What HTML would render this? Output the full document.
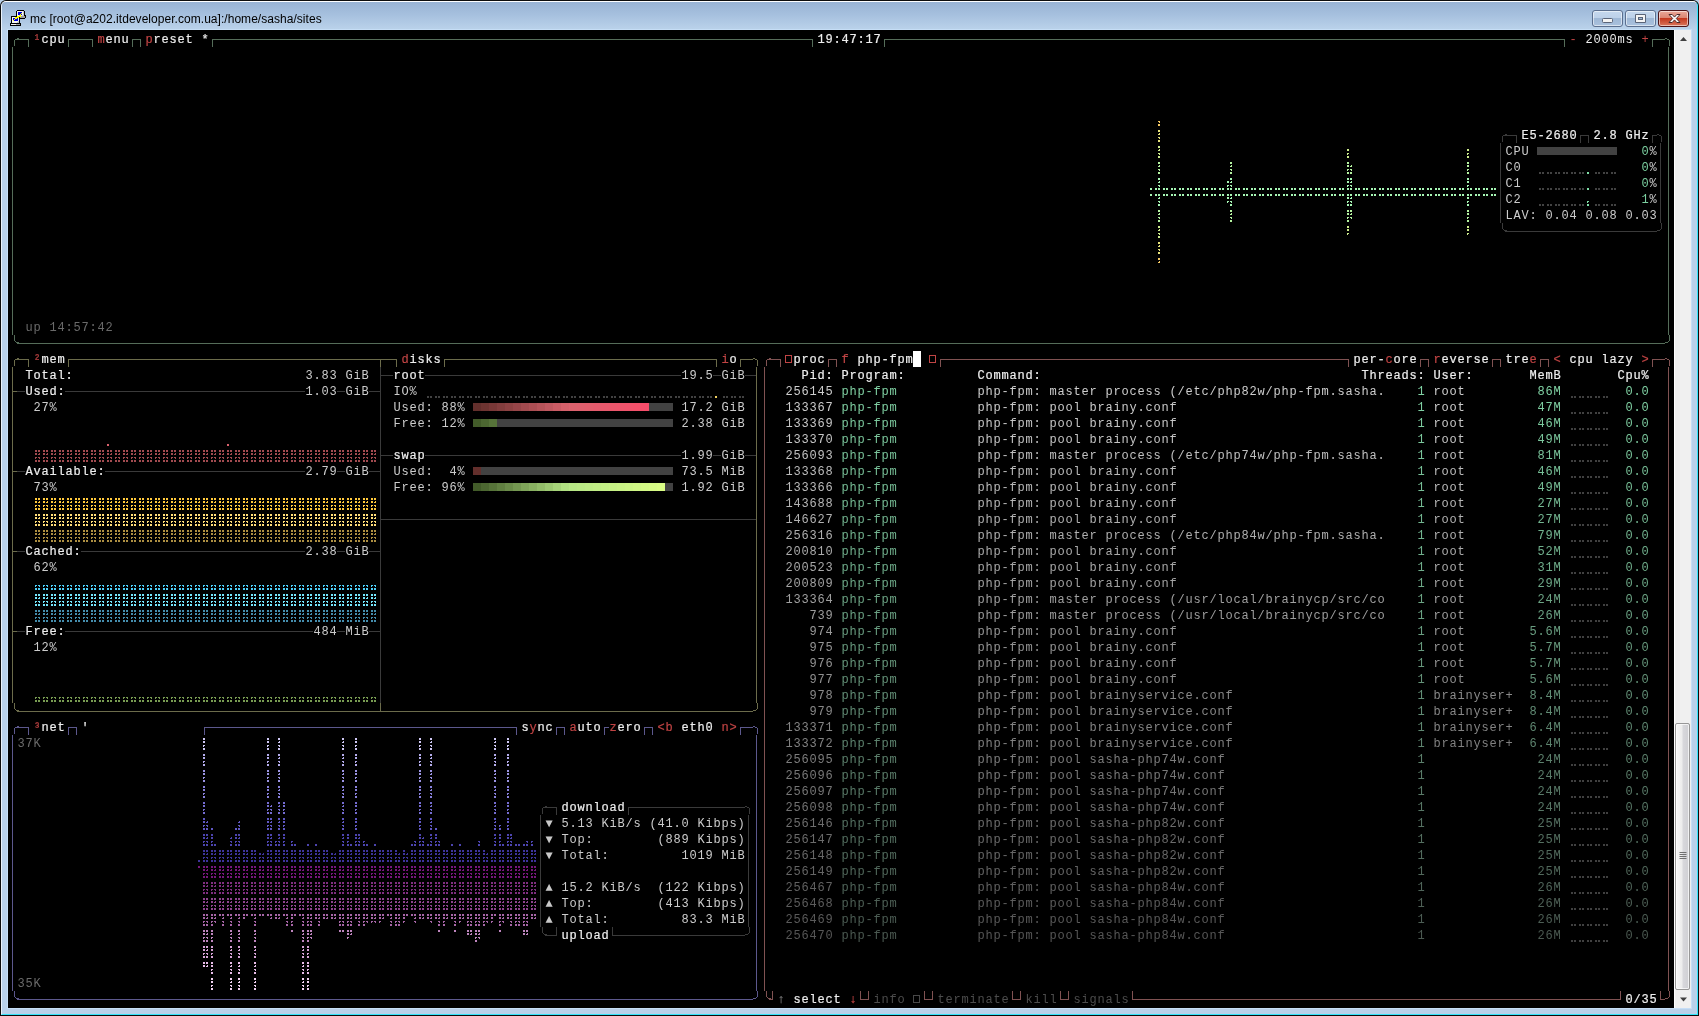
<!DOCTYPE html>
<html lang="en"><head><meta charset="utf-8">
<title>mc [root@a202.itdeveloper.com.ua]:/home/sasha/sites</title>
<style>
html,body{margin:0;padding:0}
body{width:1699px;height:1016px;overflow:hidden;background:#b9d1ea;position:relative;font-family:"Liberation Sans",sans-serif}
#frame{position:absolute;left:0;top:0;width:1699px;height:1016px;background:#0c0c0c;border-radius:6px 6px 0 0}
#frame2{position:absolute;left:1px;top:1px;width:1695px;height:1012px;border-top:1px solid #fdfeff;border-left:1px solid #eaf2fb;border-right:1px solid #33e4fb;border-bottom:1px solid #33e4fb;border-radius:5px 5px 0 0;background:#b9d1ea}
#tbar{position:absolute;left:2px;top:2px;width:1695px;height:28px;border-radius:4px 4px 0 0;background:linear-gradient(#98b3d4,#a6c0de 45%,#bbd3eb)}
#inner{position:absolute;left:7px;top:29px;width:1685px;height:980px;background:#c6def6}
#client{position:absolute;left:8px;top:30px;width:1666px;height:978px;background:#000}
#title{position:absolute;left:30px;top:11px;will-change:transform;font-size:12px;line-height:16px;color:#000;white-space:nowrap;letter-spacing:.04px}
#icon{position:absolute;left:10px;top:10px}
.wb{position:absolute;top:10px;height:15px;border:1px solid #5b6f8f;border-radius:3px;box-shadow:inset 0 0 0 1px rgba(255,255,255,.55);background:linear-gradient(#c5d8ee 0,#bdd1e9 45%,#9fb8d6 50%,#a9c1dd 100%)}
#bmin{left:1592px;width:29px}
#bmax{left:1625px;width:29px}
#bclose{left:1658px;width:29px;border-color:#4c1418;background:linear-gradient(#eaa898 0,#dc8672 45%,#c4391f 50%,#d9765c 100%)}
#sb{position:absolute;left:1674px;top:30px;width:17px;height:978px;background:#f0f0f0;border-left:1px solid #fff;box-sizing:border-box}
#thumb{position:absolute;left:1675px;top:723px;width:13px;height:265px;border:1px solid #979797;border-radius:2px;background:linear-gradient(90deg,#f6f6f6,#ececec 48%,#d8d8dc 52%,#cfcfd3);box-shadow:inset 0 0 0 1px rgba(255,255,255,.7)}
#term{position:absolute;left:0;top:0;width:1699px;height:1016px;font-family:"Liberation Mono","DejaVu Sans Mono",monospace;font-size:12px;letter-spacing:.8px;line-height:16px;color:#ccc;will-change:transform}
#gfx{position:absolute;left:0;top:0}
.r{position:absolute;left:.4px;height:16px;width:1699px;white-space:pre}
.r span{position:absolute;top:1px;white-space:pre}
.b{-webkit-text-stroke:.2px}
.c0{color:#4b5951}
.c1{color:#4c4c4c}
.c2{color:#4c5d54}
.c3{color:#4e6056}
.c4{color:#4f6459}
.c5{color:#51685b}
.c6{color:#526b5d}
.c7{color:#546f60}
.c8{color:#557162}
.c9{color:#565656}
.c10{color:#577665}
.c11{color:#597a68}
.c12{color:#5a5a5a}
.c13{color:#5a7c69}
.c14{color:#5c806c}
.c15{color:#5d5d5d}
.c16{color:#5e846f}
.c17{color:#5f8771}
.c18{color:#616161}
.c19{color:#618b74}
.c20{color:#628e76}
.c21{color:#649278}
.c22{color:#656565}
.c23{color:#66967b}
.c24{color:#676767}
.c25{color:#67997d}
.c26{color:#699d80}
.c27{color:#6a6a6a}
.c28{color:#6aa183}
.c29{color:#6b6b6b}
.c30{color:#6ca484}
.c31{color:#6da887}
.c32{color:#6e6e6e}
.c33{color:#6fac8a}
.c34{color:#70af8c}
.c35{color:#727272}
.c36{color:#72b38f}
.c37{color:#73b590}
.c38{color:#75ba93}
.c39{color:#767676}
.c40{color:#77be96}
.c41{color:#78c098}
.c42{color:#797979}
.c43{color:#7a7a7a}
.c44{color:#7ac49b}
.c45{color:#7bd0a0}
.c46{color:#7cc89d}
.c47{color:#7d7d7d}
.c48{color:#7dcb9f}
.c49{color:#7fcfa2}
.c50{color:#80d2a4}
.c51{color:#818181}
.c52{color:#848484}
.c53{color:#888888}
.c54{color:#8a8a8a}
.c55{color:#8f8f8f}
.c56{color:#939393}
.c57{color:#959595}
.c58{color:#999999}
.c59{color:#9d9d9d}
.c60{color:#a0a0a0}
.c61{color:#a4a4a4}
.c62{color:#a8a8a8}
.c63{color:#ababab}
.c64{color:#afafaf}
.c65{color:#b2b2b2}
.c66{color:#b6b6b6}
.c67{color:#bababa}
.c68{color:#bcbcbc}
.c69{color:#c04444}
.c70{color:#c0c0c0}
.c71{color:#c5c5c5}
.c72{color:#c7c7c7}
.c73{color:#c8c8c8}
.c74{color:#cbcbcb}
.c75{color:#cccccc}
.c76{color:#cecece}
.c77{color:#eeeeee}
</style></head><body>
<div id="frame"></div><div id="frame2"></div><div id="tbar"></div><div id="inner"></div>
<svg id="icon" width="16" height="16" viewBox="0 0 16 16" shape-rendering="crispEdges"><path fill="#000" d="M7 0h7v1h-7zM6 1h1v1h-1zM14 1h1v1h-1zM6 2h1v1h-1zM14 2h1v1h-1zM6 3h1v1h-1zM14 3h1v1h-1zM6 4h1v1h-1zM14 4h1v1h-1zM6 5h1v1h-1zM14 5h2v1h-2zM1 6h6v1h-6zM15 6h1v1h-1zM1 7h1v1h-1zM9 7h1v1h-1zM15 7h1v1h-1zM1 8h1v1h-1zM9 8h6v1h-6zM1 9h1v1h-1zM9 9h1v1h-1zM1 10h1v1h-1zM9 10h1v1h-1zM1 11h1v1h-1zM9 11h1v1h-1zM1 12h1v1h-1zM9 12h1v1h-1zM0 13h11v1h-11zM0 14h1v1h-1zM10 14h1v1h-1zM0 15h11v1h-11z"/><path fill="#f4f4f4" d="M7 1h6v1h-6zM7 2h1v1h-1zM12 2h1v1h-1zM7 3h1v1h-1zM12 3h1v1h-1zM7 4h1v1h-1zM12 4h1v1h-1zM7 5h2v1h-2zM11 5h1v1h-1zM2 7h3v1h-3zM2 8h1v1h-1zM8 8h1v1h-1zM2 9h1v1h-1zM8 9h1v1h-1zM2 10h1v1h-1zM8 10h1v1h-1zM2 11h6v1h-6zM2 12h5v1h-5zM1 14h5v1h-5z"/><path fill="#c8c8c8" d="M13 1h1v1h-1zM13 2h1v1h-1zM13 3h1v1h-1zM13 4h1v1h-1zM12 5h2v1h-2zM8 11h1v1h-1zM7 12h2v1h-2z"/><path fill="#0000e0" d="M8 2h4v1h-4zM8 3h3v1h-3zM8 4h2v1h-2zM11 4h1v1h-1zM3 8h2v1h-2zM7 8h1v1h-1zM3 9h1v1h-1zM5 9h3v1h-3zM4 10h4v1h-4z"/><path fill="#ffff00" d="M11 3h1v1h-1zM10 4h1v1h-1zM9 5h2v1h-2zM7 6h4v1h-4zM5 7h4v1h-4zM5 8h2v1h-2zM4 9h1v1h-1zM3 10h1v1h-1z"/><path fill="#a0a0a0" d="M11 6h4v1h-4zM10 7h5v1h-5zM6 14h4v1h-4z"/></svg>
<div id="title">mc [root@a202.itdeveloper.com.ua]:/home/sasha/sites</div>
<div class="wb" id="bmin"></div><div class="wb" id="bmax"></div><div class="wb" id="bclose"></div>
<svg style="position:absolute;left:1590px;top:8px" width="104" height="22" viewBox="0 0 104 22">
<rect x="12.5" y="10.5" width="10" height="4" rx="1" fill="#f4f4f4" stroke="#5a6478"/>
<path d="M45.5 6.5h10v8h-10z" fill="#f4f4f4" stroke="#5a6478" stroke-linejoin="round"/><rect x="48.5" y="9.5" width="4" height="2" fill="#9fb8d6" stroke="#5a6478"/>
<path d="M79 6.5h3.2l2.3 2.6 2.3-2.6h3.2l-3.7 4 3.7 4h-3.2l-2.3-2.6-2.3 2.6h-3.2l3.7-4z" fill="#fff" stroke="#4a2a2a" stroke-width="1"/>
</svg>
<div id="client"></div><div id="sb"></div><div id="thumb"></div>
<svg style="position:absolute;left:1674px;top:30px" width="17" height="978" viewBox="0 0 17 978">
<path d="M6 11l3.5-4 3.5 4z" fill="#404040"/><path d="M6 967.5h7l-3.5 4z" fill="#404040"/>
<path d="M5.5 822.5h7M5.5 824.5h7M5.5 826.5h7M5.5 828.5h7" stroke="#707070" fill="none"/>
</svg>
<div id="term">
<svg id="gfx" width="1699" height="1016" viewBox="0 0 1699 1016" shape-rendering="crispEdges">
<path fill="#556d59" d="M14 40h1v6h-1zM15 39h2v1h-2zM17 38h2v1h-2zM17 39h8v1h-8zM25 39h4v1h-4zM28 40h1v7h-1zM68 39h5v1h-5zM68 40h1v7h-1zM73 39h8v1h-8zM81 39h8v1h-8zM89 39h4v1h-4zM92 40h1v7h-1zM132 39h5v1h-5zM132 40h1v7h-1zM137 39h4v1h-4zM140 40h1v7h-1zM212 39h5v1h-5zM212 40h1v7h-1zM217 39h592v1h-592zM809 39h4v1h-4zM812 40h1v7h-1zM884 39h5v1h-5zM884 40h1v7h-1zM889 39h672v1h-672zM1561 39h4v1h-4zM1564 40h1v7h-1zM1652 39h5v1h-5zM1652 40h1v7h-1zM1657 39h8v1h-8zM1665 38h2v1h-2zM1667 39h2v1h-2zM1669 40h1v6h-1zM12 47h1v288h-1zM1668 47h1v288h-1zM14 335h1v6h-1zM15 341h1v1h-1zM16 342h3v1h-3zM17 343h1648v1h-1648zM1669 335h1v6h-1zM1668 341h1v1h-1zM1665 342h3v1h-3z"/>
<path fill="#3a3a3a" d="M1502 136h1v6h-1zM1503 135h2v1h-2zM1505 134h2v1h-2zM1505 135h8v1h-8zM1513 135h4v1h-4zM1516 136h1v7h-1zM1580 135h5v1h-5zM1580 136h1v7h-1zM1585 135h4v1h-4zM1588 136h1v7h-1zM1652 135h5v1h-5zM1652 136h1v7h-1zM1657 134h2v1h-2zM1659 135h2v1h-2zM1661 136h1v6h-1zM1500 143h1v80h-1zM1660 143h1v80h-1zM1502 223h1v6h-1zM1503 229h1v1h-1zM1504 230h3v1h-3zM1505 231h152v1h-152zM1661 223h1v6h-1zM1660 229h1v1h-1zM1657 230h3v1h-3zM380 367h1v336h-1zM17 391h8v1h-8zM65 391h240v1h-240zM337 391h8v1h-8zM369 391h11v1h-11zM17 471h8v1h-8zM105 471h200v1h-200zM337 471h8v1h-8zM369 471h11v1h-11zM17 551h8v1h-8zM81 551h224v1h-224zM337 551h8v1h-8zM369 551h11v1h-11zM17 631h8v1h-8zM65 631h248v1h-248zM337 631h8v1h-8zM369 631h11v1h-11zM381 375h4v1h-4zM385 375h8v1h-8zM425 375h256v1h-256zM713 375h8v1h-8zM745 375h11v1h-11zM381 455h4v1h-4zM385 455h8v1h-8zM425 455h256v1h-256zM713 455h8v1h-8zM745 455h11v1h-11zM381 519h375v1h-375zM542 808h1v6h-1zM543 807h2v1h-2zM545 806h2v1h-2zM545 807h8v1h-8zM553 807h4v1h-4zM556 808h1v7h-1zM628 807h5v1h-5zM628 808h1v7h-1zM633 807h112v1h-112zM745 806h2v1h-2zM747 807h2v1h-2zM749 808h1v6h-1zM540 815h1v112h-1zM748 815h1v112h-1zM542 927h1v6h-1zM543 933h1v1h-1zM544 934h3v1h-3zM545 935h8v1h-8zM556 927h1v8h-1zM553 935h4v1h-4zM612 927h1v8h-1zM612 935h5v1h-5zM617 935h128v1h-128zM749 927h1v6h-1zM748 933h1v1h-1zM745 934h3v1h-3z"/>
<path fill="#424242" d="M1537 147h80v8h-80zM1539 172h2v2h-2zM1542 172h2v2h-2zM1547 172h2v2h-2zM1550 172h2v2h-2zM1555 172h2v2h-2zM1558 172h2v2h-2zM1563 172h2v2h-2zM1566 172h2v2h-2zM1571 172h2v2h-2zM1574 172h2v2h-2zM1579 172h2v2h-2zM1582 172h2v2h-2zM1595 172h2v2h-2zM1598 172h2v2h-2zM1603 172h2v2h-2zM1606 172h2v2h-2zM1611 172h2v2h-2zM1614 172h2v2h-2zM1539 188h2v2h-2zM1542 188h2v2h-2zM1547 188h2v2h-2zM1550 188h2v2h-2zM1555 188h2v2h-2zM1558 188h2v2h-2zM1563 188h2v2h-2zM1566 188h2v2h-2zM1571 188h2v2h-2zM1574 188h2v2h-2zM1579 188h2v2h-2zM1582 188h2v2h-2zM1595 188h2v2h-2zM1598 188h2v2h-2zM1603 188h2v2h-2zM1606 188h2v2h-2zM1611 188h2v2h-2zM1614 188h2v2h-2zM1539 204h2v2h-2zM1542 204h2v2h-2zM1547 204h2v2h-2zM1550 204h2v2h-2zM1555 204h2v2h-2zM1558 204h2v2h-2zM1563 204h2v2h-2zM1566 204h2v2h-2zM1571 204h2v2h-2zM1574 204h2v2h-2zM1579 204h2v2h-2zM1582 204h2v2h-2zM1595 204h2v2h-2zM1598 204h2v2h-2zM1603 204h2v2h-2zM1606 204h2v2h-2zM1611 204h2v2h-2zM1614 204h2v2h-2zM427 396h2v2h-2zM430 396h2v2h-2zM435 396h2v2h-2zM438 396h2v2h-2zM443 396h2v2h-2zM446 396h2v2h-2zM451 396h2v2h-2zM454 396h2v2h-2zM459 396h2v2h-2zM462 396h2v2h-2zM467 396h2v2h-2zM470 396h2v2h-2zM475 396h2v2h-2zM478 396h2v2h-2zM483 396h2v2h-2zM486 396h2v2h-2zM491 396h2v2h-2zM494 396h2v2h-2zM499 396h2v2h-2zM502 396h2v2h-2zM507 396h2v2h-2zM510 396h2v2h-2zM515 396h2v2h-2zM518 396h2v2h-2zM523 396h2v2h-2zM526 396h2v2h-2zM531 396h2v2h-2zM534 396h2v2h-2zM539 396h2v2h-2zM542 396h2v2h-2zM547 396h2v2h-2zM550 396h2v2h-2zM555 396h2v2h-2zM558 396h2v2h-2zM563 396h2v2h-2zM566 396h2v2h-2zM571 396h2v2h-2zM574 396h2v2h-2zM579 396h2v2h-2zM582 396h2v2h-2zM587 396h2v2h-2zM590 396h2v2h-2zM595 396h2v2h-2zM598 396h2v2h-2zM603 396h2v2h-2zM606 396h2v2h-2zM611 396h2v2h-2zM614 396h2v2h-2zM619 396h2v2h-2zM622 396h2v2h-2zM627 396h2v2h-2zM630 396h2v2h-2zM635 396h2v2h-2zM638 396h2v2h-2zM643 396h2v2h-2zM646 396h2v2h-2zM651 396h2v2h-2zM654 396h2v2h-2zM659 396h2v2h-2zM662 396h2v2h-2zM667 396h2v2h-2zM670 396h2v2h-2zM675 396h2v2h-2zM678 396h2v2h-2zM683 396h2v2h-2zM686 396h2v2h-2zM691 396h2v2h-2zM694 396h2v2h-2zM699 396h2v2h-2zM702 396h2v2h-2zM707 396h2v2h-2zM710 396h2v2h-2zM723 396h2v2h-2zM726 396h2v2h-2zM731 396h2v2h-2zM734 396h2v2h-2zM739 396h2v2h-2zM742 396h2v2h-2zM649 403h8v8h-8zM657 403h8v8h-8zM665 403h8v8h-8zM497 419h8v8h-8zM505 419h8v8h-8zM513 419h8v8h-8zM521 419h8v8h-8zM529 419h8v8h-8zM537 419h8v8h-8zM545 419h8v8h-8zM553 419h8v8h-8zM561 419h8v8h-8zM569 419h8v8h-8zM577 419h8v8h-8zM585 419h8v8h-8zM593 419h8v8h-8zM601 419h8v8h-8zM609 419h8v8h-8zM617 419h8v8h-8zM625 419h8v8h-8zM633 419h8v8h-8zM641 419h8v8h-8zM649 419h8v8h-8zM657 419h8v8h-8zM665 419h8v8h-8zM481 467h8v8h-8zM489 467h8v8h-8zM497 467h8v8h-8zM505 467h8v8h-8zM513 467h8v8h-8zM521 467h8v8h-8zM529 467h8v8h-8zM537 467h8v8h-8zM545 467h8v8h-8zM553 467h8v8h-8zM561 467h8v8h-8zM569 467h8v8h-8zM577 467h8v8h-8zM585 467h8v8h-8zM593 467h8v8h-8zM601 467h8v8h-8zM609 467h8v8h-8zM617 467h8v8h-8zM625 467h8v8h-8zM633 467h8v8h-8zM641 467h8v8h-8zM649 467h8v8h-8zM657 467h8v8h-8zM665 467h8v8h-8zM665 483h8v8h-8z"/>
<path fill="#7fe0a8" d="M1587 172h2v2h-2zM1587 188h2v2h-2zM1587 204h2v2h-2zM1587 201h2v1h-2zM1587 202h1v1h-1z"/>
<path fill="#a6f5b4" d="M1150 188h2v2h-2zM1150 194h2v2h-2zM1155 188h2v2h-2zM1155 194h2v2h-2zM1158 188h2v2h-2zM1158 185h2v1h-2zM1159 186h1v1h-1zM1159 181h1v1h-1zM1158 182h2v1h-2zM1158 178h2v2h-2zM1158 194h2v2h-2zM1159 197h1v1h-1zM1158 198h2v1h-2zM1158 201h2v1h-2zM1159 202h1v1h-1zM1158 204h2v2h-2zM1163 188h2v2h-2zM1163 194h2v2h-2zM1166 188h2v2h-2zM1166 194h2v2h-2zM1171 188h2v2h-2zM1171 194h2v2h-2zM1174 188h2v2h-2zM1174 194h2v2h-2zM1179 188h2v2h-2zM1179 194h2v2h-2zM1182 188h2v2h-2zM1182 194h2v2h-2zM1187 188h2v2h-2zM1187 194h2v2h-2zM1190 188h2v2h-2zM1190 194h2v2h-2zM1195 188h2v2h-2zM1195 194h2v2h-2zM1198 188h2v2h-2zM1198 194h2v2h-2zM1203 188h2v2h-2zM1203 194h2v2h-2zM1206 188h2v2h-2zM1206 194h2v2h-2zM1211 188h2v2h-2zM1211 194h2v2h-2zM1214 188h2v2h-2zM1214 194h2v2h-2zM1219 188h2v2h-2zM1219 194h2v2h-2zM1222 188h2v2h-2zM1222 194h2v2h-2zM1227 188h2v2h-2zM1227 185h2v1h-2zM1227 186h1v1h-1zM1227 181h2v2h-2zM1227 194h2v2h-2zM1227 197h2v2h-2zM1227 201h2v1h-2zM1227 202h1v1h-1zM1230 188h2v2h-2zM1230 185h2v1h-2zM1231 186h1v1h-1zM1231 181h1v1h-1zM1230 182h2v1h-2zM1230 178h2v2h-2zM1230 194h2v2h-2zM1231 197h1v1h-1zM1230 198h2v1h-2zM1230 201h2v1h-2zM1231 202h1v1h-1zM1230 204h2v2h-2zM1235 188h2v2h-2zM1235 194h2v2h-2zM1238 188h2v2h-2zM1238 194h2v2h-2zM1243 188h2v2h-2zM1243 194h2v2h-2zM1246 188h2v2h-2zM1246 194h2v2h-2zM1251 188h2v2h-2zM1251 194h2v2h-2zM1254 188h2v2h-2zM1254 194h2v2h-2zM1259 188h2v2h-2zM1259 194h2v2h-2zM1262 188h2v2h-2zM1262 194h2v2h-2zM1267 188h2v2h-2zM1267 194h2v2h-2zM1270 188h2v2h-2zM1270 194h2v2h-2zM1275 188h2v2h-2zM1275 194h2v2h-2zM1278 188h2v2h-2zM1278 194h2v2h-2zM1283 188h2v2h-2zM1283 194h2v2h-2zM1286 188h2v2h-2zM1286 194h2v2h-2zM1291 188h2v2h-2zM1291 194h2v2h-2zM1294 188h2v2h-2zM1294 194h2v2h-2zM1299 188h2v2h-2zM1299 194h2v2h-2zM1302 188h2v2h-2zM1302 194h2v2h-2zM1307 188h2v2h-2zM1307 194h2v2h-2zM1310 188h2v2h-2zM1310 194h2v2h-2zM1315 188h2v2h-2zM1315 194h2v2h-2zM1318 188h2v2h-2zM1318 194h2v2h-2zM1323 188h2v2h-2zM1323 194h2v2h-2zM1326 188h2v2h-2zM1326 194h2v2h-2zM1331 188h2v2h-2zM1331 194h2v2h-2zM1334 188h2v2h-2zM1334 194h2v2h-2zM1339 188h2v2h-2zM1339 194h2v2h-2zM1342 188h2v2h-2zM1342 194h2v2h-2zM1347 188h2v2h-2zM1347 185h2v1h-2zM1347 186h1v1h-1zM1347 181h2v2h-2zM1347 178h2v2h-2zM1347 194h2v2h-2zM1347 197h2v2h-2zM1347 201h2v1h-2zM1347 202h1v1h-1zM1347 204h2v2h-2zM1350 188h2v2h-2zM1350 185h2v1h-2zM1351 186h1v1h-1zM1351 181h1v1h-1zM1350 182h2v1h-2zM1350 178h2v2h-2zM1350 194h2v2h-2zM1351 197h1v1h-1zM1350 198h2v1h-2zM1350 201h2v1h-2zM1351 202h1v1h-1zM1350 204h2v2h-2zM1355 188h2v2h-2zM1355 194h2v2h-2zM1358 188h2v2h-2zM1358 194h2v2h-2zM1363 188h2v2h-2zM1363 194h2v2h-2zM1366 188h2v2h-2zM1366 194h2v2h-2zM1371 188h2v2h-2zM1371 194h2v2h-2zM1374 188h2v2h-2zM1374 194h2v2h-2zM1379 188h2v2h-2zM1379 194h2v2h-2zM1382 188h2v2h-2zM1382 194h2v2h-2zM1387 188h2v2h-2zM1387 194h2v2h-2zM1390 188h2v2h-2zM1390 194h2v2h-2zM1395 188h2v2h-2zM1395 194h2v2h-2zM1398 188h2v2h-2zM1398 194h2v2h-2zM1403 188h2v2h-2zM1403 194h2v2h-2zM1406 188h2v2h-2zM1406 194h2v2h-2zM1411 188h2v2h-2zM1411 194h2v2h-2zM1414 188h2v2h-2zM1414 194h2v2h-2zM1419 188h2v2h-2zM1419 194h2v2h-2zM1422 188h2v2h-2zM1422 194h2v2h-2zM1427 188h2v2h-2zM1427 194h2v2h-2zM1430 188h2v2h-2zM1430 194h2v2h-2zM1435 188h2v2h-2zM1435 194h2v2h-2zM1438 188h2v2h-2zM1438 194h2v2h-2zM1443 188h2v2h-2zM1443 194h2v2h-2zM1446 188h2v2h-2zM1446 194h2v2h-2zM1451 188h2v2h-2zM1451 194h2v2h-2zM1454 188h2v2h-2zM1454 194h2v2h-2zM1459 188h2v2h-2zM1459 194h2v2h-2zM1462 188h2v2h-2zM1462 194h2v2h-2zM1467 188h2v2h-2zM1467 185h2v1h-2zM1467 186h1v1h-1zM1467 181h2v2h-2zM1467 178h2v2h-2zM1467 194h2v2h-2zM1467 197h2v2h-2zM1467 201h2v1h-2zM1467 202h1v1h-1zM1467 204h2v2h-2zM1470 188h2v2h-2zM1470 194h2v2h-2zM1475 188h2v2h-2zM1475 194h2v2h-2zM1478 188h2v2h-2zM1478 194h2v2h-2zM1483 188h2v2h-2zM1483 194h2v2h-2zM1486 188h2v2h-2zM1486 194h2v2h-2zM1491 188h2v2h-2zM1491 194h2v2h-2zM1494 188h2v2h-2zM1494 194h2v2h-2z"/>
<path fill="#b4f2a0" d="M1158 172h2v2h-2zM1158 169h2v1h-2zM1159 170h1v1h-1zM1159 165h1v1h-1zM1158 166h2v1h-2zM1158 162h2v2h-2zM1158 210h2v2h-2zM1159 213h1v1h-1zM1158 214h2v1h-2zM1158 217h2v1h-2zM1159 218h1v1h-1zM1158 220h2v2h-2zM1230 172h2v2h-2zM1230 169h2v1h-2zM1231 170h1v1h-1zM1231 165h1v1h-1zM1230 166h2v1h-2zM1230 162h2v2h-2zM1230 210h2v2h-2zM1231 213h1v1h-1zM1230 214h2v1h-2zM1230 217h2v1h-2zM1231 218h1v1h-1zM1230 220h2v2h-2zM1347 172h2v2h-2zM1347 169h2v1h-2zM1347 170h1v1h-1zM1347 165h2v2h-2zM1347 162h2v2h-2zM1347 210h2v2h-2zM1347 213h2v2h-2zM1347 217h2v1h-2zM1347 218h1v1h-1zM1347 220h2v2h-2zM1350 172h2v2h-2zM1350 169h2v1h-2zM1351 170h1v1h-1zM1351 165h1v1h-1zM1350 166h2v1h-2zM1350 210h2v2h-2zM1351 213h1v1h-1zM1350 214h2v1h-2zM1350 217h2v1h-2zM1351 218h1v1h-1zM1467 172h2v2h-2zM1467 169h2v1h-2zM1467 170h1v1h-1zM1467 165h2v2h-2zM1467 162h2v2h-2zM1467 210h2v2h-2zM1467 213h2v2h-2zM1467 217h2v1h-2zM1467 218h1v1h-1zM1467 220h2v2h-2z"/>
<path fill="#cdec8c" d="M1158 156h2v2h-2zM1158 153h2v1h-2zM1159 154h1v1h-1zM1159 149h1v1h-1zM1158 150h2v1h-2zM1158 146h2v2h-2zM1158 226h2v2h-2zM1159 229h1v1h-1zM1158 230h2v1h-2zM1158 233h2v1h-2zM1159 234h1v1h-1zM1158 236h2v2h-2zM1347 156h2v2h-2zM1347 153h2v1h-2zM1347 154h1v1h-1zM1347 149h2v2h-2zM1347 226h2v2h-2zM1347 229h2v2h-2zM1347 233h2v1h-2zM1347 234h1v1h-1zM1467 156h2v2h-2zM1467 153h2v1h-2zM1467 154h1v1h-1zM1467 149h2v2h-2zM1467 226h2v2h-2zM1467 229h2v2h-2zM1467 233h2v1h-2zM1467 234h1v1h-1z"/>
<path fill="#e6e27a" d="M1158 140h2v2h-2zM1158 137h2v1h-2zM1159 138h1v1h-1zM1159 133h1v1h-1zM1158 134h2v1h-2zM1158 130h2v2h-2zM1158 242h2v2h-2zM1159 245h1v1h-1zM1158 246h2v1h-2zM1158 249h2v1h-2zM1159 250h1v1h-1zM1158 252h2v2h-2z"/>
<path fill="#f4c864" d="M1158 124h2v2h-2zM1158 121h2v1h-2zM1159 122h1v1h-1zM1158 258h2v2h-2zM1159 261h1v1h-1zM1158 262h2v1h-2z"/>
<path fill="#6c6c4b" d="M14 360h1v6h-1zM15 359h2v1h-2zM17 358h2v1h-2zM17 359h8v1h-8zM25 359h4v1h-4zM28 360h1v7h-1zM68 359h5v1h-5zM68 360h1v7h-1zM73 359h304v1h-304zM377 359h8v1h-8zM380 360h1v7h-1zM385 359h8v1h-8zM393 359h4v1h-4zM396 360h1v7h-1zM444 359h5v1h-5zM444 360h1v7h-1zM449 359h264v1h-264zM713 359h4v1h-4zM716 360h1v7h-1zM740 359h5v1h-5zM740 360h1v7h-1zM745 359h8v1h-8zM753 358h2v1h-2zM755 359h2v1h-2zM757 360h1v6h-1zM12 367h1v336h-1zM756 367h1v336h-1zM14 703h1v6h-1zM15 709h1v1h-1zM16 710h3v1h-3zM17 711h736v1h-736zM377 711h8v1h-8zM380 703h1v8h-1zM757 703h1v6h-1zM756 709h1v1h-1zM753 710h3v1h-3zM13 391h4v1h-4zM13 471h4v1h-4zM13 551h4v1h-4zM13 631h4v1h-4z"/>
<path fill="#a24b50" d="M35 450h2v2h-2zM35 453h2v2h-2zM35 457h2v1h-2zM35 458h1v1h-1zM35 460h2v2h-2zM38 450h2v2h-2zM39 453h1v1h-1zM38 454h2v1h-2zM38 457h2v1h-2zM39 458h1v1h-1zM38 460h2v2h-2zM43 450h2v2h-2zM43 453h2v2h-2zM43 457h2v1h-2zM43 458h1v1h-1zM43 460h2v2h-2zM46 450h2v2h-2zM47 453h1v1h-1zM46 454h2v1h-2zM46 457h2v1h-2zM47 458h1v1h-1zM46 460h2v2h-2zM51 450h2v2h-2zM51 453h2v2h-2zM51 457h2v1h-2zM51 458h1v1h-1zM51 460h2v2h-2zM54 450h2v2h-2zM55 453h1v1h-1zM54 454h2v1h-2zM54 457h2v1h-2zM55 458h1v1h-1zM54 460h2v2h-2zM59 450h2v2h-2zM59 453h2v2h-2zM59 457h2v1h-2zM59 458h1v1h-1zM59 460h2v2h-2zM62 450h2v2h-2zM63 453h1v1h-1zM62 454h2v1h-2zM62 457h2v1h-2zM63 458h1v1h-1zM62 460h2v2h-2zM67 450h2v2h-2zM67 453h2v2h-2zM67 457h2v1h-2zM67 458h1v1h-1zM67 460h2v2h-2zM70 450h2v2h-2zM71 453h1v1h-1zM70 454h2v1h-2zM70 457h2v1h-2zM71 458h1v1h-1zM70 460h2v2h-2zM75 450h2v2h-2zM75 453h2v2h-2zM75 457h2v1h-2zM75 458h1v1h-1zM75 460h2v2h-2zM78 450h2v2h-2zM79 453h1v1h-1zM78 454h2v1h-2zM78 457h2v1h-2zM79 458h1v1h-1zM78 460h2v2h-2zM83 450h2v2h-2zM83 453h2v2h-2zM83 457h2v1h-2zM83 458h1v1h-1zM83 460h2v2h-2zM86 450h2v2h-2zM87 453h1v1h-1zM86 454h2v1h-2zM86 457h2v1h-2zM87 458h1v1h-1zM86 460h2v2h-2zM91 450h2v2h-2zM91 453h2v2h-2zM91 457h2v1h-2zM91 458h1v1h-1zM91 460h2v2h-2zM94 450h2v2h-2zM95 453h1v1h-1zM94 454h2v1h-2zM94 457h2v1h-2zM95 458h1v1h-1zM94 460h2v2h-2zM99 450h2v2h-2zM99 453h2v2h-2zM99 457h2v1h-2zM99 458h1v1h-1zM99 460h2v2h-2zM102 450h2v2h-2zM103 453h1v1h-1zM102 454h2v1h-2zM102 457h2v1h-2zM103 458h1v1h-1zM102 460h2v2h-2zM107 450h2v2h-2zM107 453h2v2h-2zM107 457h2v1h-2zM107 458h1v1h-1zM107 460h2v2h-2zM110 450h2v2h-2zM111 453h1v1h-1zM110 454h2v1h-2zM110 457h2v1h-2zM111 458h1v1h-1zM110 460h2v2h-2zM115 450h2v2h-2zM115 453h2v2h-2zM115 457h2v1h-2zM115 458h1v1h-1zM115 460h2v2h-2zM118 450h2v2h-2zM119 453h1v1h-1zM118 454h2v1h-2zM118 457h2v1h-2zM119 458h1v1h-1zM118 460h2v2h-2zM123 450h2v2h-2zM123 453h2v2h-2zM123 457h2v1h-2zM123 458h1v1h-1zM123 460h2v2h-2zM126 450h2v2h-2zM127 453h1v1h-1zM126 454h2v1h-2zM126 457h2v1h-2zM127 458h1v1h-1zM126 460h2v2h-2zM131 450h2v2h-2zM131 453h2v2h-2zM131 457h2v1h-2zM131 458h1v1h-1zM131 460h2v2h-2zM134 450h2v2h-2zM135 453h1v1h-1zM134 454h2v1h-2zM134 457h2v1h-2zM135 458h1v1h-1zM134 460h2v2h-2zM139 450h2v2h-2zM139 453h2v2h-2zM139 457h2v1h-2zM139 458h1v1h-1zM139 460h2v2h-2zM142 450h2v2h-2zM143 453h1v1h-1zM142 454h2v1h-2zM142 457h2v1h-2zM143 458h1v1h-1zM142 460h2v2h-2zM147 450h2v2h-2zM147 453h2v2h-2zM147 457h2v1h-2zM147 458h1v1h-1zM147 460h2v2h-2zM150 450h2v2h-2zM151 453h1v1h-1zM150 454h2v1h-2zM150 457h2v1h-2zM151 458h1v1h-1zM150 460h2v2h-2zM155 450h2v2h-2zM155 453h2v2h-2zM155 457h2v1h-2zM155 458h1v1h-1zM155 460h2v2h-2zM158 450h2v2h-2zM159 453h1v1h-1zM158 454h2v1h-2zM158 457h2v1h-2zM159 458h1v1h-1zM158 460h2v2h-2zM163 450h2v2h-2zM163 453h2v2h-2zM163 457h2v1h-2zM163 458h1v1h-1zM163 460h2v2h-2zM166 450h2v2h-2zM167 453h1v1h-1zM166 454h2v1h-2zM166 457h2v1h-2zM167 458h1v1h-1zM166 460h2v2h-2zM171 450h2v2h-2zM171 453h2v2h-2zM171 457h2v1h-2zM171 458h1v1h-1zM171 460h2v2h-2zM174 450h2v2h-2zM175 453h1v1h-1zM174 454h2v1h-2zM174 457h2v1h-2zM175 458h1v1h-1zM174 460h2v2h-2zM179 450h2v2h-2zM179 453h2v2h-2zM179 457h2v1h-2zM179 458h1v1h-1zM179 460h2v2h-2zM182 450h2v2h-2zM183 453h1v1h-1zM182 454h2v1h-2zM182 457h2v1h-2zM183 458h1v1h-1zM182 460h2v2h-2zM187 450h2v2h-2zM187 453h2v2h-2zM187 457h2v1h-2zM187 458h1v1h-1zM187 460h2v2h-2zM190 450h2v2h-2zM191 453h1v1h-1zM190 454h2v1h-2zM190 457h2v1h-2zM191 458h1v1h-1zM190 460h2v2h-2zM195 450h2v2h-2zM195 453h2v2h-2zM195 457h2v1h-2zM195 458h1v1h-1zM195 460h2v2h-2zM198 450h2v2h-2zM199 453h1v1h-1zM198 454h2v1h-2zM198 457h2v1h-2zM199 458h1v1h-1zM198 460h2v2h-2zM203 450h2v2h-2zM203 453h2v2h-2zM203 457h2v1h-2zM203 458h1v1h-1zM203 460h2v2h-2zM206 450h2v2h-2zM207 453h1v1h-1zM206 454h2v1h-2zM206 457h2v1h-2zM207 458h1v1h-1zM206 460h2v2h-2zM211 450h2v2h-2zM211 453h2v2h-2zM211 457h2v1h-2zM211 458h1v1h-1zM211 460h2v2h-2zM214 450h2v2h-2zM215 453h1v1h-1zM214 454h2v1h-2zM214 457h2v1h-2zM215 458h1v1h-1zM214 460h2v2h-2zM219 450h2v2h-2zM219 453h2v2h-2zM219 457h2v1h-2zM219 458h1v1h-1zM219 460h2v2h-2zM222 450h2v2h-2zM223 453h1v1h-1zM222 454h2v1h-2zM222 457h2v1h-2zM223 458h1v1h-1zM222 460h2v2h-2zM227 450h2v2h-2zM227 453h2v2h-2zM227 457h2v1h-2zM227 458h1v1h-1zM227 460h2v2h-2zM230 450h2v2h-2zM231 453h1v1h-1zM230 454h2v1h-2zM230 457h2v1h-2zM231 458h1v1h-1zM230 460h2v2h-2zM235 450h2v2h-2zM235 453h2v2h-2zM235 457h2v1h-2zM235 458h1v1h-1zM235 460h2v2h-2zM238 450h2v2h-2zM239 453h1v1h-1zM238 454h2v1h-2zM238 457h2v1h-2zM239 458h1v1h-1zM238 460h2v2h-2zM243 450h2v2h-2zM243 453h2v2h-2zM243 457h2v1h-2zM243 458h1v1h-1zM243 460h2v2h-2zM246 450h2v2h-2zM247 453h1v1h-1zM246 454h2v1h-2zM246 457h2v1h-2zM247 458h1v1h-1zM246 460h2v2h-2zM251 450h2v2h-2zM251 453h2v2h-2zM251 457h2v1h-2zM251 458h1v1h-1zM251 460h2v2h-2zM254 450h2v2h-2zM255 453h1v1h-1zM254 454h2v1h-2zM254 457h2v1h-2zM255 458h1v1h-1zM254 460h2v2h-2zM259 450h2v2h-2zM259 453h2v2h-2zM259 457h2v1h-2zM259 458h1v1h-1zM259 460h2v2h-2zM262 450h2v2h-2zM263 453h1v1h-1zM262 454h2v1h-2zM262 457h2v1h-2zM263 458h1v1h-1zM262 460h2v2h-2zM267 450h2v2h-2zM267 453h2v2h-2zM267 457h2v1h-2zM267 458h1v1h-1zM267 460h2v2h-2zM270 450h2v2h-2zM271 453h1v1h-1zM270 454h2v1h-2zM270 457h2v1h-2zM271 458h1v1h-1zM270 460h2v2h-2zM275 450h2v2h-2zM275 453h2v2h-2zM275 457h2v1h-2zM275 458h1v1h-1zM275 460h2v2h-2zM278 450h2v2h-2zM279 453h1v1h-1zM278 454h2v1h-2zM278 457h2v1h-2zM279 458h1v1h-1zM278 460h2v2h-2zM283 450h2v2h-2zM283 453h2v2h-2zM283 457h2v1h-2zM283 458h1v1h-1zM283 460h2v2h-2zM286 450h2v2h-2zM287 453h1v1h-1zM286 454h2v1h-2zM286 457h2v1h-2zM287 458h1v1h-1zM286 460h2v2h-2zM291 450h2v2h-2zM291 453h2v2h-2zM291 457h2v1h-2zM291 458h1v1h-1zM291 460h2v2h-2zM294 450h2v2h-2zM295 453h1v1h-1zM294 454h2v1h-2zM294 457h2v1h-2zM295 458h1v1h-1zM294 460h2v2h-2zM299 450h2v2h-2zM299 453h2v2h-2zM299 457h2v1h-2zM299 458h1v1h-1zM299 460h2v2h-2zM302 450h2v2h-2zM303 453h1v1h-1zM302 454h2v1h-2zM302 457h2v1h-2zM303 458h1v1h-1zM302 460h2v2h-2zM307 450h2v2h-2zM307 453h2v2h-2zM307 457h2v1h-2zM307 458h1v1h-1zM307 460h2v2h-2zM310 450h2v2h-2zM311 453h1v1h-1zM310 454h2v1h-2zM310 457h2v1h-2zM311 458h1v1h-1zM310 460h2v2h-2zM315 450h2v2h-2zM315 453h2v2h-2zM315 457h2v1h-2zM315 458h1v1h-1zM315 460h2v2h-2zM318 450h2v2h-2zM319 453h1v1h-1zM318 454h2v1h-2zM318 457h2v1h-2zM319 458h1v1h-1zM318 460h2v2h-2zM323 450h2v2h-2zM323 453h2v2h-2zM323 457h2v1h-2zM323 458h1v1h-1zM323 460h2v2h-2zM326 450h2v2h-2zM327 453h1v1h-1zM326 454h2v1h-2zM326 457h2v1h-2zM327 458h1v1h-1zM326 460h2v2h-2zM331 450h2v2h-2zM331 453h2v2h-2zM331 457h2v1h-2zM331 458h1v1h-1zM331 460h2v2h-2zM334 450h2v2h-2zM335 453h1v1h-1zM334 454h2v1h-2zM334 457h2v1h-2zM335 458h1v1h-1zM334 460h2v2h-2zM339 450h2v2h-2zM339 453h2v2h-2zM339 457h2v1h-2zM339 458h1v1h-1zM339 460h2v2h-2zM342 450h2v2h-2zM343 453h1v1h-1zM342 454h2v1h-2zM342 457h2v1h-2zM343 458h1v1h-1zM342 460h2v2h-2zM347 450h2v2h-2zM347 453h2v2h-2zM347 457h2v1h-2zM347 458h1v1h-1zM347 460h2v2h-2zM350 450h2v2h-2zM351 453h1v1h-1zM350 454h2v1h-2zM350 457h2v1h-2zM351 458h1v1h-1zM350 460h2v2h-2zM355 450h2v2h-2zM355 453h2v2h-2zM355 457h2v1h-2zM355 458h1v1h-1zM355 460h2v2h-2zM358 450h2v2h-2zM359 453h1v1h-1zM358 454h2v1h-2zM358 457h2v1h-2zM359 458h1v1h-1zM358 460h2v2h-2zM363 450h2v2h-2zM363 453h2v2h-2zM363 457h2v1h-2zM363 458h1v1h-1zM363 460h2v2h-2zM366 450h2v2h-2zM367 453h1v1h-1zM366 454h2v1h-2zM366 457h2v1h-2zM367 458h1v1h-1zM366 460h2v2h-2zM371 450h2v2h-2zM371 453h2v2h-2zM371 457h2v1h-2zM371 458h1v1h-1zM371 460h2v2h-2zM374 450h2v2h-2zM375 453h1v1h-1zM374 454h2v1h-2zM374 457h2v1h-2zM375 458h1v1h-1zM374 460h2v2h-2z"/>
<path fill="#d9626d" d="M107 444h2v2h-2zM227 444h2v2h-2z"/>
<path fill="#ffc93c" d="M35 498h2v2h-2zM35 501h2v2h-2zM35 505h2v1h-2zM35 506h1v1h-1zM35 508h2v2h-2zM38 498h2v2h-2zM39 501h1v1h-1zM38 502h2v1h-2zM38 505h2v1h-2zM39 506h1v1h-1zM38 508h2v2h-2zM43 498h2v2h-2zM43 501h2v2h-2zM43 505h2v1h-2zM43 506h1v1h-1zM43 508h2v2h-2zM46 498h2v2h-2zM47 501h1v1h-1zM46 502h2v1h-2zM46 505h2v1h-2zM47 506h1v1h-1zM46 508h2v2h-2zM51 498h2v2h-2zM51 501h2v2h-2zM51 505h2v1h-2zM51 506h1v1h-1zM51 508h2v2h-2zM54 498h2v2h-2zM55 501h1v1h-1zM54 502h2v1h-2zM54 505h2v1h-2zM55 506h1v1h-1zM54 508h2v2h-2zM59 498h2v2h-2zM59 501h2v2h-2zM59 505h2v1h-2zM59 506h1v1h-1zM59 508h2v2h-2zM62 498h2v2h-2zM63 501h1v1h-1zM62 502h2v1h-2zM62 505h2v1h-2zM63 506h1v1h-1zM62 508h2v2h-2zM67 498h2v2h-2zM67 501h2v2h-2zM67 505h2v1h-2zM67 506h1v1h-1zM67 508h2v2h-2zM70 498h2v2h-2zM71 501h1v1h-1zM70 502h2v1h-2zM70 505h2v1h-2zM71 506h1v1h-1zM70 508h2v2h-2zM75 498h2v2h-2zM75 501h2v2h-2zM75 505h2v1h-2zM75 506h1v1h-1zM75 508h2v2h-2zM78 498h2v2h-2zM79 501h1v1h-1zM78 502h2v1h-2zM78 505h2v1h-2zM79 506h1v1h-1zM78 508h2v2h-2zM83 498h2v2h-2zM83 501h2v2h-2zM83 505h2v1h-2zM83 506h1v1h-1zM83 508h2v2h-2zM86 498h2v2h-2zM87 501h1v1h-1zM86 502h2v1h-2zM86 505h2v1h-2zM87 506h1v1h-1zM86 508h2v2h-2zM91 498h2v2h-2zM91 501h2v2h-2zM91 505h2v1h-2zM91 506h1v1h-1zM91 508h2v2h-2zM94 498h2v2h-2zM95 501h1v1h-1zM94 502h2v1h-2zM94 505h2v1h-2zM95 506h1v1h-1zM94 508h2v2h-2zM99 498h2v2h-2zM99 501h2v2h-2zM99 505h2v1h-2zM99 506h1v1h-1zM99 508h2v2h-2zM102 498h2v2h-2zM103 501h1v1h-1zM102 502h2v1h-2zM102 505h2v1h-2zM103 506h1v1h-1zM102 508h2v2h-2zM107 498h2v2h-2zM107 501h2v2h-2zM107 505h2v1h-2zM107 506h1v1h-1zM107 508h2v2h-2zM110 498h2v2h-2zM111 501h1v1h-1zM110 502h2v1h-2zM110 505h2v1h-2zM111 506h1v1h-1zM110 508h2v2h-2zM115 498h2v2h-2zM115 501h2v2h-2zM115 505h2v1h-2zM115 506h1v1h-1zM115 508h2v2h-2zM118 498h2v2h-2zM119 501h1v1h-1zM118 502h2v1h-2zM118 505h2v1h-2zM119 506h1v1h-1zM118 508h2v2h-2zM123 498h2v2h-2zM123 501h2v2h-2zM123 505h2v1h-2zM123 506h1v1h-1zM123 508h2v2h-2zM126 498h2v2h-2zM127 501h1v1h-1zM126 502h2v1h-2zM126 505h2v1h-2zM127 506h1v1h-1zM126 508h2v2h-2zM131 498h2v2h-2zM131 501h2v2h-2zM131 505h2v1h-2zM131 506h1v1h-1zM131 508h2v2h-2zM134 498h2v2h-2zM135 501h1v1h-1zM134 502h2v1h-2zM134 505h2v1h-2zM135 506h1v1h-1zM134 508h2v2h-2zM139 498h2v2h-2zM139 501h2v2h-2zM139 505h2v1h-2zM139 506h1v1h-1zM139 508h2v2h-2zM142 498h2v2h-2zM143 501h1v1h-1zM142 502h2v1h-2zM142 505h2v1h-2zM143 506h1v1h-1zM142 508h2v2h-2zM147 498h2v2h-2zM147 501h2v2h-2zM147 505h2v1h-2zM147 506h1v1h-1zM147 508h2v2h-2zM150 498h2v2h-2zM151 501h1v1h-1zM150 502h2v1h-2zM150 505h2v1h-2zM151 506h1v1h-1zM150 508h2v2h-2zM155 498h2v2h-2zM155 501h2v2h-2zM155 505h2v1h-2zM155 506h1v1h-1zM155 508h2v2h-2zM158 498h2v2h-2zM159 501h1v1h-1zM158 502h2v1h-2zM158 505h2v1h-2zM159 506h1v1h-1zM158 508h2v2h-2zM163 498h2v2h-2zM163 501h2v2h-2zM163 505h2v1h-2zM163 506h1v1h-1zM163 508h2v2h-2zM166 498h2v2h-2zM167 501h1v1h-1zM166 502h2v1h-2zM166 505h2v1h-2zM167 506h1v1h-1zM166 508h2v2h-2zM171 498h2v2h-2zM171 501h2v2h-2zM171 505h2v1h-2zM171 506h1v1h-1zM171 508h2v2h-2zM174 498h2v2h-2zM175 501h1v1h-1zM174 502h2v1h-2zM174 505h2v1h-2zM175 506h1v1h-1zM174 508h2v2h-2zM179 498h2v2h-2zM179 501h2v2h-2zM179 505h2v1h-2zM179 506h1v1h-1zM179 508h2v2h-2zM182 498h2v2h-2zM183 501h1v1h-1zM182 502h2v1h-2zM182 505h2v1h-2zM183 506h1v1h-1zM182 508h2v2h-2zM187 498h2v2h-2zM187 501h2v2h-2zM187 505h2v1h-2zM187 506h1v1h-1zM187 508h2v2h-2zM190 498h2v2h-2zM191 501h1v1h-1zM190 502h2v1h-2zM190 505h2v1h-2zM191 506h1v1h-1zM190 508h2v2h-2zM195 498h2v2h-2zM195 501h2v2h-2zM195 505h2v1h-2zM195 506h1v1h-1zM195 508h2v2h-2zM198 498h2v2h-2zM199 501h1v1h-1zM198 502h2v1h-2zM198 505h2v1h-2zM199 506h1v1h-1zM198 508h2v2h-2zM203 498h2v2h-2zM203 501h2v2h-2zM203 505h2v1h-2zM203 506h1v1h-1zM203 508h2v2h-2zM206 498h2v2h-2zM207 501h1v1h-1zM206 502h2v1h-2zM206 505h2v1h-2zM207 506h1v1h-1zM206 508h2v2h-2zM211 498h2v2h-2zM211 501h2v2h-2zM211 505h2v1h-2zM211 506h1v1h-1zM211 508h2v2h-2zM214 498h2v2h-2zM215 501h1v1h-1zM214 502h2v1h-2zM214 505h2v1h-2zM215 506h1v1h-1zM214 508h2v2h-2zM219 498h2v2h-2zM219 501h2v2h-2zM219 505h2v1h-2zM219 506h1v1h-1zM219 508h2v2h-2zM222 498h2v2h-2zM223 501h1v1h-1zM222 502h2v1h-2zM222 505h2v1h-2zM223 506h1v1h-1zM222 508h2v2h-2zM227 498h2v2h-2zM227 501h2v2h-2zM227 505h2v1h-2zM227 506h1v1h-1zM227 508h2v2h-2zM230 498h2v2h-2zM231 501h1v1h-1zM230 502h2v1h-2zM230 505h2v1h-2zM231 506h1v1h-1zM230 508h2v2h-2zM235 498h2v2h-2zM235 501h2v2h-2zM235 505h2v1h-2zM235 506h1v1h-1zM235 508h2v2h-2zM238 498h2v2h-2zM239 501h1v1h-1zM238 502h2v1h-2zM238 505h2v1h-2zM239 506h1v1h-1zM238 508h2v2h-2zM243 498h2v2h-2zM243 501h2v2h-2zM243 505h2v1h-2zM243 506h1v1h-1zM243 508h2v2h-2zM246 498h2v2h-2zM247 501h1v1h-1zM246 502h2v1h-2zM246 505h2v1h-2zM247 506h1v1h-1zM246 508h2v2h-2zM251 498h2v2h-2zM251 501h2v2h-2zM251 505h2v1h-2zM251 506h1v1h-1zM251 508h2v2h-2zM254 498h2v2h-2zM255 501h1v1h-1zM254 502h2v1h-2zM254 505h2v1h-2zM255 506h1v1h-1zM254 508h2v2h-2zM259 498h2v2h-2zM259 501h2v2h-2zM259 505h2v1h-2zM259 506h1v1h-1zM259 508h2v2h-2zM262 498h2v2h-2zM263 501h1v1h-1zM262 502h2v1h-2zM262 505h2v1h-2zM263 506h1v1h-1zM262 508h2v2h-2zM267 498h2v2h-2zM267 501h2v2h-2zM267 505h2v1h-2zM267 506h1v1h-1zM267 508h2v2h-2zM270 498h2v2h-2zM271 501h1v1h-1zM270 502h2v1h-2zM270 505h2v1h-2zM271 506h1v1h-1zM270 508h2v2h-2zM275 498h2v2h-2zM275 501h2v2h-2zM275 505h2v1h-2zM275 506h1v1h-1zM275 508h2v2h-2zM278 498h2v2h-2zM279 501h1v1h-1zM278 502h2v1h-2zM278 505h2v1h-2zM279 506h1v1h-1zM278 508h2v2h-2zM283 498h2v2h-2zM283 501h2v2h-2zM283 505h2v1h-2zM283 506h1v1h-1zM283 508h2v2h-2zM286 498h2v2h-2zM287 501h1v1h-1zM286 502h2v1h-2zM286 505h2v1h-2zM287 506h1v1h-1zM286 508h2v2h-2zM291 498h2v2h-2zM291 501h2v2h-2zM291 505h2v1h-2zM291 506h1v1h-1zM291 508h2v2h-2zM294 498h2v2h-2zM295 501h1v1h-1zM294 502h2v1h-2zM294 505h2v1h-2zM295 506h1v1h-1zM294 508h2v2h-2zM299 498h2v2h-2zM299 501h2v2h-2zM299 505h2v1h-2zM299 506h1v1h-1zM299 508h2v2h-2zM302 498h2v2h-2zM303 501h1v1h-1zM302 502h2v1h-2zM302 505h2v1h-2zM303 506h1v1h-1zM302 508h2v2h-2zM307 498h2v2h-2zM307 501h2v2h-2zM307 505h2v1h-2zM307 506h1v1h-1zM307 508h2v2h-2zM310 498h2v2h-2zM311 501h1v1h-1zM310 502h2v1h-2zM310 505h2v1h-2zM311 506h1v1h-1zM310 508h2v2h-2zM315 498h2v2h-2zM315 501h2v2h-2zM315 505h2v1h-2zM315 506h1v1h-1zM315 508h2v2h-2zM318 498h2v2h-2zM319 501h1v1h-1zM318 502h2v1h-2zM318 505h2v1h-2zM319 506h1v1h-1zM318 508h2v2h-2zM323 498h2v2h-2zM323 501h2v2h-2zM323 505h2v1h-2zM323 506h1v1h-1zM323 508h2v2h-2zM326 498h2v2h-2zM327 501h1v1h-1zM326 502h2v1h-2zM326 505h2v1h-2zM327 506h1v1h-1zM326 508h2v2h-2zM331 498h2v2h-2zM331 501h2v2h-2zM331 505h2v1h-2zM331 506h1v1h-1zM331 508h2v2h-2zM334 498h2v2h-2zM335 501h1v1h-1zM334 502h2v1h-2zM334 505h2v1h-2zM335 506h1v1h-1zM334 508h2v2h-2zM339 498h2v2h-2zM339 501h2v2h-2zM339 505h2v1h-2zM339 506h1v1h-1zM339 508h2v2h-2zM342 498h2v2h-2zM343 501h1v1h-1zM342 502h2v1h-2zM342 505h2v1h-2zM343 506h1v1h-1zM342 508h2v2h-2zM347 498h2v2h-2zM347 501h2v2h-2zM347 505h2v1h-2zM347 506h1v1h-1zM347 508h2v2h-2zM350 498h2v2h-2zM351 501h1v1h-1zM350 502h2v1h-2zM350 505h2v1h-2zM351 506h1v1h-1zM350 508h2v2h-2zM355 498h2v2h-2zM355 501h2v2h-2zM355 505h2v1h-2zM355 506h1v1h-1zM355 508h2v2h-2zM358 498h2v2h-2zM359 501h1v1h-1zM358 502h2v1h-2zM358 505h2v1h-2zM359 506h1v1h-1zM358 508h2v2h-2zM363 498h2v2h-2zM363 501h2v2h-2zM363 505h2v1h-2zM363 506h1v1h-1zM363 508h2v2h-2zM366 498h2v2h-2zM367 501h1v1h-1zM366 502h2v1h-2zM366 505h2v1h-2zM367 506h1v1h-1zM366 508h2v2h-2zM371 498h2v2h-2zM371 501h2v2h-2zM371 505h2v1h-2zM371 506h1v1h-1zM371 508h2v2h-2zM374 498h2v2h-2zM375 501h1v1h-1zM374 502h2v1h-2zM374 505h2v1h-2zM375 506h1v1h-1zM374 508h2v2h-2z"/>
<path fill="#ffdd78" d="M35 514h2v2h-2zM35 517h2v2h-2zM35 521h2v1h-2zM35 522h1v1h-1zM35 524h2v2h-2zM38 514h2v2h-2zM39 517h1v1h-1zM38 518h2v1h-2zM38 521h2v1h-2zM39 522h1v1h-1zM38 524h2v2h-2zM43 514h2v2h-2zM43 517h2v2h-2zM43 521h2v1h-2zM43 522h1v1h-1zM43 524h2v2h-2zM46 514h2v2h-2zM47 517h1v1h-1zM46 518h2v1h-2zM46 521h2v1h-2zM47 522h1v1h-1zM46 524h2v2h-2zM51 514h2v2h-2zM51 517h2v2h-2zM51 521h2v1h-2zM51 522h1v1h-1zM51 524h2v2h-2zM54 514h2v2h-2zM55 517h1v1h-1zM54 518h2v1h-2zM54 521h2v1h-2zM55 522h1v1h-1zM54 524h2v2h-2zM59 514h2v2h-2zM59 517h2v2h-2zM59 521h2v1h-2zM59 522h1v1h-1zM59 524h2v2h-2zM62 514h2v2h-2zM63 517h1v1h-1zM62 518h2v1h-2zM62 521h2v1h-2zM63 522h1v1h-1zM62 524h2v2h-2zM67 514h2v2h-2zM67 517h2v2h-2zM67 521h2v1h-2zM67 522h1v1h-1zM67 524h2v2h-2zM70 514h2v2h-2zM71 517h1v1h-1zM70 518h2v1h-2zM70 521h2v1h-2zM71 522h1v1h-1zM70 524h2v2h-2zM75 514h2v2h-2zM75 517h2v2h-2zM75 521h2v1h-2zM75 522h1v1h-1zM75 524h2v2h-2zM78 514h2v2h-2zM79 517h1v1h-1zM78 518h2v1h-2zM78 521h2v1h-2zM79 522h1v1h-1zM78 524h2v2h-2zM83 514h2v2h-2zM83 517h2v2h-2zM83 521h2v1h-2zM83 522h1v1h-1zM83 524h2v2h-2zM86 514h2v2h-2zM87 517h1v1h-1zM86 518h2v1h-2zM86 521h2v1h-2zM87 522h1v1h-1zM86 524h2v2h-2zM91 514h2v2h-2zM91 517h2v2h-2zM91 521h2v1h-2zM91 522h1v1h-1zM91 524h2v2h-2zM94 514h2v2h-2zM95 517h1v1h-1zM94 518h2v1h-2zM94 521h2v1h-2zM95 522h1v1h-1zM94 524h2v2h-2zM99 514h2v2h-2zM99 517h2v2h-2zM99 521h2v1h-2zM99 522h1v1h-1zM99 524h2v2h-2zM102 514h2v2h-2zM103 517h1v1h-1zM102 518h2v1h-2zM102 521h2v1h-2zM103 522h1v1h-1zM102 524h2v2h-2zM107 514h2v2h-2zM107 517h2v2h-2zM107 521h2v1h-2zM107 522h1v1h-1zM107 524h2v2h-2zM110 514h2v2h-2zM111 517h1v1h-1zM110 518h2v1h-2zM110 521h2v1h-2zM111 522h1v1h-1zM110 524h2v2h-2zM115 514h2v2h-2zM115 517h2v2h-2zM115 521h2v1h-2zM115 522h1v1h-1zM115 524h2v2h-2zM118 514h2v2h-2zM119 517h1v1h-1zM118 518h2v1h-2zM118 521h2v1h-2zM119 522h1v1h-1zM118 524h2v2h-2zM123 514h2v2h-2zM123 517h2v2h-2zM123 521h2v1h-2zM123 522h1v1h-1zM123 524h2v2h-2zM126 514h2v2h-2zM127 517h1v1h-1zM126 518h2v1h-2zM126 521h2v1h-2zM127 522h1v1h-1zM126 524h2v2h-2zM131 514h2v2h-2zM131 517h2v2h-2zM131 521h2v1h-2zM131 522h1v1h-1zM131 524h2v2h-2zM134 514h2v2h-2zM135 517h1v1h-1zM134 518h2v1h-2zM134 521h2v1h-2zM135 522h1v1h-1zM134 524h2v2h-2zM139 514h2v2h-2zM139 517h2v2h-2zM139 521h2v1h-2zM139 522h1v1h-1zM139 524h2v2h-2zM142 514h2v2h-2zM143 517h1v1h-1zM142 518h2v1h-2zM142 521h2v1h-2zM143 522h1v1h-1zM142 524h2v2h-2zM147 514h2v2h-2zM147 517h2v2h-2zM147 521h2v1h-2zM147 522h1v1h-1zM147 524h2v2h-2zM150 514h2v2h-2zM151 517h1v1h-1zM150 518h2v1h-2zM150 521h2v1h-2zM151 522h1v1h-1zM150 524h2v2h-2zM155 514h2v2h-2zM155 517h2v2h-2zM155 521h2v1h-2zM155 522h1v1h-1zM155 524h2v2h-2zM158 514h2v2h-2zM159 517h1v1h-1zM158 518h2v1h-2zM158 521h2v1h-2zM159 522h1v1h-1zM158 524h2v2h-2zM163 514h2v2h-2zM163 517h2v2h-2zM163 521h2v1h-2zM163 522h1v1h-1zM163 524h2v2h-2zM166 514h2v2h-2zM167 517h1v1h-1zM166 518h2v1h-2zM166 521h2v1h-2zM167 522h1v1h-1zM166 524h2v2h-2zM171 514h2v2h-2zM171 517h2v2h-2zM171 521h2v1h-2zM171 522h1v1h-1zM171 524h2v2h-2zM174 514h2v2h-2zM175 517h1v1h-1zM174 518h2v1h-2zM174 521h2v1h-2zM175 522h1v1h-1zM174 524h2v2h-2zM179 514h2v2h-2zM179 517h2v2h-2zM179 521h2v1h-2zM179 522h1v1h-1zM179 524h2v2h-2zM182 514h2v2h-2zM183 517h1v1h-1zM182 518h2v1h-2zM182 521h2v1h-2zM183 522h1v1h-1zM182 524h2v2h-2zM187 514h2v2h-2zM187 517h2v2h-2zM187 521h2v1h-2zM187 522h1v1h-1zM187 524h2v2h-2zM190 514h2v2h-2zM191 517h1v1h-1zM190 518h2v1h-2zM190 521h2v1h-2zM191 522h1v1h-1zM190 524h2v2h-2zM195 514h2v2h-2zM195 517h2v2h-2zM195 521h2v1h-2zM195 522h1v1h-1zM195 524h2v2h-2zM198 514h2v2h-2zM199 517h1v1h-1zM198 518h2v1h-2zM198 521h2v1h-2zM199 522h1v1h-1zM198 524h2v2h-2zM203 514h2v2h-2zM203 517h2v2h-2zM203 521h2v1h-2zM203 522h1v1h-1zM203 524h2v2h-2zM206 514h2v2h-2zM207 517h1v1h-1zM206 518h2v1h-2zM206 521h2v1h-2zM207 522h1v1h-1zM206 524h2v2h-2zM211 514h2v2h-2zM211 517h2v2h-2zM211 521h2v1h-2zM211 522h1v1h-1zM211 524h2v2h-2zM214 514h2v2h-2zM215 517h1v1h-1zM214 518h2v1h-2zM214 521h2v1h-2zM215 522h1v1h-1zM214 524h2v2h-2zM219 514h2v2h-2zM219 517h2v2h-2zM219 521h2v1h-2zM219 522h1v1h-1zM219 524h2v2h-2zM222 514h2v2h-2zM223 517h1v1h-1zM222 518h2v1h-2zM222 521h2v1h-2zM223 522h1v1h-1zM222 524h2v2h-2zM227 514h2v2h-2zM227 517h2v2h-2zM227 521h2v1h-2zM227 522h1v1h-1zM227 524h2v2h-2zM230 514h2v2h-2zM231 517h1v1h-1zM230 518h2v1h-2zM230 521h2v1h-2zM231 522h1v1h-1zM230 524h2v2h-2zM235 514h2v2h-2zM235 517h2v2h-2zM235 521h2v1h-2zM235 522h1v1h-1zM235 524h2v2h-2zM238 514h2v2h-2zM239 517h1v1h-1zM238 518h2v1h-2zM238 521h2v1h-2zM239 522h1v1h-1zM238 524h2v2h-2zM243 514h2v2h-2zM243 517h2v2h-2zM243 521h2v1h-2zM243 522h1v1h-1zM243 524h2v2h-2zM246 514h2v2h-2zM247 517h1v1h-1zM246 518h2v1h-2zM246 521h2v1h-2zM247 522h1v1h-1zM246 524h2v2h-2zM251 514h2v2h-2zM251 517h2v2h-2zM251 521h2v1h-2zM251 522h1v1h-1zM251 524h2v2h-2zM254 514h2v2h-2zM255 517h1v1h-1zM254 518h2v1h-2zM254 521h2v1h-2zM255 522h1v1h-1zM254 524h2v2h-2zM259 514h2v2h-2zM259 517h2v2h-2zM259 521h2v1h-2zM259 522h1v1h-1zM259 524h2v2h-2zM262 514h2v2h-2zM263 517h1v1h-1zM262 518h2v1h-2zM262 521h2v1h-2zM263 522h1v1h-1zM262 524h2v2h-2zM267 514h2v2h-2zM267 517h2v2h-2zM267 521h2v1h-2zM267 522h1v1h-1zM267 524h2v2h-2zM270 514h2v2h-2zM271 517h1v1h-1zM270 518h2v1h-2zM270 521h2v1h-2zM271 522h1v1h-1zM270 524h2v2h-2zM275 514h2v2h-2zM275 517h2v2h-2zM275 521h2v1h-2zM275 522h1v1h-1zM275 524h2v2h-2zM278 514h2v2h-2zM279 517h1v1h-1zM278 518h2v1h-2zM278 521h2v1h-2zM279 522h1v1h-1zM278 524h2v2h-2zM283 514h2v2h-2zM283 517h2v2h-2zM283 521h2v1h-2zM283 522h1v1h-1zM283 524h2v2h-2zM286 514h2v2h-2zM287 517h1v1h-1zM286 518h2v1h-2zM286 521h2v1h-2zM287 522h1v1h-1zM286 524h2v2h-2zM291 514h2v2h-2zM291 517h2v2h-2zM291 521h2v1h-2zM291 522h1v1h-1zM291 524h2v2h-2zM294 514h2v2h-2zM295 517h1v1h-1zM294 518h2v1h-2zM294 521h2v1h-2zM295 522h1v1h-1zM294 524h2v2h-2zM299 514h2v2h-2zM299 517h2v2h-2zM299 521h2v1h-2zM299 522h1v1h-1zM299 524h2v2h-2zM302 514h2v2h-2zM303 517h1v1h-1zM302 518h2v1h-2zM302 521h2v1h-2zM303 522h1v1h-1zM302 524h2v2h-2zM307 514h2v2h-2zM307 517h2v2h-2zM307 521h2v1h-2zM307 522h1v1h-1zM307 524h2v2h-2zM310 514h2v2h-2zM311 517h1v1h-1zM310 518h2v1h-2zM310 521h2v1h-2zM311 522h1v1h-1zM310 524h2v2h-2zM315 514h2v2h-2zM315 517h2v2h-2zM315 521h2v1h-2zM315 522h1v1h-1zM315 524h2v2h-2zM318 514h2v2h-2zM319 517h1v1h-1zM318 518h2v1h-2zM318 521h2v1h-2zM319 522h1v1h-1zM318 524h2v2h-2zM323 514h2v2h-2zM323 517h2v2h-2zM323 521h2v1h-2zM323 522h1v1h-1zM323 524h2v2h-2zM326 514h2v2h-2zM327 517h1v1h-1zM326 518h2v1h-2zM326 521h2v1h-2zM327 522h1v1h-1zM326 524h2v2h-2zM331 514h2v2h-2zM331 517h2v2h-2zM331 521h2v1h-2zM331 522h1v1h-1zM331 524h2v2h-2zM334 514h2v2h-2zM335 517h1v1h-1zM334 518h2v1h-2zM334 521h2v1h-2zM335 522h1v1h-1zM334 524h2v2h-2zM339 514h2v2h-2zM339 517h2v2h-2zM339 521h2v1h-2zM339 522h1v1h-1zM339 524h2v2h-2zM342 514h2v2h-2zM343 517h1v1h-1zM342 518h2v1h-2zM342 521h2v1h-2zM343 522h1v1h-1zM342 524h2v2h-2zM347 514h2v2h-2zM347 517h2v2h-2zM347 521h2v1h-2zM347 522h1v1h-1zM347 524h2v2h-2zM350 514h2v2h-2zM351 517h1v1h-1zM350 518h2v1h-2zM350 521h2v1h-2zM351 522h1v1h-1zM350 524h2v2h-2zM355 514h2v2h-2zM355 517h2v2h-2zM355 521h2v1h-2zM355 522h1v1h-1zM355 524h2v2h-2zM358 514h2v2h-2zM359 517h1v1h-1zM358 518h2v1h-2zM358 521h2v1h-2zM359 522h1v1h-1zM358 524h2v2h-2zM363 514h2v2h-2zM363 517h2v2h-2zM363 521h2v1h-2zM363 522h1v1h-1zM363 524h2v2h-2zM366 514h2v2h-2zM367 517h1v1h-1zM366 518h2v1h-2zM366 521h2v1h-2zM367 522h1v1h-1zM366 524h2v2h-2zM371 514h2v2h-2zM371 517h2v2h-2zM371 521h2v1h-2zM371 522h1v1h-1zM371 524h2v2h-2zM374 514h2v2h-2zM375 517h1v1h-1zM374 518h2v1h-2zM374 521h2v1h-2zM375 522h1v1h-1zM374 524h2v2h-2z"/>
<path fill="#ad8f42" d="M35 530h2v2h-2zM35 533h2v2h-2zM35 537h2v1h-2zM35 538h1v1h-1zM35 540h2v2h-2zM38 530h2v2h-2zM39 533h1v1h-1zM38 534h2v1h-2zM38 537h2v1h-2zM39 538h1v1h-1zM38 540h2v2h-2zM43 530h2v2h-2zM43 533h2v2h-2zM43 537h2v1h-2zM43 538h1v1h-1zM43 540h2v2h-2zM46 530h2v2h-2zM47 533h1v1h-1zM46 534h2v1h-2zM46 537h2v1h-2zM47 538h1v1h-1zM46 540h2v2h-2zM51 530h2v2h-2zM51 533h2v2h-2zM51 537h2v1h-2zM51 538h1v1h-1zM51 540h2v2h-2zM54 530h2v2h-2zM55 533h1v1h-1zM54 534h2v1h-2zM54 537h2v1h-2zM55 538h1v1h-1zM54 540h2v2h-2zM59 530h2v2h-2zM59 533h2v2h-2zM59 537h2v1h-2zM59 538h1v1h-1zM59 540h2v2h-2zM62 530h2v2h-2zM63 533h1v1h-1zM62 534h2v1h-2zM62 537h2v1h-2zM63 538h1v1h-1zM62 540h2v2h-2zM67 530h2v2h-2zM67 533h2v2h-2zM67 537h2v1h-2zM67 538h1v1h-1zM67 540h2v2h-2zM70 530h2v2h-2zM71 533h1v1h-1zM70 534h2v1h-2zM70 537h2v1h-2zM71 538h1v1h-1zM70 540h2v2h-2zM75 530h2v2h-2zM75 533h2v2h-2zM75 537h2v1h-2zM75 538h1v1h-1zM75 540h2v2h-2zM78 530h2v2h-2zM79 533h1v1h-1zM78 534h2v1h-2zM78 537h2v1h-2zM79 538h1v1h-1zM78 540h2v2h-2zM83 530h2v2h-2zM83 533h2v2h-2zM83 537h2v1h-2zM83 538h1v1h-1zM83 540h2v2h-2zM86 530h2v2h-2zM87 533h1v1h-1zM86 534h2v1h-2zM86 537h2v1h-2zM87 538h1v1h-1zM86 540h2v2h-2zM91 530h2v2h-2zM91 533h2v2h-2zM91 537h2v1h-2zM91 538h1v1h-1zM91 540h2v2h-2zM94 530h2v2h-2zM95 533h1v1h-1zM94 534h2v1h-2zM94 537h2v1h-2zM95 538h1v1h-1zM94 540h2v2h-2zM99 530h2v2h-2zM99 533h2v2h-2zM99 537h2v1h-2zM99 538h1v1h-1zM99 540h2v2h-2zM102 530h2v2h-2zM103 533h1v1h-1zM102 534h2v1h-2zM102 537h2v1h-2zM103 538h1v1h-1zM102 540h2v2h-2zM107 530h2v2h-2zM107 533h2v2h-2zM107 537h2v1h-2zM107 538h1v1h-1zM107 540h2v2h-2zM110 530h2v2h-2zM111 533h1v1h-1zM110 534h2v1h-2zM110 537h2v1h-2zM111 538h1v1h-1zM110 540h2v2h-2zM115 530h2v2h-2zM115 533h2v2h-2zM115 537h2v1h-2zM115 538h1v1h-1zM115 540h2v2h-2zM118 530h2v2h-2zM119 533h1v1h-1zM118 534h2v1h-2zM118 537h2v1h-2zM119 538h1v1h-1zM118 540h2v2h-2zM123 530h2v2h-2zM123 533h2v2h-2zM123 537h2v1h-2zM123 538h1v1h-1zM123 540h2v2h-2zM126 530h2v2h-2zM127 533h1v1h-1zM126 534h2v1h-2zM126 537h2v1h-2zM127 538h1v1h-1zM126 540h2v2h-2zM131 530h2v2h-2zM131 533h2v2h-2zM131 537h2v1h-2zM131 538h1v1h-1zM131 540h2v2h-2zM134 530h2v2h-2zM135 533h1v1h-1zM134 534h2v1h-2zM134 537h2v1h-2zM135 538h1v1h-1zM134 540h2v2h-2zM139 530h2v2h-2zM139 533h2v2h-2zM139 537h2v1h-2zM139 538h1v1h-1zM139 540h2v2h-2zM142 530h2v2h-2zM143 533h1v1h-1zM142 534h2v1h-2zM142 537h2v1h-2zM143 538h1v1h-1zM142 540h2v2h-2zM147 530h2v2h-2zM147 533h2v2h-2zM147 537h2v1h-2zM147 538h1v1h-1zM147 540h2v2h-2zM150 530h2v2h-2zM151 533h1v1h-1zM150 534h2v1h-2zM150 537h2v1h-2zM151 538h1v1h-1zM150 540h2v2h-2zM155 530h2v2h-2zM155 533h2v2h-2zM155 537h2v1h-2zM155 538h1v1h-1zM155 540h2v2h-2zM158 530h2v2h-2zM159 533h1v1h-1zM158 534h2v1h-2zM158 537h2v1h-2zM159 538h1v1h-1zM158 540h2v2h-2zM163 530h2v2h-2zM163 533h2v2h-2zM163 537h2v1h-2zM163 538h1v1h-1zM163 540h2v2h-2zM166 530h2v2h-2zM167 533h1v1h-1zM166 534h2v1h-2zM166 537h2v1h-2zM167 538h1v1h-1zM166 540h2v2h-2zM171 530h2v2h-2zM171 533h2v2h-2zM171 537h2v1h-2zM171 538h1v1h-1zM171 540h2v2h-2zM174 530h2v2h-2zM175 533h1v1h-1zM174 534h2v1h-2zM174 537h2v1h-2zM175 538h1v1h-1zM174 540h2v2h-2zM179 530h2v2h-2zM179 533h2v2h-2zM179 537h2v1h-2zM179 538h1v1h-1zM179 540h2v2h-2zM182 530h2v2h-2zM183 533h1v1h-1zM182 534h2v1h-2zM182 537h2v1h-2zM183 538h1v1h-1zM182 540h2v2h-2zM187 530h2v2h-2zM187 533h2v2h-2zM187 537h2v1h-2zM187 538h1v1h-1zM187 540h2v2h-2zM190 530h2v2h-2zM191 533h1v1h-1zM190 534h2v1h-2zM190 537h2v1h-2zM191 538h1v1h-1zM190 540h2v2h-2zM195 530h2v2h-2zM195 533h2v2h-2zM195 537h2v1h-2zM195 538h1v1h-1zM195 540h2v2h-2zM198 530h2v2h-2zM199 533h1v1h-1zM198 534h2v1h-2zM198 537h2v1h-2zM199 538h1v1h-1zM198 540h2v2h-2zM203 530h2v2h-2zM203 533h2v2h-2zM203 537h2v1h-2zM203 538h1v1h-1zM203 540h2v2h-2zM206 530h2v2h-2zM207 533h1v1h-1zM206 534h2v1h-2zM206 537h2v1h-2zM207 538h1v1h-1zM206 540h2v2h-2zM211 530h2v2h-2zM211 533h2v2h-2zM211 537h2v1h-2zM211 538h1v1h-1zM211 540h2v2h-2zM214 530h2v2h-2zM215 533h1v1h-1zM214 534h2v1h-2zM214 537h2v1h-2zM215 538h1v1h-1zM214 540h2v2h-2zM219 530h2v2h-2zM219 533h2v2h-2zM219 537h2v1h-2zM219 538h1v1h-1zM219 540h2v2h-2zM222 530h2v2h-2zM223 533h1v1h-1zM222 534h2v1h-2zM222 537h2v1h-2zM223 538h1v1h-1zM222 540h2v2h-2zM227 530h2v2h-2zM227 533h2v2h-2zM227 537h2v1h-2zM227 538h1v1h-1zM227 540h2v2h-2zM230 530h2v2h-2zM231 533h1v1h-1zM230 534h2v1h-2zM230 537h2v1h-2zM231 538h1v1h-1zM230 540h2v2h-2zM235 530h2v2h-2zM235 533h2v2h-2zM235 537h2v1h-2zM235 538h1v1h-1zM235 540h2v2h-2zM238 530h2v2h-2zM239 533h1v1h-1zM238 534h2v1h-2zM238 537h2v1h-2zM239 538h1v1h-1zM238 540h2v2h-2zM243 530h2v2h-2zM243 533h2v2h-2zM243 537h2v1h-2zM243 538h1v1h-1zM243 540h2v2h-2zM246 530h2v2h-2zM247 533h1v1h-1zM246 534h2v1h-2zM246 537h2v1h-2zM247 538h1v1h-1zM246 540h2v2h-2zM251 530h2v2h-2zM251 533h2v2h-2zM251 537h2v1h-2zM251 538h1v1h-1zM251 540h2v2h-2zM254 530h2v2h-2zM255 533h1v1h-1zM254 534h2v1h-2zM254 537h2v1h-2zM255 538h1v1h-1zM254 540h2v2h-2zM259 530h2v2h-2zM259 533h2v2h-2zM259 537h2v1h-2zM259 538h1v1h-1zM259 540h2v2h-2zM262 530h2v2h-2zM263 533h1v1h-1zM262 534h2v1h-2zM262 537h2v1h-2zM263 538h1v1h-1zM262 540h2v2h-2zM267 530h2v2h-2zM267 533h2v2h-2zM267 537h2v1h-2zM267 538h1v1h-1zM267 540h2v2h-2zM270 530h2v2h-2zM271 533h1v1h-1zM270 534h2v1h-2zM270 537h2v1h-2zM271 538h1v1h-1zM270 540h2v2h-2zM275 530h2v2h-2zM275 533h2v2h-2zM275 537h2v1h-2zM275 538h1v1h-1zM275 540h2v2h-2zM278 530h2v2h-2zM279 533h1v1h-1zM278 534h2v1h-2zM278 537h2v1h-2zM279 538h1v1h-1zM278 540h2v2h-2zM283 530h2v2h-2zM283 533h2v2h-2zM283 537h2v1h-2zM283 538h1v1h-1zM283 540h2v2h-2zM286 530h2v2h-2zM287 533h1v1h-1zM286 534h2v1h-2zM286 537h2v1h-2zM287 538h1v1h-1zM286 540h2v2h-2zM291 530h2v2h-2zM291 533h2v2h-2zM291 537h2v1h-2zM291 538h1v1h-1zM291 540h2v2h-2zM294 530h2v2h-2zM295 533h1v1h-1zM294 534h2v1h-2zM294 537h2v1h-2zM295 538h1v1h-1zM294 540h2v2h-2zM299 530h2v2h-2zM299 533h2v2h-2zM299 537h2v1h-2zM299 538h1v1h-1zM299 540h2v2h-2zM302 530h2v2h-2zM303 533h1v1h-1zM302 534h2v1h-2zM302 537h2v1h-2zM303 538h1v1h-1zM302 540h2v2h-2zM307 530h2v2h-2zM307 533h2v2h-2zM307 537h2v1h-2zM307 538h1v1h-1zM307 540h2v2h-2zM310 530h2v2h-2zM311 533h1v1h-1zM310 534h2v1h-2zM310 537h2v1h-2zM311 538h1v1h-1zM310 540h2v2h-2zM315 530h2v2h-2zM315 533h2v2h-2zM315 537h2v1h-2zM315 538h1v1h-1zM315 540h2v2h-2zM318 530h2v2h-2zM319 533h1v1h-1zM318 534h2v1h-2zM318 537h2v1h-2zM319 538h1v1h-1zM318 540h2v2h-2zM323 530h2v2h-2zM323 533h2v2h-2zM323 537h2v1h-2zM323 538h1v1h-1zM323 540h2v2h-2zM326 530h2v2h-2zM327 533h1v1h-1zM326 534h2v1h-2zM326 537h2v1h-2zM327 538h1v1h-1zM326 540h2v2h-2zM331 530h2v2h-2zM331 533h2v2h-2zM331 537h2v1h-2zM331 538h1v1h-1zM331 540h2v2h-2zM334 530h2v2h-2zM335 533h1v1h-1zM334 534h2v1h-2zM334 537h2v1h-2zM335 538h1v1h-1zM334 540h2v2h-2zM339 530h2v2h-2zM339 533h2v2h-2zM339 537h2v1h-2zM339 538h1v1h-1zM339 540h2v2h-2zM342 530h2v2h-2zM343 533h1v1h-1zM342 534h2v1h-2zM342 537h2v1h-2zM343 538h1v1h-1zM342 540h2v2h-2zM347 530h2v2h-2zM347 533h2v2h-2zM347 537h2v1h-2zM347 538h1v1h-1zM347 540h2v2h-2zM350 530h2v2h-2zM351 533h1v1h-1zM350 534h2v1h-2zM350 537h2v1h-2zM351 538h1v1h-1zM350 540h2v2h-2zM355 530h2v2h-2zM355 533h2v2h-2zM355 537h2v1h-2zM355 538h1v1h-1zM355 540h2v2h-2zM358 530h2v2h-2zM359 533h1v1h-1zM358 534h2v1h-2zM358 537h2v1h-2zM359 538h1v1h-1zM358 540h2v2h-2zM363 530h2v2h-2zM363 533h2v2h-2zM363 537h2v1h-2zM363 538h1v1h-1zM363 540h2v2h-2zM366 530h2v2h-2zM367 533h1v1h-1zM366 534h2v1h-2zM366 537h2v1h-2zM367 538h1v1h-1zM366 540h2v2h-2zM371 530h2v2h-2zM371 533h2v2h-2zM371 537h2v1h-2zM371 538h1v1h-1zM371 540h2v2h-2zM374 530h2v2h-2zM375 533h1v1h-1zM374 534h2v1h-2zM374 537h2v1h-2zM375 538h1v1h-1zM374 540h2v2h-2z"/>
<path fill="#4dd0fa" d="M35 585h2v1h-2zM35 586h1v1h-1zM35 588h2v2h-2zM38 585h2v1h-2zM39 586h1v1h-1zM38 588h2v2h-2zM43 585h2v1h-2zM43 586h1v1h-1zM43 588h2v2h-2zM46 585h2v1h-2zM47 586h1v1h-1zM46 588h2v2h-2zM51 585h2v1h-2zM51 586h1v1h-1zM51 588h2v2h-2zM54 585h2v1h-2zM55 586h1v1h-1zM54 588h2v2h-2zM59 585h2v1h-2zM59 586h1v1h-1zM59 588h2v2h-2zM62 585h2v1h-2zM63 586h1v1h-1zM62 588h2v2h-2zM67 585h2v1h-2zM67 586h1v1h-1zM67 588h2v2h-2zM70 585h2v1h-2zM71 586h1v1h-1zM70 588h2v2h-2zM75 585h2v1h-2zM75 586h1v1h-1zM75 588h2v2h-2zM78 585h2v1h-2zM79 586h1v1h-1zM78 588h2v2h-2zM83 585h2v1h-2zM83 586h1v1h-1zM83 588h2v2h-2zM86 585h2v1h-2zM87 586h1v1h-1zM86 588h2v2h-2zM91 585h2v1h-2zM91 586h1v1h-1zM91 588h2v2h-2zM94 585h2v1h-2zM95 586h1v1h-1zM94 588h2v2h-2zM99 585h2v1h-2zM99 586h1v1h-1zM99 588h2v2h-2zM102 585h2v1h-2zM103 586h1v1h-1zM102 588h2v2h-2zM107 585h2v1h-2zM107 586h1v1h-1zM107 588h2v2h-2zM110 585h2v1h-2zM111 586h1v1h-1zM110 588h2v2h-2zM115 585h2v1h-2zM115 586h1v1h-1zM115 588h2v2h-2zM118 585h2v1h-2zM119 586h1v1h-1zM118 588h2v2h-2zM123 585h2v1h-2zM123 586h1v1h-1zM123 588h2v2h-2zM126 585h2v1h-2zM127 586h1v1h-1zM126 588h2v2h-2zM131 585h2v1h-2zM131 586h1v1h-1zM131 588h2v2h-2zM134 585h2v1h-2zM135 586h1v1h-1zM134 588h2v2h-2zM139 585h2v1h-2zM139 586h1v1h-1zM139 588h2v2h-2zM142 585h2v1h-2zM143 586h1v1h-1zM142 588h2v2h-2zM147 585h2v1h-2zM147 586h1v1h-1zM147 588h2v2h-2zM150 585h2v1h-2zM151 586h1v1h-1zM150 588h2v2h-2zM155 585h2v1h-2zM155 586h1v1h-1zM155 588h2v2h-2zM158 585h2v1h-2zM159 586h1v1h-1zM158 588h2v2h-2zM163 585h2v1h-2zM163 586h1v1h-1zM163 588h2v2h-2zM166 585h2v1h-2zM167 586h1v1h-1zM166 588h2v2h-2zM171 585h2v1h-2zM171 586h1v1h-1zM171 588h2v2h-2zM174 585h2v1h-2zM175 586h1v1h-1zM174 588h2v2h-2zM179 585h2v1h-2zM179 586h1v1h-1zM179 588h2v2h-2zM182 585h2v1h-2zM183 586h1v1h-1zM182 588h2v2h-2zM187 585h2v1h-2zM187 586h1v1h-1zM187 588h2v2h-2zM190 585h2v1h-2zM191 586h1v1h-1zM190 588h2v2h-2zM195 585h2v1h-2zM195 586h1v1h-1zM195 588h2v2h-2zM198 585h2v1h-2zM199 586h1v1h-1zM198 588h2v2h-2zM203 585h2v1h-2zM203 586h1v1h-1zM203 588h2v2h-2zM206 585h2v1h-2zM207 586h1v1h-1zM206 588h2v2h-2zM211 585h2v1h-2zM211 586h1v1h-1zM211 588h2v2h-2zM214 585h2v1h-2zM215 586h1v1h-1zM214 588h2v2h-2zM219 585h2v1h-2zM219 586h1v1h-1zM219 588h2v2h-2zM222 585h2v1h-2zM223 586h1v1h-1zM222 588h2v2h-2zM227 585h2v1h-2zM227 586h1v1h-1zM227 588h2v2h-2zM230 585h2v1h-2zM231 586h1v1h-1zM230 588h2v2h-2zM235 585h2v1h-2zM235 586h1v1h-1zM235 588h2v2h-2zM238 585h2v1h-2zM239 586h1v1h-1zM238 588h2v2h-2zM243 585h2v1h-2zM243 586h1v1h-1zM243 588h2v2h-2zM246 585h2v1h-2zM247 586h1v1h-1zM246 588h2v2h-2zM251 585h2v1h-2zM251 586h1v1h-1zM251 588h2v2h-2zM254 585h2v1h-2zM255 586h1v1h-1zM254 588h2v2h-2zM259 585h2v1h-2zM259 586h1v1h-1zM259 588h2v2h-2zM262 585h2v1h-2zM263 586h1v1h-1zM262 588h2v2h-2zM267 585h2v1h-2zM267 586h1v1h-1zM267 588h2v2h-2zM270 585h2v1h-2zM271 586h1v1h-1zM270 588h2v2h-2zM275 585h2v1h-2zM275 586h1v1h-1zM275 588h2v2h-2zM278 585h2v1h-2zM279 586h1v1h-1zM278 588h2v2h-2zM283 585h2v1h-2zM283 586h1v1h-1zM283 588h2v2h-2zM286 585h2v1h-2zM287 586h1v1h-1zM286 588h2v2h-2zM291 585h2v1h-2zM291 586h1v1h-1zM291 588h2v2h-2zM294 585h2v1h-2zM295 586h1v1h-1zM294 588h2v2h-2zM299 585h2v1h-2zM299 586h1v1h-1zM299 588h2v2h-2zM302 585h2v1h-2zM303 586h1v1h-1zM302 588h2v2h-2zM307 585h2v1h-2zM307 586h1v1h-1zM307 588h2v2h-2zM310 585h2v1h-2zM311 586h1v1h-1zM310 588h2v2h-2zM315 585h2v1h-2zM315 586h1v1h-1zM315 588h2v2h-2zM318 585h2v1h-2zM319 586h1v1h-1zM318 588h2v2h-2zM323 585h2v1h-2zM323 586h1v1h-1zM323 588h2v2h-2zM326 585h2v1h-2zM327 586h1v1h-1zM326 588h2v2h-2zM331 585h2v1h-2zM331 586h1v1h-1zM331 588h2v2h-2zM334 585h2v1h-2zM335 586h1v1h-1zM334 588h2v2h-2zM339 585h2v1h-2zM339 586h1v1h-1zM339 588h2v2h-2zM342 585h2v1h-2zM343 586h1v1h-1zM342 588h2v2h-2zM347 585h2v1h-2zM347 586h1v1h-1zM347 588h2v2h-2zM350 585h2v1h-2zM351 586h1v1h-1zM350 588h2v2h-2zM355 585h2v1h-2zM355 586h1v1h-1zM355 588h2v2h-2zM358 585h2v1h-2zM359 586h1v1h-1zM358 588h2v2h-2zM363 585h2v1h-2zM363 586h1v1h-1zM363 588h2v2h-2zM366 585h2v1h-2zM367 586h1v1h-1zM366 588h2v2h-2zM371 585h2v1h-2zM371 586h1v1h-1zM371 588h2v2h-2zM374 585h2v1h-2zM375 586h1v1h-1zM374 588h2v2h-2z"/>
<path fill="#74e6fc" d="M35 594h2v2h-2zM35 597h2v2h-2zM35 601h2v1h-2zM35 602h1v1h-1zM35 604h2v2h-2zM38 594h2v2h-2zM39 597h1v1h-1zM38 598h2v1h-2zM38 601h2v1h-2zM39 602h1v1h-1zM38 604h2v2h-2zM43 594h2v2h-2zM43 597h2v2h-2zM43 601h2v1h-2zM43 602h1v1h-1zM43 604h2v2h-2zM46 594h2v2h-2zM47 597h1v1h-1zM46 598h2v1h-2zM46 601h2v1h-2zM47 602h1v1h-1zM46 604h2v2h-2zM51 594h2v2h-2zM51 597h2v2h-2zM51 601h2v1h-2zM51 602h1v1h-1zM51 604h2v2h-2zM54 594h2v2h-2zM55 597h1v1h-1zM54 598h2v1h-2zM54 601h2v1h-2zM55 602h1v1h-1zM54 604h2v2h-2zM59 594h2v2h-2zM59 597h2v2h-2zM59 601h2v1h-2zM59 602h1v1h-1zM59 604h2v2h-2zM62 594h2v2h-2zM63 597h1v1h-1zM62 598h2v1h-2zM62 601h2v1h-2zM63 602h1v1h-1zM62 604h2v2h-2zM67 594h2v2h-2zM67 597h2v2h-2zM67 601h2v1h-2zM67 602h1v1h-1zM67 604h2v2h-2zM70 594h2v2h-2zM71 597h1v1h-1zM70 598h2v1h-2zM70 601h2v1h-2zM71 602h1v1h-1zM70 604h2v2h-2zM75 594h2v2h-2zM75 597h2v2h-2zM75 601h2v1h-2zM75 602h1v1h-1zM75 604h2v2h-2zM78 594h2v2h-2zM79 597h1v1h-1zM78 598h2v1h-2zM78 601h2v1h-2zM79 602h1v1h-1zM78 604h2v2h-2zM83 594h2v2h-2zM83 597h2v2h-2zM83 601h2v1h-2zM83 602h1v1h-1zM83 604h2v2h-2zM86 594h2v2h-2zM87 597h1v1h-1zM86 598h2v1h-2zM86 601h2v1h-2zM87 602h1v1h-1zM86 604h2v2h-2zM91 594h2v2h-2zM91 597h2v2h-2zM91 601h2v1h-2zM91 602h1v1h-1zM91 604h2v2h-2zM94 594h2v2h-2zM95 597h1v1h-1zM94 598h2v1h-2zM94 601h2v1h-2zM95 602h1v1h-1zM94 604h2v2h-2zM99 594h2v2h-2zM99 597h2v2h-2zM99 601h2v1h-2zM99 602h1v1h-1zM99 604h2v2h-2zM102 594h2v2h-2zM103 597h1v1h-1zM102 598h2v1h-2zM102 601h2v1h-2zM103 602h1v1h-1zM102 604h2v2h-2zM107 594h2v2h-2zM107 597h2v2h-2zM107 601h2v1h-2zM107 602h1v1h-1zM107 604h2v2h-2zM110 594h2v2h-2zM111 597h1v1h-1zM110 598h2v1h-2zM110 601h2v1h-2zM111 602h1v1h-1zM110 604h2v2h-2zM115 594h2v2h-2zM115 597h2v2h-2zM115 601h2v1h-2zM115 602h1v1h-1zM115 604h2v2h-2zM118 594h2v2h-2zM119 597h1v1h-1zM118 598h2v1h-2zM118 601h2v1h-2zM119 602h1v1h-1zM118 604h2v2h-2zM123 594h2v2h-2zM123 597h2v2h-2zM123 601h2v1h-2zM123 602h1v1h-1zM123 604h2v2h-2zM126 594h2v2h-2zM127 597h1v1h-1zM126 598h2v1h-2zM126 601h2v1h-2zM127 602h1v1h-1zM126 604h2v2h-2zM131 594h2v2h-2zM131 597h2v2h-2zM131 601h2v1h-2zM131 602h1v1h-1zM131 604h2v2h-2zM134 594h2v2h-2zM135 597h1v1h-1zM134 598h2v1h-2zM134 601h2v1h-2zM135 602h1v1h-1zM134 604h2v2h-2zM139 594h2v2h-2zM139 597h2v2h-2zM139 601h2v1h-2zM139 602h1v1h-1zM139 604h2v2h-2zM142 594h2v2h-2zM143 597h1v1h-1zM142 598h2v1h-2zM142 601h2v1h-2zM143 602h1v1h-1zM142 604h2v2h-2zM147 594h2v2h-2zM147 597h2v2h-2zM147 601h2v1h-2zM147 602h1v1h-1zM147 604h2v2h-2zM150 594h2v2h-2zM151 597h1v1h-1zM150 598h2v1h-2zM150 601h2v1h-2zM151 602h1v1h-1zM150 604h2v2h-2zM155 594h2v2h-2zM155 597h2v2h-2zM155 601h2v1h-2zM155 602h1v1h-1zM155 604h2v2h-2zM158 594h2v2h-2zM159 597h1v1h-1zM158 598h2v1h-2zM158 601h2v1h-2zM159 602h1v1h-1zM158 604h2v2h-2zM163 594h2v2h-2zM163 597h2v2h-2zM163 601h2v1h-2zM163 602h1v1h-1zM163 604h2v2h-2zM166 594h2v2h-2zM167 597h1v1h-1zM166 598h2v1h-2zM166 601h2v1h-2zM167 602h1v1h-1zM166 604h2v2h-2zM171 594h2v2h-2zM171 597h2v2h-2zM171 601h2v1h-2zM171 602h1v1h-1zM171 604h2v2h-2zM174 594h2v2h-2zM175 597h1v1h-1zM174 598h2v1h-2zM174 601h2v1h-2zM175 602h1v1h-1zM174 604h2v2h-2zM179 594h2v2h-2zM179 597h2v2h-2zM179 601h2v1h-2zM179 602h1v1h-1zM179 604h2v2h-2zM182 594h2v2h-2zM183 597h1v1h-1zM182 598h2v1h-2zM182 601h2v1h-2zM183 602h1v1h-1zM182 604h2v2h-2zM187 594h2v2h-2zM187 597h2v2h-2zM187 601h2v1h-2zM187 602h1v1h-1zM187 604h2v2h-2zM190 594h2v2h-2zM191 597h1v1h-1zM190 598h2v1h-2zM190 601h2v1h-2zM191 602h1v1h-1zM190 604h2v2h-2zM195 594h2v2h-2zM195 597h2v2h-2zM195 601h2v1h-2zM195 602h1v1h-1zM195 604h2v2h-2zM198 594h2v2h-2zM199 597h1v1h-1zM198 598h2v1h-2zM198 601h2v1h-2zM199 602h1v1h-1zM198 604h2v2h-2zM203 594h2v2h-2zM203 597h2v2h-2zM203 601h2v1h-2zM203 602h1v1h-1zM203 604h2v2h-2zM206 594h2v2h-2zM207 597h1v1h-1zM206 598h2v1h-2zM206 601h2v1h-2zM207 602h1v1h-1zM206 604h2v2h-2zM211 594h2v2h-2zM211 597h2v2h-2zM211 601h2v1h-2zM211 602h1v1h-1zM211 604h2v2h-2zM214 594h2v2h-2zM215 597h1v1h-1zM214 598h2v1h-2zM214 601h2v1h-2zM215 602h1v1h-1zM214 604h2v2h-2zM219 594h2v2h-2zM219 597h2v2h-2zM219 601h2v1h-2zM219 602h1v1h-1zM219 604h2v2h-2zM222 594h2v2h-2zM223 597h1v1h-1zM222 598h2v1h-2zM222 601h2v1h-2zM223 602h1v1h-1zM222 604h2v2h-2zM227 594h2v2h-2zM227 597h2v2h-2zM227 601h2v1h-2zM227 602h1v1h-1zM227 604h2v2h-2zM230 594h2v2h-2zM231 597h1v1h-1zM230 598h2v1h-2zM230 601h2v1h-2zM231 602h1v1h-1zM230 604h2v2h-2zM235 594h2v2h-2zM235 597h2v2h-2zM235 601h2v1h-2zM235 602h1v1h-1zM235 604h2v2h-2zM238 594h2v2h-2zM239 597h1v1h-1zM238 598h2v1h-2zM238 601h2v1h-2zM239 602h1v1h-1zM238 604h2v2h-2zM243 594h2v2h-2zM243 597h2v2h-2zM243 601h2v1h-2zM243 602h1v1h-1zM243 604h2v2h-2zM246 594h2v2h-2zM247 597h1v1h-1zM246 598h2v1h-2zM246 601h2v1h-2zM247 602h1v1h-1zM246 604h2v2h-2zM251 594h2v2h-2zM251 597h2v2h-2zM251 601h2v1h-2zM251 602h1v1h-1zM251 604h2v2h-2zM254 594h2v2h-2zM255 597h1v1h-1zM254 598h2v1h-2zM254 601h2v1h-2zM255 602h1v1h-1zM254 604h2v2h-2zM259 594h2v2h-2zM259 597h2v2h-2zM259 601h2v1h-2zM259 602h1v1h-1zM259 604h2v2h-2zM262 594h2v2h-2zM263 597h1v1h-1zM262 598h2v1h-2zM262 601h2v1h-2zM263 602h1v1h-1zM262 604h2v2h-2zM267 594h2v2h-2zM267 597h2v2h-2zM267 601h2v1h-2zM267 602h1v1h-1zM267 604h2v2h-2zM270 594h2v2h-2zM271 597h1v1h-1zM270 598h2v1h-2zM270 601h2v1h-2zM271 602h1v1h-1zM270 604h2v2h-2zM275 594h2v2h-2zM275 597h2v2h-2zM275 601h2v1h-2zM275 602h1v1h-1zM275 604h2v2h-2zM278 594h2v2h-2zM279 597h1v1h-1zM278 598h2v1h-2zM278 601h2v1h-2zM279 602h1v1h-1zM278 604h2v2h-2zM283 594h2v2h-2zM283 597h2v2h-2zM283 601h2v1h-2zM283 602h1v1h-1zM283 604h2v2h-2zM286 594h2v2h-2zM287 597h1v1h-1zM286 598h2v1h-2zM286 601h2v1h-2zM287 602h1v1h-1zM286 604h2v2h-2zM291 594h2v2h-2zM291 597h2v2h-2zM291 601h2v1h-2zM291 602h1v1h-1zM291 604h2v2h-2zM294 594h2v2h-2zM295 597h1v1h-1zM294 598h2v1h-2zM294 601h2v1h-2zM295 602h1v1h-1zM294 604h2v2h-2zM299 594h2v2h-2zM299 597h2v2h-2zM299 601h2v1h-2zM299 602h1v1h-1zM299 604h2v2h-2zM302 594h2v2h-2zM303 597h1v1h-1zM302 598h2v1h-2zM302 601h2v1h-2zM303 602h1v1h-1zM302 604h2v2h-2zM307 594h2v2h-2zM307 597h2v2h-2zM307 601h2v1h-2zM307 602h1v1h-1zM307 604h2v2h-2zM310 594h2v2h-2zM311 597h1v1h-1zM310 598h2v1h-2zM310 601h2v1h-2zM311 602h1v1h-1zM310 604h2v2h-2zM315 594h2v2h-2zM315 597h2v2h-2zM315 601h2v1h-2zM315 602h1v1h-1zM315 604h2v2h-2zM318 594h2v2h-2zM319 597h1v1h-1zM318 598h2v1h-2zM318 601h2v1h-2zM319 602h1v1h-1zM318 604h2v2h-2zM323 594h2v2h-2zM323 597h2v2h-2zM323 601h2v1h-2zM323 602h1v1h-1zM323 604h2v2h-2zM326 594h2v2h-2zM327 597h1v1h-1zM326 598h2v1h-2zM326 601h2v1h-2zM327 602h1v1h-1zM326 604h2v2h-2zM331 594h2v2h-2zM331 597h2v2h-2zM331 601h2v1h-2zM331 602h1v1h-1zM331 604h2v2h-2zM334 594h2v2h-2zM335 597h1v1h-1zM334 598h2v1h-2zM334 601h2v1h-2zM335 602h1v1h-1zM334 604h2v2h-2zM339 594h2v2h-2zM339 597h2v2h-2zM339 601h2v1h-2zM339 602h1v1h-1zM339 604h2v2h-2zM342 594h2v2h-2zM343 597h1v1h-1zM342 598h2v1h-2zM342 601h2v1h-2zM343 602h1v1h-1zM342 604h2v2h-2zM347 594h2v2h-2zM347 597h2v2h-2zM347 601h2v1h-2zM347 602h1v1h-1zM347 604h2v2h-2zM350 594h2v2h-2zM351 597h1v1h-1zM350 598h2v1h-2zM350 601h2v1h-2zM351 602h1v1h-1zM350 604h2v2h-2zM355 594h2v2h-2zM355 597h2v2h-2zM355 601h2v1h-2zM355 602h1v1h-1zM355 604h2v2h-2zM358 594h2v2h-2zM359 597h1v1h-1zM358 598h2v1h-2zM358 601h2v1h-2zM359 602h1v1h-1zM358 604h2v2h-2zM363 594h2v2h-2zM363 597h2v2h-2zM363 601h2v1h-2zM363 602h1v1h-1zM363 604h2v2h-2zM366 594h2v2h-2zM367 597h1v1h-1zM366 598h2v1h-2zM366 601h2v1h-2zM367 602h1v1h-1zM366 604h2v2h-2zM371 594h2v2h-2zM371 597h2v2h-2zM371 601h2v1h-2zM371 602h1v1h-1zM371 604h2v2h-2zM374 594h2v2h-2zM375 597h1v1h-1zM374 598h2v1h-2zM374 601h2v1h-2zM375 602h1v1h-1zM374 604h2v2h-2z"/>
<path fill="#458eae" d="M35 610h2v2h-2zM35 613h2v2h-2zM35 617h2v1h-2zM35 618h1v1h-1zM35 620h2v2h-2zM38 610h2v2h-2zM39 613h1v1h-1zM38 614h2v1h-2zM38 617h2v1h-2zM39 618h1v1h-1zM38 620h2v2h-2zM43 610h2v2h-2zM43 613h2v2h-2zM43 617h2v1h-2zM43 618h1v1h-1zM43 620h2v2h-2zM46 610h2v2h-2zM47 613h1v1h-1zM46 614h2v1h-2zM46 617h2v1h-2zM47 618h1v1h-1zM46 620h2v2h-2zM51 610h2v2h-2zM51 613h2v2h-2zM51 617h2v1h-2zM51 618h1v1h-1zM51 620h2v2h-2zM54 610h2v2h-2zM55 613h1v1h-1zM54 614h2v1h-2zM54 617h2v1h-2zM55 618h1v1h-1zM54 620h2v2h-2zM59 610h2v2h-2zM59 613h2v2h-2zM59 617h2v1h-2zM59 618h1v1h-1zM59 620h2v2h-2zM62 610h2v2h-2zM63 613h1v1h-1zM62 614h2v1h-2zM62 617h2v1h-2zM63 618h1v1h-1zM62 620h2v2h-2zM67 610h2v2h-2zM67 613h2v2h-2zM67 617h2v1h-2zM67 618h1v1h-1zM67 620h2v2h-2zM70 610h2v2h-2zM71 613h1v1h-1zM70 614h2v1h-2zM70 617h2v1h-2zM71 618h1v1h-1zM70 620h2v2h-2zM75 610h2v2h-2zM75 613h2v2h-2zM75 617h2v1h-2zM75 618h1v1h-1zM75 620h2v2h-2zM78 610h2v2h-2zM79 613h1v1h-1zM78 614h2v1h-2zM78 617h2v1h-2zM79 618h1v1h-1zM78 620h2v2h-2zM83 610h2v2h-2zM83 613h2v2h-2zM83 617h2v1h-2zM83 618h1v1h-1zM83 620h2v2h-2zM86 610h2v2h-2zM87 613h1v1h-1zM86 614h2v1h-2zM86 617h2v1h-2zM87 618h1v1h-1zM86 620h2v2h-2zM91 610h2v2h-2zM91 613h2v2h-2zM91 617h2v1h-2zM91 618h1v1h-1zM91 620h2v2h-2zM94 610h2v2h-2zM95 613h1v1h-1zM94 614h2v1h-2zM94 617h2v1h-2zM95 618h1v1h-1zM94 620h2v2h-2zM99 610h2v2h-2zM99 613h2v2h-2zM99 617h2v1h-2zM99 618h1v1h-1zM99 620h2v2h-2zM102 610h2v2h-2zM103 613h1v1h-1zM102 614h2v1h-2zM102 617h2v1h-2zM103 618h1v1h-1zM102 620h2v2h-2zM107 610h2v2h-2zM107 613h2v2h-2zM107 617h2v1h-2zM107 618h1v1h-1zM107 620h2v2h-2zM110 610h2v2h-2zM111 613h1v1h-1zM110 614h2v1h-2zM110 617h2v1h-2zM111 618h1v1h-1zM110 620h2v2h-2zM115 610h2v2h-2zM115 613h2v2h-2zM115 617h2v1h-2zM115 618h1v1h-1zM115 620h2v2h-2zM118 610h2v2h-2zM119 613h1v1h-1zM118 614h2v1h-2zM118 617h2v1h-2zM119 618h1v1h-1zM118 620h2v2h-2zM123 610h2v2h-2zM123 613h2v2h-2zM123 617h2v1h-2zM123 618h1v1h-1zM123 620h2v2h-2zM126 610h2v2h-2zM127 613h1v1h-1zM126 614h2v1h-2zM126 617h2v1h-2zM127 618h1v1h-1zM126 620h2v2h-2zM131 610h2v2h-2zM131 613h2v2h-2zM131 617h2v1h-2zM131 618h1v1h-1zM131 620h2v2h-2zM134 610h2v2h-2zM135 613h1v1h-1zM134 614h2v1h-2zM134 617h2v1h-2zM135 618h1v1h-1zM134 620h2v2h-2zM139 610h2v2h-2zM139 613h2v2h-2zM139 617h2v1h-2zM139 618h1v1h-1zM139 620h2v2h-2zM142 610h2v2h-2zM143 613h1v1h-1zM142 614h2v1h-2zM142 617h2v1h-2zM143 618h1v1h-1zM142 620h2v2h-2zM147 610h2v2h-2zM147 613h2v2h-2zM147 617h2v1h-2zM147 618h1v1h-1zM147 620h2v2h-2zM150 610h2v2h-2zM151 613h1v1h-1zM150 614h2v1h-2zM150 617h2v1h-2zM151 618h1v1h-1zM150 620h2v2h-2zM155 610h2v2h-2zM155 613h2v2h-2zM155 617h2v1h-2zM155 618h1v1h-1zM155 620h2v2h-2zM158 610h2v2h-2zM159 613h1v1h-1zM158 614h2v1h-2zM158 617h2v1h-2zM159 618h1v1h-1zM158 620h2v2h-2zM163 610h2v2h-2zM163 613h2v2h-2zM163 617h2v1h-2zM163 618h1v1h-1zM163 620h2v2h-2zM166 610h2v2h-2zM167 613h1v1h-1zM166 614h2v1h-2zM166 617h2v1h-2zM167 618h1v1h-1zM166 620h2v2h-2zM171 610h2v2h-2zM171 613h2v2h-2zM171 617h2v1h-2zM171 618h1v1h-1zM171 620h2v2h-2zM174 610h2v2h-2zM175 613h1v1h-1zM174 614h2v1h-2zM174 617h2v1h-2zM175 618h1v1h-1zM174 620h2v2h-2zM179 610h2v2h-2zM179 613h2v2h-2zM179 617h2v1h-2zM179 618h1v1h-1zM179 620h2v2h-2zM182 610h2v2h-2zM183 613h1v1h-1zM182 614h2v1h-2zM182 617h2v1h-2zM183 618h1v1h-1zM182 620h2v2h-2zM187 610h2v2h-2zM187 613h2v2h-2zM187 617h2v1h-2zM187 618h1v1h-1zM187 620h2v2h-2zM190 610h2v2h-2zM191 613h1v1h-1zM190 614h2v1h-2zM190 617h2v1h-2zM191 618h1v1h-1zM190 620h2v2h-2zM195 610h2v2h-2zM195 613h2v2h-2zM195 617h2v1h-2zM195 618h1v1h-1zM195 620h2v2h-2zM198 610h2v2h-2zM199 613h1v1h-1zM198 614h2v1h-2zM198 617h2v1h-2zM199 618h1v1h-1zM198 620h2v2h-2zM203 610h2v2h-2zM203 613h2v2h-2zM203 617h2v1h-2zM203 618h1v1h-1zM203 620h2v2h-2zM206 610h2v2h-2zM207 613h1v1h-1zM206 614h2v1h-2zM206 617h2v1h-2zM207 618h1v1h-1zM206 620h2v2h-2zM211 610h2v2h-2zM211 613h2v2h-2zM211 617h2v1h-2zM211 618h1v1h-1zM211 620h2v2h-2zM214 610h2v2h-2zM215 613h1v1h-1zM214 614h2v1h-2zM214 617h2v1h-2zM215 618h1v1h-1zM214 620h2v2h-2zM219 610h2v2h-2zM219 613h2v2h-2zM219 617h2v1h-2zM219 618h1v1h-1zM219 620h2v2h-2zM222 610h2v2h-2zM223 613h1v1h-1zM222 614h2v1h-2zM222 617h2v1h-2zM223 618h1v1h-1zM222 620h2v2h-2zM227 610h2v2h-2zM227 613h2v2h-2zM227 617h2v1h-2zM227 618h1v1h-1zM227 620h2v2h-2zM230 610h2v2h-2zM231 613h1v1h-1zM230 614h2v1h-2zM230 617h2v1h-2zM231 618h1v1h-1zM230 620h2v2h-2zM235 610h2v2h-2zM235 613h2v2h-2zM235 617h2v1h-2zM235 618h1v1h-1zM235 620h2v2h-2zM238 610h2v2h-2zM239 613h1v1h-1zM238 614h2v1h-2zM238 617h2v1h-2zM239 618h1v1h-1zM238 620h2v2h-2zM243 610h2v2h-2zM243 613h2v2h-2zM243 617h2v1h-2zM243 618h1v1h-1zM243 620h2v2h-2zM246 610h2v2h-2zM247 613h1v1h-1zM246 614h2v1h-2zM246 617h2v1h-2zM247 618h1v1h-1zM246 620h2v2h-2zM251 610h2v2h-2zM251 613h2v2h-2zM251 617h2v1h-2zM251 618h1v1h-1zM251 620h2v2h-2zM254 610h2v2h-2zM255 613h1v1h-1zM254 614h2v1h-2zM254 617h2v1h-2zM255 618h1v1h-1zM254 620h2v2h-2zM259 610h2v2h-2zM259 613h2v2h-2zM259 617h2v1h-2zM259 618h1v1h-1zM259 620h2v2h-2zM262 610h2v2h-2zM263 613h1v1h-1zM262 614h2v1h-2zM262 617h2v1h-2zM263 618h1v1h-1zM262 620h2v2h-2zM267 610h2v2h-2zM267 613h2v2h-2zM267 617h2v1h-2zM267 618h1v1h-1zM267 620h2v2h-2zM270 610h2v2h-2zM271 613h1v1h-1zM270 614h2v1h-2zM270 617h2v1h-2zM271 618h1v1h-1zM270 620h2v2h-2zM275 610h2v2h-2zM275 613h2v2h-2zM275 617h2v1h-2zM275 618h1v1h-1zM275 620h2v2h-2zM278 610h2v2h-2zM279 613h1v1h-1zM278 614h2v1h-2zM278 617h2v1h-2zM279 618h1v1h-1zM278 620h2v2h-2zM283 610h2v2h-2zM283 613h2v2h-2zM283 617h2v1h-2zM283 618h1v1h-1zM283 620h2v2h-2zM286 610h2v2h-2zM287 613h1v1h-1zM286 614h2v1h-2zM286 617h2v1h-2zM287 618h1v1h-1zM286 620h2v2h-2zM291 610h2v2h-2zM291 613h2v2h-2zM291 617h2v1h-2zM291 618h1v1h-1zM291 620h2v2h-2zM294 610h2v2h-2zM295 613h1v1h-1zM294 614h2v1h-2zM294 617h2v1h-2zM295 618h1v1h-1zM294 620h2v2h-2zM299 610h2v2h-2zM299 613h2v2h-2zM299 617h2v1h-2zM299 618h1v1h-1zM299 620h2v2h-2zM302 610h2v2h-2zM303 613h1v1h-1zM302 614h2v1h-2zM302 617h2v1h-2zM303 618h1v1h-1zM302 620h2v2h-2zM307 610h2v2h-2zM307 613h2v2h-2zM307 617h2v1h-2zM307 618h1v1h-1zM307 620h2v2h-2zM310 610h2v2h-2zM311 613h1v1h-1zM310 614h2v1h-2zM310 617h2v1h-2zM311 618h1v1h-1zM310 620h2v2h-2zM315 610h2v2h-2zM315 613h2v2h-2zM315 617h2v1h-2zM315 618h1v1h-1zM315 620h2v2h-2zM318 610h2v2h-2zM319 613h1v1h-1zM318 614h2v1h-2zM318 617h2v1h-2zM319 618h1v1h-1zM318 620h2v2h-2zM323 610h2v2h-2zM323 613h2v2h-2zM323 617h2v1h-2zM323 618h1v1h-1zM323 620h2v2h-2zM326 610h2v2h-2zM327 613h1v1h-1zM326 614h2v1h-2zM326 617h2v1h-2zM327 618h1v1h-1zM326 620h2v2h-2zM331 610h2v2h-2zM331 613h2v2h-2zM331 617h2v1h-2zM331 618h1v1h-1zM331 620h2v2h-2zM334 610h2v2h-2zM335 613h1v1h-1zM334 614h2v1h-2zM334 617h2v1h-2zM335 618h1v1h-1zM334 620h2v2h-2zM339 610h2v2h-2zM339 613h2v2h-2zM339 617h2v1h-2zM339 618h1v1h-1zM339 620h2v2h-2zM342 610h2v2h-2zM343 613h1v1h-1zM342 614h2v1h-2zM342 617h2v1h-2zM343 618h1v1h-1zM342 620h2v2h-2zM347 610h2v2h-2zM347 613h2v2h-2zM347 617h2v1h-2zM347 618h1v1h-1zM347 620h2v2h-2zM350 610h2v2h-2zM351 613h1v1h-1zM350 614h2v1h-2zM350 617h2v1h-2zM351 618h1v1h-1zM350 620h2v2h-2zM355 610h2v2h-2zM355 613h2v2h-2zM355 617h2v1h-2zM355 618h1v1h-1zM355 620h2v2h-2zM358 610h2v2h-2zM359 613h1v1h-1zM358 614h2v1h-2zM358 617h2v1h-2zM359 618h1v1h-1zM358 620h2v2h-2zM363 610h2v2h-2zM363 613h2v2h-2zM363 617h2v1h-2zM363 618h1v1h-1zM363 620h2v2h-2zM366 610h2v2h-2zM367 613h1v1h-1zM366 614h2v1h-2zM366 617h2v1h-2zM367 618h1v1h-1zM366 620h2v2h-2zM371 610h2v2h-2zM371 613h2v2h-2zM371 617h2v1h-2zM371 618h1v1h-1zM371 620h2v2h-2zM374 610h2v2h-2zM375 613h1v1h-1zM374 614h2v1h-2zM374 617h2v1h-2zM375 618h1v1h-1zM374 620h2v2h-2z"/>
<path fill="#789c52" d="M35 697h2v1h-2zM35 698h1v1h-1zM35 700h2v2h-2zM38 697h2v1h-2zM39 698h1v1h-1zM38 700h2v2h-2zM43 697h2v1h-2zM43 698h1v1h-1zM43 700h2v2h-2zM46 697h2v1h-2zM47 698h1v1h-1zM46 700h2v2h-2zM51 697h2v1h-2zM51 698h1v1h-1zM51 700h2v2h-2zM54 697h2v1h-2zM55 698h1v1h-1zM54 700h2v2h-2zM59 697h2v1h-2zM59 698h1v1h-1zM59 700h2v2h-2zM62 697h2v1h-2zM63 698h1v1h-1zM62 700h2v2h-2zM67 697h2v1h-2zM67 698h1v1h-1zM67 700h2v2h-2zM70 697h2v1h-2zM71 698h1v1h-1zM70 700h2v2h-2zM75 697h2v1h-2zM75 698h1v1h-1zM75 700h2v2h-2zM78 697h2v1h-2zM79 698h1v1h-1zM78 700h2v2h-2zM83 697h2v1h-2zM83 698h1v1h-1zM83 700h2v2h-2zM86 697h2v1h-2zM87 698h1v1h-1zM86 700h2v2h-2zM91 697h2v1h-2zM91 698h1v1h-1zM91 700h2v2h-2zM94 697h2v1h-2zM95 698h1v1h-1zM94 700h2v2h-2zM99 697h2v1h-2zM99 698h1v1h-1zM99 700h2v2h-2zM102 697h2v1h-2zM103 698h1v1h-1zM102 700h2v2h-2zM107 697h2v1h-2zM107 698h1v1h-1zM107 700h2v2h-2zM110 697h2v1h-2zM111 698h1v1h-1zM110 700h2v2h-2zM115 697h2v1h-2zM115 698h1v1h-1zM115 700h2v2h-2zM118 697h2v1h-2zM119 698h1v1h-1zM118 700h2v2h-2zM123 697h2v1h-2zM123 698h1v1h-1zM123 700h2v2h-2zM126 697h2v1h-2zM127 698h1v1h-1zM126 700h2v2h-2zM131 697h2v1h-2zM131 698h1v1h-1zM131 700h2v2h-2zM134 697h2v1h-2zM135 698h1v1h-1zM134 700h2v2h-2zM139 697h2v1h-2zM139 698h1v1h-1zM139 700h2v2h-2zM142 697h2v1h-2zM143 698h1v1h-1zM142 700h2v2h-2zM147 697h2v1h-2zM147 698h1v1h-1zM147 700h2v2h-2zM150 697h2v1h-2zM151 698h1v1h-1zM150 700h2v2h-2zM155 697h2v1h-2zM155 698h1v1h-1zM155 700h2v2h-2zM158 697h2v1h-2zM159 698h1v1h-1zM158 700h2v2h-2zM163 697h2v1h-2zM163 698h1v1h-1zM163 700h2v2h-2zM166 697h2v1h-2zM167 698h1v1h-1zM166 700h2v2h-2zM171 697h2v1h-2zM171 698h1v1h-1zM171 700h2v2h-2zM174 697h2v1h-2zM175 698h1v1h-1zM174 700h2v2h-2zM179 697h2v1h-2zM179 698h1v1h-1zM179 700h2v2h-2zM182 697h2v1h-2zM183 698h1v1h-1zM182 700h2v2h-2zM187 697h2v1h-2zM187 698h1v1h-1zM187 700h2v2h-2zM190 697h2v1h-2zM191 698h1v1h-1zM190 700h2v2h-2zM195 697h2v1h-2zM195 698h1v1h-1zM195 700h2v2h-2zM198 697h2v1h-2zM199 698h1v1h-1zM198 700h2v2h-2zM203 697h2v1h-2zM203 698h1v1h-1zM203 700h2v2h-2zM206 697h2v1h-2zM207 698h1v1h-1zM206 700h2v2h-2zM211 697h2v1h-2zM211 698h1v1h-1zM211 700h2v2h-2zM214 697h2v1h-2zM215 698h1v1h-1zM214 700h2v2h-2zM219 697h2v1h-2zM219 698h1v1h-1zM219 700h2v2h-2zM222 697h2v1h-2zM223 698h1v1h-1zM222 700h2v2h-2zM227 697h2v1h-2zM227 698h1v1h-1zM227 700h2v2h-2zM230 697h2v1h-2zM231 698h1v1h-1zM230 700h2v2h-2zM235 697h2v1h-2zM235 698h1v1h-1zM235 700h2v2h-2zM238 697h2v1h-2zM239 698h1v1h-1zM238 700h2v2h-2zM243 697h2v1h-2zM243 698h1v1h-1zM243 700h2v2h-2zM246 697h2v1h-2zM247 698h1v1h-1zM246 700h2v2h-2zM251 697h2v1h-2zM251 698h1v1h-1zM251 700h2v2h-2zM254 697h2v1h-2zM255 698h1v1h-1zM254 700h2v2h-2zM259 697h2v1h-2zM259 698h1v1h-1zM259 700h2v2h-2zM262 697h2v1h-2zM263 698h1v1h-1zM262 700h2v2h-2zM267 697h2v1h-2zM267 698h1v1h-1zM267 700h2v2h-2zM270 697h2v1h-2zM271 698h1v1h-1zM270 700h2v2h-2zM275 697h2v1h-2zM275 698h1v1h-1zM275 700h2v2h-2zM278 697h2v1h-2zM279 698h1v1h-1zM278 700h2v2h-2zM283 697h2v1h-2zM283 698h1v1h-1zM283 700h2v2h-2zM286 697h2v1h-2zM287 698h1v1h-1zM286 700h2v2h-2zM291 697h2v1h-2zM291 698h1v1h-1zM291 700h2v2h-2zM294 697h2v1h-2zM295 698h1v1h-1zM294 700h2v2h-2zM299 697h2v1h-2zM299 698h1v1h-1zM299 700h2v2h-2zM302 697h2v1h-2zM303 698h1v1h-1zM302 700h2v2h-2zM307 697h2v1h-2zM307 698h1v1h-1zM307 700h2v2h-2zM310 697h2v1h-2zM311 698h1v1h-1zM310 700h2v2h-2zM315 697h2v1h-2zM315 698h1v1h-1zM315 700h2v2h-2zM318 697h2v1h-2zM319 698h1v1h-1zM318 700h2v2h-2zM323 697h2v1h-2zM323 698h1v1h-1zM323 700h2v2h-2zM326 697h2v1h-2zM327 698h1v1h-1zM326 700h2v2h-2zM331 697h2v1h-2zM331 698h1v1h-1zM331 700h2v2h-2zM334 697h2v1h-2zM335 698h1v1h-1zM334 700h2v2h-2zM339 697h2v1h-2zM339 698h1v1h-1zM339 700h2v2h-2zM342 697h2v1h-2zM343 698h1v1h-1zM342 700h2v2h-2zM347 697h2v1h-2zM347 698h1v1h-1zM347 700h2v2h-2zM350 697h2v1h-2zM351 698h1v1h-1zM350 700h2v2h-2zM355 697h2v1h-2zM355 698h1v1h-1zM355 700h2v2h-2zM358 697h2v1h-2zM359 698h1v1h-1zM358 700h2v2h-2zM363 697h2v1h-2zM363 698h1v1h-1zM363 700h2v2h-2zM366 697h2v1h-2zM367 698h1v1h-1zM366 700h2v2h-2zM371 697h2v1h-2zM371 698h1v1h-1zM371 700h2v2h-2zM374 697h2v1h-2zM375 698h1v1h-1zM374 700h2v2h-2z"/>
<path fill="#f0d060" d="M715 396h2v2h-2z"/>
<path fill="#632f2c" d="M473 403h8v8h-8zM473 467h8v8h-8z"/>
<path fill="#6d3431" d="M481 403h8v8h-8z"/>
<path fill="#783837" d="M489 403h8v8h-8z"/>
<path fill="#823d3d" d="M497 403h8v8h-8z"/>
<path fill="#8c4142" d="M505 403h8v8h-8z"/>
<path fill="#964548" d="M513 403h8v8h-8z"/>
<path fill="#a14a4e" d="M521 403h8v8h-8z"/>
<path fill="#ab4e53" d="M529 403h8v8h-8z"/>
<path fill="#b55359" d="M537 403h8v8h-8z"/>
<path fill="#bf575f" d="M545 403h8v8h-8z"/>
<path fill="#ca5b64" d="M553 403h8v8h-8z"/>
<path fill="#d4606a" d="M561 403h8v8h-8z"/>
<path fill="#db616d" d="M569 403h8v8h-8z"/>
<path fill="#de5f6d" d="M577 403h8v8h-8z"/>
<path fill="#e15d6c" d="M585 403h8v8h-8z"/>
<path fill="#e45a6c" d="M593 403h8v8h-8z"/>
<path fill="#e7586c" d="M601 403h8v8h-8z"/>
<path fill="#ea566b" d="M609 403h8v8h-8z"/>
<path fill="#ed546b" d="M617 403h8v8h-8z"/>
<path fill="#f0526b" d="M625 403h8v8h-8z"/>
<path fill="#f3506a" d="M633 403h8v8h-8z"/>
<path fill="#f64d6a" d="M641 403h8v8h-8z"/>
<path fill="#425b29" d="M473 419h8v8h-8zM473 483h8v8h-8z"/>
<path fill="#4c6731" d="M481 419h8v8h-8zM481 483h8v8h-8z"/>
<path fill="#567339" d="M489 419h8v8h-8zM489 483h8v8h-8z"/>
<path fill="#607f41" d="M497 483h8v8h-8z"/>
<path fill="#6a8b49" d="M505 483h8v8h-8z"/>
<path fill="#749751" d="M513 483h8v8h-8z"/>
<path fill="#7ea459" d="M521 483h8v8h-8z"/>
<path fill="#88b061" d="M529 483h8v8h-8z"/>
<path fill="#92bc69" d="M537 483h8v8h-8z"/>
<path fill="#9cc871" d="M545 483h8v8h-8z"/>
<path fill="#a6d479" d="M553 483h8v8h-8z"/>
<path fill="#b0e081" d="M561 483h8v8h-8z"/>
<path fill="#b7e785" d="M569 483h8v8h-8z"/>
<path fill="#bae985" d="M577 483h8v8h-8z"/>
<path fill="#bdeb85" d="M585 483h8v8h-8z"/>
<path fill="#c0ed85" d="M593 483h8v8h-8z"/>
<path fill="#c3ef85" d="M601 483h8v8h-8z"/>
<path fill="#c6f185" d="M609 483h8v8h-8z"/>
<path fill="#c9f385" d="M617 483h8v8h-8z"/>
<path fill="#ccf585" d="M625 483h8v8h-8z"/>
<path fill="#d0f785" d="M633 483h8v8h-8z"/>
<path fill="#d3f985" d="M641 483h8v8h-8z"/>
<path fill="#d6fb85" d="M649 483h8v8h-8z"/>
<path fill="#d9fd85" d="M657 483h8v8h-8z"/>
<path fill="#5c588d" d="M14 728h1v6h-1zM15 727h2v1h-2zM17 726h2v1h-2zM17 727h8v1h-8zM25 727h4v1h-4zM28 728h1v7h-1zM68 727h5v1h-5zM68 728h1v7h-1zM73 727h4v1h-4zM76 728h1v7h-1zM204 727h5v1h-5zM204 728h1v7h-1zM209 727h304v1h-304zM513 727h4v1h-4zM516 728h1v7h-1zM556 727h5v1h-5zM556 728h1v7h-1zM561 727h4v1h-4zM564 728h1v7h-1zM604 727h5v1h-5zM604 728h1v7h-1zM644 727h5v1h-5zM644 728h1v7h-1zM649 727h4v1h-4zM652 728h1v7h-1zM740 727h5v1h-5zM740 728h1v7h-1zM745 727h8v1h-8zM753 726h2v1h-2zM755 727h2v1h-2zM757 728h1v6h-1zM12 735h1v256h-1zM756 735h1v256h-1zM14 991h1v6h-1zM15 997h1v1h-1zM16 998h3v1h-3zM17 999h736v1h-736zM757 991h1v6h-1zM756 997h1v1h-1zM753 998h3v1h-3z"/>
<path fill="#3d349c" d="M198 860h2v2h-2zM203 860h2v2h-2zM203 857h2v1h-2zM203 858h1v1h-1zM203 853h2v2h-2zM203 850h2v2h-2zM206 860h2v2h-2zM206 857h2v1h-2zM207 858h1v1h-1zM207 853h1v1h-1zM206 854h2v1h-2zM206 850h2v2h-2zM211 860h2v2h-2zM211 857h2v1h-2zM211 858h1v1h-1zM211 853h2v2h-2zM211 850h2v2h-2zM214 860h2v2h-2zM214 857h2v1h-2zM215 858h1v1h-1zM215 853h1v1h-1zM214 854h2v1h-2zM214 850h2v2h-2zM219 860h2v2h-2zM219 857h2v1h-2zM219 858h1v1h-1zM219 853h2v2h-2zM219 850h2v2h-2zM222 860h2v2h-2zM222 857h2v1h-2zM223 858h1v1h-1zM223 853h1v1h-1zM222 854h2v1h-2zM222 850h2v2h-2zM227 860h2v2h-2zM227 857h2v1h-2zM227 858h1v1h-1zM227 853h2v2h-2zM227 850h2v2h-2zM230 860h2v2h-2zM230 857h2v1h-2zM231 858h1v1h-1zM231 853h1v1h-1zM230 854h2v1h-2zM230 850h2v2h-2zM235 860h2v2h-2zM235 857h2v1h-2zM235 858h1v1h-1zM235 853h2v2h-2zM235 850h2v2h-2zM238 860h2v2h-2zM238 857h2v1h-2zM239 858h1v1h-1zM239 853h1v1h-1zM238 854h2v1h-2zM238 850h2v2h-2zM243 860h2v2h-2zM243 857h2v1h-2zM243 858h1v1h-1zM243 853h2v2h-2zM243 850h2v2h-2zM246 860h2v2h-2zM246 857h2v1h-2zM247 858h1v1h-1zM247 853h1v1h-1zM246 854h2v1h-2zM246 850h2v2h-2zM251 860h2v2h-2zM251 857h2v1h-2zM251 858h1v1h-1zM251 853h2v2h-2zM251 850h2v2h-2zM254 860h2v2h-2zM254 857h2v1h-2zM255 858h1v1h-1zM255 853h1v1h-1zM254 854h2v1h-2zM254 850h2v2h-2zM259 860h2v2h-2zM259 857h2v1h-2zM259 858h1v1h-1zM259 853h2v2h-2zM262 860h2v2h-2zM262 857h2v1h-2zM263 858h1v1h-1zM263 853h1v1h-1zM262 854h2v1h-2zM267 860h2v2h-2zM267 857h2v1h-2zM267 858h1v1h-1zM267 853h2v2h-2zM267 850h2v2h-2zM270 860h2v2h-2zM270 857h2v1h-2zM271 858h1v1h-1zM271 853h1v1h-1zM270 854h2v1h-2zM270 850h2v2h-2zM275 860h2v2h-2zM275 857h2v1h-2zM275 858h1v1h-1zM275 853h2v2h-2zM275 850h2v2h-2zM278 860h2v2h-2zM278 857h2v1h-2zM279 858h1v1h-1zM279 853h1v1h-1zM278 854h2v1h-2zM278 850h2v2h-2zM283 860h2v2h-2zM283 857h2v1h-2zM283 858h1v1h-1zM283 853h2v2h-2zM283 850h2v2h-2zM286 860h2v2h-2zM286 857h2v1h-2zM287 858h1v1h-1zM287 853h1v1h-1zM286 854h2v1h-2zM286 850h2v2h-2zM291 860h2v2h-2zM291 857h2v1h-2zM291 858h1v1h-1zM291 853h2v2h-2zM291 850h2v2h-2zM294 860h2v2h-2zM294 857h2v1h-2zM295 858h1v1h-1zM295 853h1v1h-1zM294 854h2v1h-2zM294 850h2v2h-2zM299 860h2v2h-2zM299 857h2v1h-2zM299 858h1v1h-1zM299 853h2v2h-2zM299 850h2v2h-2zM302 860h2v2h-2zM302 857h2v1h-2zM303 858h1v1h-1zM303 853h1v1h-1zM302 854h2v1h-2zM302 850h2v2h-2zM307 860h2v2h-2zM307 857h2v1h-2zM307 858h1v1h-1zM307 853h2v2h-2zM307 850h2v2h-2zM310 860h2v2h-2zM310 857h2v1h-2zM311 858h1v1h-1zM311 853h1v1h-1zM310 854h2v1h-2zM310 850h2v2h-2zM315 860h2v2h-2zM315 857h2v1h-2zM315 858h1v1h-1zM315 853h2v2h-2zM315 850h2v2h-2zM318 860h2v2h-2zM318 857h2v1h-2zM319 858h1v1h-1zM319 853h1v1h-1zM318 854h2v1h-2zM318 850h2v2h-2zM323 860h2v2h-2zM323 857h2v1h-2zM323 858h1v1h-1zM323 853h2v2h-2zM323 850h2v2h-2zM326 860h2v2h-2zM326 857h2v1h-2zM327 858h1v1h-1zM327 853h1v1h-1zM326 854h2v1h-2zM326 850h2v2h-2zM331 860h2v2h-2zM331 857h2v1h-2zM331 858h1v1h-1zM331 853h2v2h-2zM334 860h2v2h-2zM334 857h2v1h-2zM335 858h1v1h-1zM335 853h1v1h-1zM334 854h2v1h-2zM339 860h2v2h-2zM339 857h2v1h-2zM339 858h1v1h-1zM339 853h2v2h-2zM339 850h2v2h-2zM342 860h2v2h-2zM342 857h2v1h-2zM343 858h1v1h-1zM343 853h1v1h-1zM342 854h2v1h-2zM342 850h2v2h-2zM347 860h2v2h-2zM347 857h2v1h-2zM347 858h1v1h-1zM347 853h2v2h-2zM347 850h2v2h-2zM350 860h2v2h-2zM350 857h2v1h-2zM351 858h1v1h-1zM351 853h1v1h-1zM350 854h2v1h-2zM350 850h2v2h-2zM355 860h2v2h-2zM355 857h2v1h-2zM355 858h1v1h-1zM355 853h2v2h-2zM355 850h2v2h-2zM358 860h2v2h-2zM358 857h2v1h-2zM359 858h1v1h-1zM359 853h1v1h-1zM358 854h2v1h-2zM358 850h2v2h-2zM363 860h2v2h-2zM363 857h2v1h-2zM363 858h1v1h-1zM363 853h2v2h-2zM363 850h2v2h-2zM366 860h2v2h-2zM366 857h2v1h-2zM367 858h1v1h-1zM367 853h1v1h-1zM366 854h2v1h-2zM366 850h2v2h-2zM371 860h2v2h-2zM371 857h2v1h-2zM371 858h1v1h-1zM371 853h2v2h-2zM371 850h2v2h-2zM374 860h2v2h-2zM374 857h2v1h-2zM375 858h1v1h-1zM375 853h1v1h-1zM374 854h2v1h-2zM374 850h2v2h-2zM379 860h2v2h-2zM379 857h2v1h-2zM379 858h1v1h-1zM379 853h2v2h-2zM379 850h2v2h-2zM382 860h2v2h-2zM382 857h2v1h-2zM383 858h1v1h-1zM383 853h1v1h-1zM382 854h2v1h-2zM382 850h2v2h-2zM387 860h2v2h-2zM387 857h2v1h-2zM387 858h1v1h-1zM387 853h2v2h-2zM387 850h2v2h-2zM390 860h2v2h-2zM390 857h2v1h-2zM391 858h1v1h-1zM391 853h1v1h-1zM390 854h2v1h-2zM390 850h2v2h-2zM395 860h2v2h-2zM395 857h2v1h-2zM395 858h1v1h-1zM395 853h2v2h-2zM395 850h2v2h-2zM398 860h2v2h-2zM398 857h2v1h-2zM399 858h1v1h-1zM399 853h1v1h-1zM398 854h2v1h-2zM403 860h2v2h-2zM403 857h2v1h-2zM403 858h1v1h-1zM403 853h2v2h-2zM403 850h2v2h-2zM406 860h2v2h-2zM406 857h2v1h-2zM407 858h1v1h-1zM407 853h1v1h-1zM406 854h2v1h-2zM411 860h2v2h-2zM411 857h2v1h-2zM411 858h1v1h-1zM411 853h2v2h-2zM411 850h2v2h-2zM414 860h2v2h-2zM414 857h2v1h-2zM415 858h1v1h-1zM415 853h1v1h-1zM414 854h2v1h-2zM414 850h2v2h-2zM419 860h2v2h-2zM419 857h2v1h-2zM419 858h1v1h-1zM419 853h2v2h-2zM419 850h2v2h-2zM422 860h2v2h-2zM422 857h2v1h-2zM423 858h1v1h-1zM423 853h1v1h-1zM422 854h2v1h-2zM422 850h2v2h-2zM427 860h2v2h-2zM427 857h2v1h-2zM427 858h1v1h-1zM427 853h2v2h-2zM427 850h2v2h-2zM430 860h2v2h-2zM430 857h2v1h-2zM431 858h1v1h-1zM431 853h1v1h-1zM430 854h2v1h-2zM430 850h2v2h-2zM435 860h2v2h-2zM435 857h2v1h-2zM435 858h1v1h-1zM435 853h2v2h-2zM435 850h2v2h-2zM438 860h2v2h-2zM438 857h2v1h-2zM439 858h1v1h-1zM439 853h1v1h-1zM438 854h2v1h-2zM438 850h2v2h-2zM443 860h2v2h-2zM443 857h2v1h-2zM443 858h1v1h-1zM443 853h2v2h-2zM443 850h2v2h-2zM446 860h2v2h-2zM446 857h2v1h-2zM447 858h1v1h-1zM447 853h1v1h-1zM446 854h2v1h-2zM446 850h2v2h-2zM451 860h2v2h-2zM451 857h2v1h-2zM451 858h1v1h-1zM451 853h2v2h-2zM451 850h2v2h-2zM454 860h2v2h-2zM454 857h2v1h-2zM455 858h1v1h-1zM455 853h1v1h-1zM454 854h2v1h-2zM454 850h2v2h-2zM459 860h2v2h-2zM459 857h2v1h-2zM459 858h1v1h-1zM459 853h2v2h-2zM459 850h2v2h-2zM462 860h2v2h-2zM462 857h2v1h-2zM463 858h1v1h-1zM463 853h1v1h-1zM462 854h2v1h-2zM462 850h2v2h-2zM467 860h2v2h-2zM467 857h2v1h-2zM467 858h1v1h-1zM467 853h2v2h-2zM467 850h2v2h-2zM470 860h2v2h-2zM470 857h2v1h-2zM471 858h1v1h-1zM471 853h1v1h-1zM470 854h2v1h-2zM470 850h2v2h-2zM475 860h2v2h-2zM475 857h2v1h-2zM475 858h1v1h-1zM475 853h2v2h-2zM475 850h2v2h-2zM478 860h2v2h-2zM478 857h2v1h-2zM479 858h1v1h-1zM479 853h1v1h-1zM478 854h2v1h-2zM478 850h2v2h-2zM483 860h2v2h-2zM483 857h2v1h-2zM483 858h1v1h-1zM483 853h2v2h-2zM483 850h2v2h-2zM486 860h2v2h-2zM486 857h2v1h-2zM487 858h1v1h-1zM487 853h1v1h-1zM486 854h2v1h-2zM491 860h2v2h-2zM491 857h2v1h-2zM491 858h1v1h-1zM491 853h2v2h-2zM491 850h2v2h-2zM494 860h2v2h-2zM494 857h2v1h-2zM495 858h1v1h-1zM495 853h1v1h-1zM494 854h2v1h-2zM494 850h2v2h-2zM499 860h2v2h-2zM499 857h2v1h-2zM499 858h1v1h-1zM499 853h2v2h-2zM499 850h2v2h-2zM502 860h2v2h-2zM502 857h2v1h-2zM503 858h1v1h-1zM503 853h1v1h-1zM502 854h2v1h-2zM502 850h2v2h-2zM507 860h2v2h-2zM507 857h2v1h-2zM507 858h1v1h-1zM507 853h2v2h-2zM507 850h2v2h-2zM510 860h2v2h-2zM510 857h2v1h-2zM511 858h1v1h-1zM511 853h1v1h-1zM510 854h2v1h-2zM510 850h2v2h-2zM515 860h2v2h-2zM515 857h2v1h-2zM515 858h1v1h-1zM515 853h2v2h-2zM515 850h2v2h-2zM518 860h2v2h-2zM518 857h2v1h-2zM519 858h1v1h-1zM519 853h1v1h-1zM518 854h2v1h-2zM518 850h2v2h-2zM523 860h2v2h-2zM523 857h2v1h-2zM523 858h1v1h-1zM523 853h2v2h-2zM523 850h2v2h-2zM526 860h2v2h-2zM526 857h2v1h-2zM527 858h1v1h-1zM527 853h1v1h-1zM526 854h2v1h-2zM526 850h2v2h-2zM531 860h2v2h-2zM531 857h2v1h-2zM531 858h1v1h-1zM531 853h2v2h-2zM531 850h2v2h-2zM534 860h2v2h-2zM534 857h2v1h-2zM535 858h1v1h-1zM535 853h1v1h-1zM534 854h2v1h-2zM534 850h2v2h-2z"/>
<path fill="#4c44af" d="M203 844h2v2h-2zM203 841h2v1h-2zM203 842h1v1h-1zM203 837h2v2h-2zM203 834h2v2h-2zM206 844h2v2h-2zM206 841h2v1h-2zM207 842h1v1h-1zM207 837h1v1h-1zM206 838h2v1h-2zM206 834h2v2h-2zM211 844h2v2h-2zM211 841h2v1h-2zM211 842h1v1h-1zM211 837h2v2h-2zM211 834h2v2h-2zM214 844h2v2h-2zM230 844h2v2h-2zM230 841h2v1h-2zM231 842h1v1h-1zM231 837h1v1h-1zM230 838h2v1h-2zM235 844h2v2h-2zM235 841h2v1h-2zM235 842h1v1h-1zM235 837h2v2h-2zM235 834h2v2h-2zM238 844h2v2h-2zM238 841h2v1h-2zM239 842h1v1h-1zM239 837h1v1h-1zM238 838h2v1h-2zM238 834h2v2h-2zM267 844h2v2h-2zM267 841h2v1h-2zM267 842h1v1h-1zM267 837h2v2h-2zM267 834h2v2h-2zM270 844h2v2h-2zM270 841h2v1h-2zM271 842h1v1h-1zM271 837h1v1h-1zM270 838h2v1h-2zM270 834h2v2h-2zM275 844h2v2h-2zM275 841h2v1h-2zM275 842h1v1h-1zM278 844h2v2h-2zM278 841h2v1h-2zM279 842h1v1h-1zM279 837h1v1h-1zM278 838h2v1h-2zM278 834h2v2h-2zM283 844h2v2h-2zM283 841h2v1h-2zM283 842h1v1h-1zM283 837h2v2h-2zM283 834h2v2h-2zM291 844h2v2h-2zM291 841h2v1h-2zM291 842h1v1h-1zM294 844h2v2h-2zM307 844h2v2h-2zM315 844h2v2h-2zM342 844h2v2h-2zM342 841h2v1h-2zM343 842h1v1h-1zM343 837h1v1h-1zM342 838h2v1h-2zM342 834h2v2h-2zM347 844h2v2h-2zM347 841h2v1h-2zM347 842h1v1h-1zM347 837h2v2h-2zM347 834h2v2h-2zM350 844h2v2h-2zM355 844h2v2h-2zM355 841h2v1h-2zM355 842h1v1h-1zM355 837h2v2h-2zM355 834h2v2h-2zM358 844h2v2h-2zM358 841h2v1h-2zM359 842h1v1h-1zM359 837h1v1h-1zM358 838h2v1h-2zM358 834h2v2h-2zM363 844h2v2h-2zM363 841h2v1h-2zM363 842h1v1h-1zM366 844h2v2h-2zM374 844h2v2h-2zM411 844h2v2h-2zM414 844h2v2h-2zM414 841h2v1h-2zM415 842h1v1h-1zM419 844h2v2h-2zM419 841h2v1h-2zM419 842h1v1h-1zM419 837h2v2h-2zM419 834h2v2h-2zM422 844h2v2h-2zM422 841h2v1h-2zM423 842h1v1h-1zM423 837h1v1h-1zM422 838h2v1h-2zM427 844h2v2h-2zM430 844h2v2h-2zM430 841h2v1h-2zM431 842h1v1h-1zM431 837h1v1h-1zM430 838h2v1h-2zM430 834h2v2h-2zM435 844h2v2h-2zM435 841h2v1h-2zM435 842h1v1h-1zM435 837h2v2h-2zM435 834h2v2h-2zM438 844h2v2h-2zM438 841h2v1h-2zM439 842h1v1h-1zM451 844h2v2h-2zM459 844h2v2h-2zM478 844h2v2h-2zM478 841h2v1h-2zM479 842h1v1h-1zM494 844h2v2h-2zM494 841h2v1h-2zM495 842h1v1h-1zM495 837h1v1h-1zM494 838h2v1h-2zM494 834h2v2h-2zM499 844h2v2h-2zM499 841h2v1h-2zM499 842h1v1h-1zM499 837h2v2h-2zM499 834h2v2h-2zM502 844h2v2h-2zM507 844h2v2h-2zM507 841h2v1h-2zM507 842h1v1h-1zM507 837h2v2h-2zM507 834h2v2h-2zM510 844h2v2h-2zM510 841h2v1h-2zM511 842h1v1h-1zM511 837h1v1h-1zM510 838h2v1h-2zM510 834h2v2h-2zM515 844h2v2h-2zM518 844h2v2h-2zM523 844h2v2h-2zM526 844h2v2h-2zM526 841h2v1h-2zM527 842h1v1h-1zM531 844h2v2h-2zM531 841h2v1h-2zM531 842h1v1h-1z"/>
<path fill="#6058c4" d="M203 828h2v2h-2zM203 825h2v1h-2zM203 826h1v1h-1zM203 821h2v2h-2zM203 818h2v2h-2zM206 828h2v2h-2zM206 825h2v1h-2zM207 826h1v1h-1zM207 821h1v1h-1zM206 822h2v1h-2zM211 828h2v2h-2zM235 828h2v2h-2zM238 828h2v2h-2zM238 825h2v1h-2zM239 826h1v1h-1zM239 821h1v1h-1zM238 822h2v1h-2zM267 828h2v2h-2zM267 825h2v1h-2zM267 826h1v1h-1zM267 821h2v2h-2zM267 818h2v2h-2zM270 828h2v2h-2zM270 825h2v1h-2zM271 826h1v1h-1zM271 821h1v1h-1zM270 822h2v1h-2zM270 818h2v2h-2zM278 828h2v2h-2zM278 825h2v1h-2zM279 826h1v1h-1zM279 821h1v1h-1zM278 822h2v1h-2zM278 818h2v2h-2zM283 828h2v2h-2zM283 825h2v1h-2zM283 826h1v1h-1zM283 821h2v2h-2zM283 818h2v2h-2zM342 828h2v2h-2zM342 825h2v1h-2zM343 826h1v1h-1zM343 821h1v1h-1zM342 822h2v1h-2zM342 818h2v2h-2zM355 828h2v2h-2zM355 825h2v1h-2zM355 826h1v1h-1zM355 821h2v2h-2zM355 818h2v2h-2zM419 828h2v2h-2zM419 825h2v1h-2zM419 826h1v1h-1zM419 821h2v2h-2zM419 818h2v2h-2zM430 828h2v2h-2zM430 825h2v1h-2zM431 826h1v1h-1zM431 821h1v1h-1zM430 822h2v1h-2zM430 818h2v2h-2zM435 828h2v2h-2zM494 828h2v2h-2zM494 825h2v1h-2zM495 826h1v1h-1zM495 821h1v1h-1zM494 822h2v1h-2zM494 818h2v2h-2zM499 828h2v2h-2zM499 825h2v1h-2zM499 826h1v1h-1zM507 828h2v2h-2zM507 825h2v1h-2zM507 826h1v1h-1zM507 821h2v2h-2zM507 818h2v2h-2z"/>
<path fill="#746cd0" d="M203 812h2v2h-2zM203 809h2v1h-2zM203 810h1v1h-1zM203 805h2v2h-2zM203 802h2v2h-2zM267 812h2v2h-2zM267 809h2v1h-2zM267 810h1v1h-1zM267 805h2v2h-2zM267 802h2v2h-2zM270 812h2v2h-2zM270 809h2v1h-2zM271 810h1v1h-1zM271 805h1v1h-1zM270 806h2v1h-2zM278 812h2v2h-2zM278 809h2v1h-2zM279 810h1v1h-1zM279 805h1v1h-1zM278 806h2v1h-2zM278 802h2v2h-2zM283 812h2v2h-2zM283 809h2v1h-2zM283 810h1v1h-1zM283 805h2v2h-2zM283 802h2v2h-2zM342 812h2v2h-2zM342 809h2v1h-2zM343 810h1v1h-1zM343 805h1v1h-1zM342 806h2v1h-2zM342 802h2v2h-2zM355 812h2v2h-2zM355 809h2v1h-2zM355 810h1v1h-1zM355 805h2v2h-2zM355 802h2v2h-2zM419 812h2v2h-2zM419 809h2v1h-2zM419 810h1v1h-1zM419 805h2v2h-2zM419 802h2v2h-2zM430 812h2v2h-2zM430 809h2v1h-2zM431 810h1v1h-1zM431 805h1v1h-1zM430 806h2v1h-2zM430 802h2v2h-2zM494 812h2v2h-2zM494 809h2v1h-2zM495 810h1v1h-1zM495 805h1v1h-1zM494 806h2v1h-2zM494 802h2v2h-2zM507 812h2v2h-2zM507 809h2v1h-2zM507 810h1v1h-1zM507 805h2v2h-2zM507 802h2v2h-2z"/>
<path fill="#8880dc" d="M203 796h2v2h-2zM203 793h2v1h-2zM203 794h1v1h-1zM203 789h2v2h-2zM203 786h2v2h-2zM267 796h2v2h-2zM267 793h2v1h-2zM267 794h1v1h-1zM267 789h2v2h-2zM267 786h2v2h-2zM278 796h2v2h-2zM278 793h2v1h-2zM279 794h1v1h-1zM279 789h1v1h-1zM278 790h2v1h-2zM278 786h2v2h-2zM342 796h2v2h-2zM342 793h2v1h-2zM343 794h1v1h-1zM343 789h1v1h-1zM342 790h2v1h-2zM342 786h2v2h-2zM355 796h2v2h-2zM355 793h2v1h-2zM355 794h1v1h-1zM355 789h2v2h-2zM355 786h2v2h-2zM419 796h2v2h-2zM419 793h2v1h-2zM419 794h1v1h-1zM419 789h2v2h-2zM419 786h2v2h-2zM430 796h2v2h-2zM430 793h2v1h-2zM431 794h1v1h-1zM431 789h1v1h-1zM430 790h2v1h-2zM430 786h2v2h-2zM494 796h2v2h-2zM494 793h2v1h-2zM495 794h1v1h-1zM495 789h1v1h-1zM494 790h2v1h-2zM494 786h2v2h-2zM507 796h2v2h-2zM507 793h2v1h-2zM507 794h1v1h-1zM507 789h2v2h-2zM507 786h2v2h-2z"/>
<path fill="#9c94e4" d="M203 780h2v2h-2zM203 777h2v1h-2zM203 778h1v1h-1zM203 773h2v2h-2zM203 770h2v2h-2zM267 780h2v2h-2zM267 777h2v1h-2zM267 778h1v1h-1zM267 773h2v2h-2zM267 770h2v2h-2zM278 780h2v2h-2zM278 777h2v1h-2zM279 778h1v1h-1zM279 773h1v1h-1zM278 774h2v1h-2zM278 770h2v2h-2zM342 780h2v2h-2zM342 777h2v1h-2zM343 778h1v1h-1zM343 773h1v1h-1zM342 774h2v1h-2zM342 770h2v2h-2zM355 780h2v2h-2zM355 777h2v1h-2zM355 778h1v1h-1zM355 773h2v2h-2zM355 770h2v2h-2zM419 780h2v2h-2zM419 777h2v1h-2zM419 778h1v1h-1zM419 773h2v2h-2zM419 770h2v2h-2zM430 780h2v2h-2zM430 777h2v1h-2zM431 778h1v1h-1zM431 773h1v1h-1zM430 774h2v1h-2zM430 770h2v2h-2zM494 780h2v2h-2zM494 777h2v1h-2zM495 778h1v1h-1zM495 773h1v1h-1zM494 774h2v1h-2zM494 770h2v2h-2zM507 780h2v2h-2zM507 777h2v1h-2zM507 778h1v1h-1zM507 773h2v2h-2zM507 770h2v2h-2z"/>
<path fill="#b4acec" d="M203 764h2v2h-2zM203 761h2v1h-2zM203 762h1v1h-1zM203 757h2v2h-2zM203 754h2v2h-2zM267 764h2v2h-2zM267 761h2v1h-2zM267 762h1v1h-1zM267 757h2v2h-2zM267 754h2v2h-2zM278 764h2v2h-2zM278 761h2v1h-2zM279 762h1v1h-1zM279 757h1v1h-1zM278 758h2v1h-2zM278 754h2v2h-2zM342 764h2v2h-2zM342 761h2v1h-2zM343 762h1v1h-1zM343 757h1v1h-1zM342 758h2v1h-2zM342 754h2v2h-2zM355 764h2v2h-2zM355 761h2v1h-2zM355 762h1v1h-1zM355 757h2v2h-2zM355 754h2v2h-2zM419 764h2v2h-2zM419 761h2v1h-2zM419 762h1v1h-1zM419 757h2v2h-2zM419 754h2v2h-2zM430 764h2v2h-2zM430 761h2v1h-2zM431 762h1v1h-1zM431 757h1v1h-1zM430 758h2v1h-2zM430 754h2v2h-2zM494 764h2v2h-2zM494 761h2v1h-2zM495 762h1v1h-1zM495 757h1v1h-1zM494 758h2v1h-2zM494 754h2v2h-2zM507 764h2v2h-2zM507 761h2v1h-2zM507 762h1v1h-1zM507 757h2v2h-2zM507 754h2v2h-2z"/>
<path fill="#cfc8f4" d="M203 748h2v2h-2zM203 745h2v1h-2zM203 746h1v1h-1zM203 741h2v2h-2zM203 738h2v2h-2zM267 748h2v2h-2zM267 745h2v1h-2zM267 746h1v1h-1zM267 741h2v2h-2zM267 738h2v2h-2zM278 748h2v2h-2zM278 745h2v1h-2zM279 746h1v1h-1zM279 741h1v1h-1zM278 742h2v1h-2zM278 738h2v2h-2zM342 748h2v2h-2zM342 745h2v1h-2zM343 746h1v1h-1zM343 741h1v1h-1zM342 742h2v1h-2zM342 738h2v2h-2zM355 748h2v2h-2zM355 745h2v1h-2zM355 746h1v1h-1zM355 741h2v2h-2zM355 738h2v2h-2zM419 748h2v2h-2zM419 745h2v1h-2zM419 746h1v1h-1zM419 741h2v2h-2zM419 738h2v2h-2zM430 748h2v2h-2zM430 745h2v1h-2zM431 746h1v1h-1zM431 741h1v1h-1zM430 742h2v1h-2zM430 738h2v2h-2zM494 748h2v2h-2zM494 745h2v1h-2zM495 746h1v1h-1zM495 741h1v1h-1zM494 742h2v1h-2zM494 738h2v2h-2zM507 748h2v2h-2zM507 745h2v1h-2zM507 746h1v1h-1zM507 741h2v2h-2zM507 738h2v2h-2z"/>
<path fill="#78167c" d="M198 866h2v2h-2zM203 866h2v2h-2zM203 869h2v2h-2zM203 873h2v1h-2zM203 874h1v1h-1zM203 876h2v2h-2zM206 866h2v2h-2zM207 869h1v1h-1zM206 870h2v1h-2zM206 873h2v1h-2zM207 874h1v1h-1zM206 876h2v2h-2zM211 866h2v2h-2zM211 869h2v2h-2zM211 873h2v1h-2zM211 874h1v1h-1zM211 876h2v2h-2zM214 866h2v2h-2zM215 869h1v1h-1zM214 870h2v1h-2zM214 873h2v1h-2zM215 874h1v1h-1zM214 876h2v2h-2zM219 866h2v2h-2zM219 869h2v2h-2zM219 873h2v1h-2zM219 874h1v1h-1zM219 876h2v2h-2zM222 866h2v2h-2zM223 869h1v1h-1zM222 870h2v1h-2zM222 873h2v1h-2zM223 874h1v1h-1zM222 876h2v2h-2zM227 866h2v2h-2zM227 869h2v2h-2zM227 873h2v1h-2zM227 874h1v1h-1zM227 876h2v2h-2zM230 866h2v2h-2zM231 869h1v1h-1zM230 870h2v1h-2zM230 873h2v1h-2zM231 874h1v1h-1zM230 876h2v2h-2zM235 866h2v2h-2zM235 869h2v2h-2zM235 873h2v1h-2zM235 874h1v1h-1zM235 876h2v2h-2zM238 866h2v2h-2zM239 869h1v1h-1zM238 870h2v1h-2zM238 873h2v1h-2zM239 874h1v1h-1zM238 876h2v2h-2zM243 866h2v2h-2zM243 869h2v2h-2zM243 873h2v1h-2zM243 874h1v1h-1zM243 876h2v2h-2zM246 866h2v2h-2zM247 869h1v1h-1zM246 870h2v1h-2zM246 873h2v1h-2zM247 874h1v1h-1zM246 876h2v2h-2zM251 866h2v2h-2zM251 869h2v2h-2zM251 873h2v1h-2zM251 874h1v1h-1zM251 876h2v2h-2zM254 866h2v2h-2zM255 869h1v1h-1zM254 870h2v1h-2zM254 873h2v1h-2zM255 874h1v1h-1zM254 876h2v2h-2zM259 866h2v2h-2zM259 869h2v2h-2zM259 873h2v1h-2zM259 874h1v1h-1zM259 876h2v2h-2zM262 866h2v2h-2zM263 869h1v1h-1zM262 870h2v1h-2zM262 873h2v1h-2zM263 874h1v1h-1zM262 876h2v2h-2zM267 866h2v2h-2zM267 869h2v2h-2zM267 873h2v1h-2zM267 874h1v1h-1zM267 876h2v2h-2zM270 866h2v2h-2zM271 869h1v1h-1zM270 870h2v1h-2zM270 873h2v1h-2zM271 874h1v1h-1zM270 876h2v2h-2zM275 866h2v2h-2zM275 869h2v2h-2zM275 873h2v1h-2zM275 874h1v1h-1zM275 876h2v2h-2zM278 866h2v2h-2zM279 869h1v1h-1zM278 870h2v1h-2zM278 873h2v1h-2zM279 874h1v1h-1zM278 876h2v2h-2zM283 866h2v2h-2zM283 869h2v2h-2zM283 873h2v1h-2zM283 874h1v1h-1zM283 876h2v2h-2zM286 866h2v2h-2zM287 869h1v1h-1zM286 870h2v1h-2zM286 873h2v1h-2zM287 874h1v1h-1zM286 876h2v2h-2zM291 866h2v2h-2zM291 869h2v2h-2zM291 873h2v1h-2zM291 874h1v1h-1zM291 876h2v2h-2zM294 866h2v2h-2zM295 869h1v1h-1zM294 870h2v1h-2zM294 873h2v1h-2zM295 874h1v1h-1zM294 876h2v2h-2zM299 866h2v2h-2zM299 869h2v2h-2zM299 873h2v1h-2zM299 874h1v1h-1zM299 876h2v2h-2zM302 866h2v2h-2zM303 869h1v1h-1zM302 870h2v1h-2zM302 873h2v1h-2zM303 874h1v1h-1zM302 876h2v2h-2zM307 866h2v2h-2zM307 869h2v2h-2zM307 873h2v1h-2zM307 874h1v1h-1zM307 876h2v2h-2zM310 866h2v2h-2zM311 869h1v1h-1zM310 870h2v1h-2zM310 873h2v1h-2zM311 874h1v1h-1zM310 876h2v2h-2zM315 866h2v2h-2zM315 869h2v2h-2zM315 873h2v1h-2zM315 874h1v1h-1zM315 876h2v2h-2zM318 866h2v2h-2zM319 869h1v1h-1zM318 870h2v1h-2zM318 873h2v1h-2zM319 874h1v1h-1zM318 876h2v2h-2zM323 866h2v2h-2zM323 869h2v2h-2zM323 873h2v1h-2zM323 874h1v1h-1zM323 876h2v2h-2zM326 866h2v2h-2zM327 869h1v1h-1zM326 870h2v1h-2zM326 873h2v1h-2zM327 874h1v1h-1zM326 876h2v2h-2zM331 866h2v2h-2zM331 869h2v2h-2zM331 873h2v1h-2zM331 874h1v1h-1zM331 876h2v2h-2zM334 866h2v2h-2zM335 869h1v1h-1zM334 870h2v1h-2zM334 873h2v1h-2zM335 874h1v1h-1zM334 876h2v2h-2zM339 866h2v2h-2zM339 869h2v2h-2zM339 873h2v1h-2zM339 874h1v1h-1zM339 876h2v2h-2zM342 866h2v2h-2zM343 869h1v1h-1zM342 870h2v1h-2zM342 873h2v1h-2zM343 874h1v1h-1zM342 876h2v2h-2zM347 866h2v2h-2zM347 869h2v2h-2zM347 873h2v1h-2zM347 874h1v1h-1zM347 876h2v2h-2zM350 866h2v2h-2zM351 869h1v1h-1zM350 870h2v1h-2zM350 873h2v1h-2zM351 874h1v1h-1zM350 876h2v2h-2zM355 866h2v2h-2zM355 869h2v2h-2zM355 873h2v1h-2zM355 874h1v1h-1zM355 876h2v2h-2zM358 866h2v2h-2zM359 869h1v1h-1zM358 870h2v1h-2zM358 873h2v1h-2zM359 874h1v1h-1zM358 876h2v2h-2zM363 866h2v2h-2zM363 869h2v2h-2zM363 873h2v1h-2zM363 874h1v1h-1zM363 876h2v2h-2zM366 866h2v2h-2zM367 869h1v1h-1zM366 870h2v1h-2zM366 873h2v1h-2zM367 874h1v1h-1zM366 876h2v2h-2zM371 866h2v2h-2zM371 869h2v2h-2zM371 873h2v1h-2zM371 874h1v1h-1zM371 876h2v2h-2zM374 866h2v2h-2zM375 869h1v1h-1zM374 870h2v1h-2zM374 873h2v1h-2zM375 874h1v1h-1zM374 876h2v2h-2zM379 866h2v2h-2zM379 869h2v2h-2zM379 873h2v1h-2zM379 874h1v1h-1zM379 876h2v2h-2zM382 866h2v2h-2zM383 869h1v1h-1zM382 870h2v1h-2zM382 873h2v1h-2zM383 874h1v1h-1zM382 876h2v2h-2zM387 866h2v2h-2zM387 869h2v2h-2zM387 873h2v1h-2zM387 874h1v1h-1zM387 876h2v2h-2zM390 866h2v2h-2zM391 869h1v1h-1zM390 870h2v1h-2zM390 873h2v1h-2zM391 874h1v1h-1zM390 876h2v2h-2zM395 866h2v2h-2zM395 869h2v2h-2zM395 873h2v1h-2zM395 874h1v1h-1zM395 876h2v2h-2zM398 866h2v2h-2zM399 869h1v1h-1zM398 870h2v1h-2zM398 873h2v1h-2zM399 874h1v1h-1zM398 876h2v2h-2zM403 866h2v2h-2zM403 869h2v2h-2zM403 873h2v1h-2zM403 874h1v1h-1zM403 876h2v2h-2zM406 866h2v2h-2zM407 869h1v1h-1zM406 870h2v1h-2zM406 873h2v1h-2zM407 874h1v1h-1zM406 876h2v2h-2zM411 866h2v2h-2zM411 869h2v2h-2zM411 873h2v1h-2zM411 874h1v1h-1zM411 876h2v2h-2zM414 866h2v2h-2zM415 869h1v1h-1zM414 870h2v1h-2zM414 873h2v1h-2zM415 874h1v1h-1zM414 876h2v2h-2zM419 866h2v2h-2zM419 869h2v2h-2zM419 873h2v1h-2zM419 874h1v1h-1zM419 876h2v2h-2zM422 866h2v2h-2zM423 869h1v1h-1zM422 870h2v1h-2zM422 873h2v1h-2zM423 874h1v1h-1zM422 876h2v2h-2zM427 866h2v2h-2zM427 869h2v2h-2zM427 873h2v1h-2zM427 874h1v1h-1zM427 876h2v2h-2zM430 866h2v2h-2zM431 869h1v1h-1zM430 870h2v1h-2zM430 873h2v1h-2zM431 874h1v1h-1zM430 876h2v2h-2zM435 866h2v2h-2zM435 869h2v2h-2zM435 873h2v1h-2zM435 874h1v1h-1zM435 876h2v2h-2zM438 866h2v2h-2zM439 869h1v1h-1zM438 870h2v1h-2zM438 873h2v1h-2zM439 874h1v1h-1zM438 876h2v2h-2zM443 866h2v2h-2zM443 869h2v2h-2zM443 873h2v1h-2zM443 874h1v1h-1zM443 876h2v2h-2zM446 866h2v2h-2zM447 869h1v1h-1zM446 870h2v1h-2zM446 873h2v1h-2zM447 874h1v1h-1zM446 876h2v2h-2zM451 866h2v2h-2zM451 869h2v2h-2zM451 873h2v1h-2zM451 874h1v1h-1zM451 876h2v2h-2zM454 866h2v2h-2zM455 869h1v1h-1zM454 870h2v1h-2zM454 873h2v1h-2zM455 874h1v1h-1zM454 876h2v2h-2zM459 866h2v2h-2zM459 869h2v2h-2zM459 873h2v1h-2zM459 874h1v1h-1zM459 876h2v2h-2zM462 866h2v2h-2zM463 869h1v1h-1zM462 870h2v1h-2zM462 873h2v1h-2zM463 874h1v1h-1zM462 876h2v2h-2zM467 866h2v2h-2zM467 869h2v2h-2zM467 873h2v1h-2zM467 874h1v1h-1zM467 876h2v2h-2zM470 866h2v2h-2zM471 869h1v1h-1zM470 870h2v1h-2zM470 873h2v1h-2zM471 874h1v1h-1zM470 876h2v2h-2zM475 866h2v2h-2zM475 869h2v2h-2zM475 873h2v1h-2zM475 874h1v1h-1zM475 876h2v2h-2zM478 866h2v2h-2zM479 869h1v1h-1zM478 870h2v1h-2zM478 873h2v1h-2zM479 874h1v1h-1zM478 876h2v2h-2zM483 866h2v2h-2zM483 869h2v2h-2zM483 873h2v1h-2zM483 874h1v1h-1zM483 876h2v2h-2zM486 866h2v2h-2zM487 869h1v1h-1zM486 870h2v1h-2zM486 873h2v1h-2zM487 874h1v1h-1zM486 876h2v2h-2zM491 866h2v2h-2zM491 869h2v2h-2zM491 873h2v1h-2zM491 874h1v1h-1zM491 876h2v2h-2zM494 866h2v2h-2zM495 869h1v1h-1zM494 870h2v1h-2zM494 873h2v1h-2zM495 874h1v1h-1zM494 876h2v2h-2zM499 866h2v2h-2zM499 869h2v2h-2zM499 873h2v1h-2zM499 874h1v1h-1zM499 876h2v2h-2zM502 866h2v2h-2zM503 869h1v1h-1zM502 870h2v1h-2zM502 873h2v1h-2zM503 874h1v1h-1zM502 876h2v2h-2zM507 866h2v2h-2zM507 869h2v2h-2zM507 873h2v1h-2zM507 874h1v1h-1zM507 876h2v2h-2zM510 866h2v2h-2zM511 869h1v1h-1zM510 870h2v1h-2zM510 873h2v1h-2zM511 874h1v1h-1zM510 876h2v2h-2zM515 866h2v2h-2zM515 869h2v2h-2zM515 873h2v1h-2zM515 874h1v1h-1zM515 876h2v2h-2zM518 866h2v2h-2zM519 869h1v1h-1zM518 870h2v1h-2zM518 873h2v1h-2zM519 874h1v1h-1zM518 876h2v2h-2zM523 866h2v2h-2zM523 869h2v2h-2zM523 873h2v1h-2zM523 874h1v1h-1zM523 876h2v2h-2zM526 866h2v2h-2zM527 869h1v1h-1zM526 870h2v1h-2zM526 873h2v1h-2zM527 874h1v1h-1zM526 876h2v2h-2zM531 866h2v2h-2zM531 869h2v2h-2zM531 873h2v1h-2zM531 874h1v1h-1zM531 876h2v2h-2zM534 866h2v2h-2zM535 869h1v1h-1zM534 870h2v1h-2zM534 873h2v1h-2zM535 874h1v1h-1zM534 876h2v2h-2z"/>
<path fill="#802e80" d="M203 882h2v2h-2zM203 885h2v2h-2zM203 889h2v1h-2zM203 890h1v1h-1zM203 892h2v2h-2zM206 882h2v2h-2zM207 885h1v1h-1zM206 886h2v1h-2zM206 889h2v1h-2zM207 890h1v1h-1zM206 892h2v2h-2zM211 882h2v2h-2zM211 885h2v2h-2zM211 889h2v1h-2zM211 890h1v1h-1zM211 892h2v2h-2zM214 882h2v2h-2zM215 885h1v1h-1zM214 886h2v1h-2zM214 889h2v1h-2zM215 890h1v1h-1zM214 892h2v2h-2zM219 882h2v2h-2zM219 885h2v2h-2zM219 889h2v1h-2zM219 890h1v1h-1zM219 892h2v2h-2zM222 882h2v2h-2zM223 885h1v1h-1zM222 886h2v1h-2zM222 889h2v1h-2zM223 890h1v1h-1zM222 892h2v2h-2zM227 882h2v2h-2zM227 885h2v2h-2zM227 889h2v1h-2zM227 890h1v1h-1zM227 892h2v2h-2zM230 882h2v2h-2zM231 885h1v1h-1zM230 886h2v1h-2zM230 889h2v1h-2zM231 890h1v1h-1zM230 892h2v2h-2zM235 882h2v2h-2zM235 885h2v2h-2zM235 889h2v1h-2zM235 890h1v1h-1zM235 892h2v2h-2zM238 882h2v2h-2zM239 885h1v1h-1zM238 886h2v1h-2zM238 889h2v1h-2zM239 890h1v1h-1zM238 892h2v2h-2zM243 882h2v2h-2zM243 885h2v2h-2zM243 889h2v1h-2zM243 890h1v1h-1zM243 892h2v2h-2zM246 882h2v2h-2zM247 885h1v1h-1zM246 886h2v1h-2zM246 889h2v1h-2zM247 890h1v1h-1zM246 892h2v2h-2zM251 882h2v2h-2zM251 885h2v2h-2zM251 889h2v1h-2zM251 890h1v1h-1zM251 892h2v2h-2zM254 882h2v2h-2zM255 885h1v1h-1zM254 886h2v1h-2zM254 889h2v1h-2zM255 890h1v1h-1zM254 892h2v2h-2zM259 882h2v2h-2zM259 885h2v2h-2zM259 889h2v1h-2zM259 890h1v1h-1zM259 892h2v2h-2zM262 882h2v2h-2zM263 885h1v1h-1zM262 886h2v1h-2zM262 889h2v1h-2zM263 890h1v1h-1zM262 892h2v2h-2zM267 882h2v2h-2zM267 885h2v2h-2zM267 889h2v1h-2zM267 890h1v1h-1zM267 892h2v2h-2zM270 882h2v2h-2zM271 885h1v1h-1zM270 886h2v1h-2zM270 889h2v1h-2zM271 890h1v1h-1zM270 892h2v2h-2zM275 882h2v2h-2zM275 885h2v2h-2zM275 889h2v1h-2zM275 890h1v1h-1zM275 892h2v2h-2zM278 882h2v2h-2zM279 885h1v1h-1zM278 886h2v1h-2zM278 889h2v1h-2zM279 890h1v1h-1zM278 892h2v2h-2zM283 882h2v2h-2zM283 885h2v2h-2zM283 889h2v1h-2zM283 890h1v1h-1zM283 892h2v2h-2zM286 882h2v2h-2zM287 885h1v1h-1zM286 886h2v1h-2zM286 889h2v1h-2zM287 890h1v1h-1zM286 892h2v2h-2zM291 882h2v2h-2zM291 885h2v2h-2zM291 889h2v1h-2zM291 890h1v1h-1zM291 892h2v2h-2zM294 882h2v2h-2zM295 885h1v1h-1zM294 886h2v1h-2zM294 889h2v1h-2zM295 890h1v1h-1zM294 892h2v2h-2zM299 882h2v2h-2zM299 885h2v2h-2zM299 889h2v1h-2zM299 890h1v1h-1zM299 892h2v2h-2zM302 882h2v2h-2zM303 885h1v1h-1zM302 886h2v1h-2zM302 889h2v1h-2zM303 890h1v1h-1zM302 892h2v2h-2zM307 882h2v2h-2zM307 885h2v2h-2zM307 889h2v1h-2zM307 890h1v1h-1zM307 892h2v2h-2zM310 882h2v2h-2zM311 885h1v1h-1zM310 886h2v1h-2zM310 889h2v1h-2zM311 890h1v1h-1zM310 892h2v2h-2zM315 882h2v2h-2zM315 885h2v2h-2zM315 889h2v1h-2zM315 890h1v1h-1zM315 892h2v2h-2zM318 882h2v2h-2zM319 885h1v1h-1zM318 886h2v1h-2zM318 889h2v1h-2zM319 890h1v1h-1zM318 892h2v2h-2zM323 882h2v2h-2zM323 885h2v2h-2zM323 889h2v1h-2zM323 890h1v1h-1zM323 892h2v2h-2zM326 882h2v2h-2zM327 885h1v1h-1zM326 886h2v1h-2zM326 889h2v1h-2zM327 890h1v1h-1zM326 892h2v2h-2zM331 882h2v2h-2zM331 885h2v2h-2zM331 889h2v1h-2zM331 890h1v1h-1zM331 892h2v2h-2zM334 882h2v2h-2zM335 885h1v1h-1zM334 886h2v1h-2zM334 889h2v1h-2zM335 890h1v1h-1zM334 892h2v2h-2zM339 882h2v2h-2zM339 885h2v2h-2zM339 889h2v1h-2zM339 890h1v1h-1zM339 892h2v2h-2zM342 882h2v2h-2zM343 885h1v1h-1zM342 886h2v1h-2zM342 889h2v1h-2zM343 890h1v1h-1zM342 892h2v2h-2zM347 882h2v2h-2zM347 885h2v2h-2zM347 889h2v1h-2zM347 890h1v1h-1zM347 892h2v2h-2zM350 882h2v2h-2zM351 885h1v1h-1zM350 886h2v1h-2zM350 889h2v1h-2zM351 890h1v1h-1zM350 892h2v2h-2zM355 882h2v2h-2zM355 885h2v2h-2zM355 889h2v1h-2zM355 890h1v1h-1zM355 892h2v2h-2zM358 882h2v2h-2zM359 885h1v1h-1zM358 886h2v1h-2zM358 889h2v1h-2zM359 890h1v1h-1zM358 892h2v2h-2zM363 882h2v2h-2zM363 885h2v2h-2zM363 889h2v1h-2zM363 890h1v1h-1zM363 892h2v2h-2zM366 882h2v2h-2zM367 885h1v1h-1zM366 886h2v1h-2zM366 889h2v1h-2zM367 890h1v1h-1zM366 892h2v2h-2zM371 882h2v2h-2zM371 885h2v2h-2zM371 889h2v1h-2zM371 890h1v1h-1zM371 892h2v2h-2zM374 882h2v2h-2zM375 885h1v1h-1zM374 886h2v1h-2zM374 889h2v1h-2zM375 890h1v1h-1zM374 892h2v2h-2zM379 882h2v2h-2zM379 885h2v2h-2zM379 889h2v1h-2zM379 890h1v1h-1zM379 892h2v2h-2zM382 882h2v2h-2zM383 885h1v1h-1zM382 886h2v1h-2zM382 889h2v1h-2zM383 890h1v1h-1zM382 892h2v2h-2zM387 882h2v2h-2zM387 885h2v2h-2zM387 889h2v1h-2zM387 890h1v1h-1zM387 892h2v2h-2zM390 882h2v2h-2zM391 885h1v1h-1zM390 886h2v1h-2zM390 889h2v1h-2zM391 890h1v1h-1zM390 892h2v2h-2zM395 882h2v2h-2zM395 885h2v2h-2zM395 889h2v1h-2zM395 890h1v1h-1zM395 892h2v2h-2zM398 882h2v2h-2zM399 885h1v1h-1zM398 886h2v1h-2zM398 889h2v1h-2zM399 890h1v1h-1zM398 892h2v2h-2zM403 882h2v2h-2zM403 885h2v2h-2zM403 889h2v1h-2zM403 890h1v1h-1zM403 892h2v2h-2zM406 882h2v2h-2zM407 885h1v1h-1zM406 886h2v1h-2zM406 889h2v1h-2zM407 890h1v1h-1zM406 892h2v2h-2zM411 882h2v2h-2zM411 885h2v2h-2zM411 889h2v1h-2zM411 890h1v1h-1zM411 892h2v2h-2zM414 882h2v2h-2zM415 885h1v1h-1zM414 886h2v1h-2zM414 889h2v1h-2zM415 890h1v1h-1zM414 892h2v2h-2zM419 882h2v2h-2zM419 885h2v2h-2zM419 889h2v1h-2zM419 890h1v1h-1zM419 892h2v2h-2zM422 882h2v2h-2zM423 885h1v1h-1zM422 886h2v1h-2zM422 889h2v1h-2zM423 890h1v1h-1zM422 892h2v2h-2zM427 882h2v2h-2zM427 885h2v2h-2zM427 889h2v1h-2zM427 890h1v1h-1zM427 892h2v2h-2zM430 882h2v2h-2zM431 885h1v1h-1zM430 886h2v1h-2zM430 889h2v1h-2zM431 890h1v1h-1zM430 892h2v2h-2zM435 882h2v2h-2zM435 885h2v2h-2zM435 889h2v1h-2zM435 890h1v1h-1zM435 892h2v2h-2zM438 882h2v2h-2zM439 885h1v1h-1zM438 886h2v1h-2zM438 889h2v1h-2zM439 890h1v1h-1zM438 892h2v2h-2zM443 882h2v2h-2zM443 885h2v2h-2zM443 889h2v1h-2zM443 890h1v1h-1zM443 892h2v2h-2zM446 882h2v2h-2zM447 885h1v1h-1zM446 886h2v1h-2zM446 889h2v1h-2zM447 890h1v1h-1zM446 892h2v2h-2zM451 882h2v2h-2zM451 885h2v2h-2zM451 889h2v1h-2zM451 890h1v1h-1zM451 892h2v2h-2zM454 882h2v2h-2zM455 885h1v1h-1zM454 886h2v1h-2zM454 889h2v1h-2zM455 890h1v1h-1zM454 892h2v2h-2zM459 882h2v2h-2zM459 885h2v2h-2zM459 889h2v1h-2zM459 890h1v1h-1zM459 892h2v2h-2zM462 882h2v2h-2zM463 885h1v1h-1zM462 886h2v1h-2zM462 889h2v1h-2zM463 890h1v1h-1zM462 892h2v2h-2zM467 882h2v2h-2zM467 885h2v2h-2zM467 889h2v1h-2zM467 890h1v1h-1zM467 892h2v2h-2zM470 882h2v2h-2zM471 885h1v1h-1zM470 886h2v1h-2zM470 889h2v1h-2zM471 890h1v1h-1zM470 892h2v2h-2zM475 882h2v2h-2zM475 885h2v2h-2zM475 889h2v1h-2zM475 890h1v1h-1zM475 892h2v2h-2zM478 882h2v2h-2zM479 885h1v1h-1zM478 886h2v1h-2zM478 889h2v1h-2zM479 890h1v1h-1zM478 892h2v2h-2zM483 882h2v2h-2zM483 885h2v2h-2zM483 889h2v1h-2zM483 890h1v1h-1zM483 892h2v2h-2zM486 882h2v2h-2zM487 885h1v1h-1zM486 886h2v1h-2zM486 889h2v1h-2zM487 890h1v1h-1zM486 892h2v2h-2zM491 882h2v2h-2zM491 885h2v2h-2zM491 889h2v1h-2zM491 890h1v1h-1zM491 892h2v2h-2zM494 882h2v2h-2zM495 885h1v1h-1zM494 886h2v1h-2zM494 889h2v1h-2zM495 890h1v1h-1zM494 892h2v2h-2zM499 882h2v2h-2zM499 885h2v2h-2zM499 889h2v1h-2zM499 890h1v1h-1zM499 892h2v2h-2zM502 882h2v2h-2zM503 885h1v1h-1zM502 886h2v1h-2zM502 889h2v1h-2zM503 890h1v1h-1zM502 892h2v2h-2zM507 882h2v2h-2zM507 885h2v2h-2zM507 889h2v1h-2zM507 890h1v1h-1zM507 892h2v2h-2zM510 882h2v2h-2zM511 885h1v1h-1zM510 886h2v1h-2zM510 889h2v1h-2zM511 890h1v1h-1zM510 892h2v2h-2zM515 882h2v2h-2zM515 885h2v2h-2zM515 889h2v1h-2zM515 890h1v1h-1zM515 892h2v2h-2zM518 882h2v2h-2zM519 885h1v1h-1zM518 886h2v1h-2zM518 889h2v1h-2zM519 890h1v1h-1zM518 892h2v2h-2zM523 882h2v2h-2zM523 885h2v2h-2zM523 889h2v1h-2zM523 890h1v1h-1zM523 892h2v2h-2zM526 882h2v2h-2zM527 885h1v1h-1zM526 886h2v1h-2zM526 889h2v1h-2zM527 890h1v1h-1zM526 892h2v2h-2zM531 882h2v2h-2zM531 885h2v2h-2zM531 889h2v1h-2zM531 890h1v1h-1zM531 892h2v2h-2zM534 882h2v2h-2zM535 885h1v1h-1zM534 886h2v1h-2zM534 889h2v1h-2zM535 890h1v1h-1zM534 892h2v2h-2z"/>
<path fill="#8f448f" d="M203 898h2v2h-2zM203 901h2v2h-2zM203 905h2v1h-2zM203 906h1v1h-1zM203 908h2v2h-2zM206 898h2v2h-2zM207 901h1v1h-1zM206 902h2v1h-2zM206 905h2v1h-2zM207 906h1v1h-1zM206 908h2v2h-2zM211 898h2v2h-2zM211 901h2v2h-2zM211 905h2v1h-2zM211 906h1v1h-1zM211 908h2v2h-2zM214 898h2v2h-2zM215 901h1v1h-1zM214 902h2v1h-2zM214 905h2v1h-2zM215 906h1v1h-1zM214 908h2v2h-2zM219 898h2v2h-2zM219 901h2v2h-2zM219 905h2v1h-2zM219 906h1v1h-1zM219 908h2v2h-2zM222 898h2v2h-2zM223 901h1v1h-1zM222 902h2v1h-2zM222 905h2v1h-2zM223 906h1v1h-1zM222 908h2v2h-2zM227 898h2v2h-2zM227 901h2v2h-2zM227 905h2v1h-2zM227 906h1v1h-1zM227 908h2v2h-2zM230 898h2v2h-2zM231 901h1v1h-1zM230 902h2v1h-2zM230 905h2v1h-2zM231 906h1v1h-1zM230 908h2v2h-2zM235 898h2v2h-2zM235 901h2v2h-2zM235 905h2v1h-2zM235 906h1v1h-1zM235 908h2v2h-2zM238 898h2v2h-2zM239 901h1v1h-1zM238 902h2v1h-2zM238 905h2v1h-2zM239 906h1v1h-1zM238 908h2v2h-2zM243 898h2v2h-2zM243 901h2v2h-2zM243 905h2v1h-2zM243 906h1v1h-1zM243 908h2v2h-2zM246 898h2v2h-2zM247 901h1v1h-1zM246 902h2v1h-2zM246 905h2v1h-2zM247 906h1v1h-1zM246 908h2v2h-2zM251 898h2v2h-2zM251 901h2v2h-2zM251 905h2v1h-2zM251 906h1v1h-1zM251 908h2v2h-2zM254 898h2v2h-2zM255 901h1v1h-1zM254 902h2v1h-2zM254 905h2v1h-2zM255 906h1v1h-1zM254 908h2v2h-2zM259 898h2v2h-2zM259 901h2v2h-2zM259 905h2v1h-2zM259 906h1v1h-1zM259 908h2v2h-2zM262 898h2v2h-2zM263 901h1v1h-1zM262 902h2v1h-2zM262 905h2v1h-2zM263 906h1v1h-1zM262 908h2v2h-2zM267 898h2v2h-2zM267 901h2v2h-2zM267 905h2v1h-2zM267 906h1v1h-1zM267 908h2v2h-2zM270 898h2v2h-2zM271 901h1v1h-1zM270 902h2v1h-2zM270 905h2v1h-2zM271 906h1v1h-1zM270 908h2v2h-2zM275 898h2v2h-2zM275 901h2v2h-2zM275 905h2v1h-2zM275 906h1v1h-1zM275 908h2v2h-2zM278 898h2v2h-2zM279 901h1v1h-1zM278 902h2v1h-2zM278 905h2v1h-2zM279 906h1v1h-1zM278 908h2v2h-2zM283 898h2v2h-2zM283 901h2v2h-2zM283 905h2v1h-2zM283 906h1v1h-1zM283 908h2v2h-2zM286 898h2v2h-2zM287 901h1v1h-1zM286 902h2v1h-2zM286 905h2v1h-2zM287 906h1v1h-1zM286 908h2v2h-2zM291 898h2v2h-2zM291 901h2v2h-2zM291 905h2v1h-2zM291 906h1v1h-1zM291 908h2v2h-2zM294 898h2v2h-2zM295 901h1v1h-1zM294 902h2v1h-2zM294 905h2v1h-2zM295 906h1v1h-1zM294 908h2v2h-2zM299 898h2v2h-2zM299 901h2v2h-2zM299 905h2v1h-2zM299 906h1v1h-1zM299 908h2v2h-2zM302 898h2v2h-2zM303 901h1v1h-1zM302 902h2v1h-2zM302 905h2v1h-2zM303 906h1v1h-1zM302 908h2v2h-2zM307 898h2v2h-2zM307 901h2v2h-2zM307 905h2v1h-2zM307 906h1v1h-1zM307 908h2v2h-2zM310 898h2v2h-2zM311 901h1v1h-1zM310 902h2v1h-2zM310 905h2v1h-2zM311 906h1v1h-1zM310 908h2v2h-2zM315 898h2v2h-2zM315 901h2v2h-2zM315 905h2v1h-2zM315 906h1v1h-1zM315 908h2v2h-2zM318 898h2v2h-2zM319 901h1v1h-1zM318 902h2v1h-2zM318 905h2v1h-2zM319 906h1v1h-1zM318 908h2v2h-2zM323 898h2v2h-2zM323 901h2v2h-2zM323 905h2v1h-2zM323 906h1v1h-1zM323 908h2v2h-2zM326 898h2v2h-2zM327 901h1v1h-1zM326 902h2v1h-2zM326 905h2v1h-2zM327 906h1v1h-1zM326 908h2v2h-2zM331 898h2v2h-2zM331 901h2v2h-2zM331 905h2v1h-2zM331 906h1v1h-1zM331 908h2v2h-2zM334 898h2v2h-2zM335 901h1v1h-1zM334 902h2v1h-2zM334 905h2v1h-2zM335 906h1v1h-1zM334 908h2v2h-2zM339 898h2v2h-2zM339 901h2v2h-2zM339 905h2v1h-2zM339 906h1v1h-1zM339 908h2v2h-2zM342 898h2v2h-2zM343 901h1v1h-1zM342 902h2v1h-2zM342 905h2v1h-2zM343 906h1v1h-1zM342 908h2v2h-2zM347 898h2v2h-2zM347 901h2v2h-2zM347 905h2v1h-2zM347 906h1v1h-1zM347 908h2v2h-2zM350 898h2v2h-2zM351 901h1v1h-1zM350 902h2v1h-2zM350 905h2v1h-2zM351 906h1v1h-1zM350 908h2v2h-2zM355 898h2v2h-2zM355 901h2v2h-2zM355 905h2v1h-2zM355 906h1v1h-1zM355 908h2v2h-2zM358 898h2v2h-2zM359 901h1v1h-1zM358 902h2v1h-2zM358 905h2v1h-2zM359 906h1v1h-1zM358 908h2v2h-2zM363 898h2v2h-2zM363 901h2v2h-2zM363 905h2v1h-2zM363 906h1v1h-1zM363 908h2v2h-2zM366 898h2v2h-2zM367 901h1v1h-1zM366 902h2v1h-2zM366 905h2v1h-2zM367 906h1v1h-1zM366 908h2v2h-2zM371 898h2v2h-2zM371 901h2v2h-2zM371 905h2v1h-2zM371 906h1v1h-1zM371 908h2v2h-2zM374 898h2v2h-2zM375 901h1v1h-1zM374 902h2v1h-2zM374 905h2v1h-2zM375 906h1v1h-1zM374 908h2v2h-2zM379 898h2v2h-2zM379 901h2v2h-2zM379 905h2v1h-2zM379 906h1v1h-1zM379 908h2v2h-2zM382 898h2v2h-2zM383 901h1v1h-1zM382 902h2v1h-2zM382 905h2v1h-2zM383 906h1v1h-1zM382 908h2v2h-2zM387 898h2v2h-2zM387 901h2v2h-2zM387 905h2v1h-2zM387 906h1v1h-1zM387 908h2v2h-2zM390 898h2v2h-2zM391 901h1v1h-1zM390 902h2v1h-2zM390 905h2v1h-2zM391 906h1v1h-1zM390 908h2v2h-2zM395 898h2v2h-2zM395 901h2v2h-2zM395 905h2v1h-2zM395 906h1v1h-1zM395 908h2v2h-2zM398 898h2v2h-2zM399 901h1v1h-1zM398 902h2v1h-2zM398 905h2v1h-2zM399 906h1v1h-1zM398 908h2v2h-2zM403 898h2v2h-2zM403 901h2v2h-2zM403 905h2v1h-2zM403 906h1v1h-1zM403 908h2v2h-2zM406 898h2v2h-2zM407 901h1v1h-1zM406 902h2v1h-2zM406 905h2v1h-2zM407 906h1v1h-1zM406 908h2v2h-2zM411 898h2v2h-2zM411 901h2v2h-2zM411 905h2v1h-2zM411 906h1v1h-1zM411 908h2v2h-2zM414 898h2v2h-2zM415 901h1v1h-1zM414 902h2v1h-2zM414 905h2v1h-2zM415 906h1v1h-1zM414 908h2v2h-2zM419 898h2v2h-2zM419 901h2v2h-2zM419 905h2v1h-2zM419 906h1v1h-1zM419 908h2v2h-2zM422 898h2v2h-2zM423 901h1v1h-1zM422 902h2v1h-2zM422 905h2v1h-2zM423 906h1v1h-1zM422 908h2v2h-2zM427 898h2v2h-2zM427 901h2v2h-2zM427 905h2v1h-2zM427 906h1v1h-1zM427 908h2v2h-2zM430 898h2v2h-2zM431 901h1v1h-1zM430 902h2v1h-2zM430 905h2v1h-2zM431 906h1v1h-1zM430 908h2v2h-2zM435 898h2v2h-2zM435 901h2v2h-2zM435 905h2v1h-2zM435 906h1v1h-1zM435 908h2v2h-2zM438 898h2v2h-2zM439 901h1v1h-1zM438 902h2v1h-2zM438 905h2v1h-2zM439 906h1v1h-1zM438 908h2v2h-2zM443 898h2v2h-2zM443 901h2v2h-2zM443 905h2v1h-2zM443 906h1v1h-1zM443 908h2v2h-2zM446 898h2v2h-2zM447 901h1v1h-1zM446 902h2v1h-2zM446 905h2v1h-2zM447 906h1v1h-1zM446 908h2v2h-2zM451 898h2v2h-2zM451 901h2v2h-2zM451 905h2v1h-2zM451 906h1v1h-1zM451 908h2v2h-2zM454 898h2v2h-2zM455 901h1v1h-1zM454 902h2v1h-2zM454 905h2v1h-2zM455 906h1v1h-1zM454 908h2v2h-2zM459 898h2v2h-2zM459 901h2v2h-2zM459 905h2v1h-2zM459 906h1v1h-1zM459 908h2v2h-2zM462 898h2v2h-2zM463 901h1v1h-1zM462 902h2v1h-2zM462 905h2v1h-2zM463 906h1v1h-1zM462 908h2v2h-2zM467 898h2v2h-2zM467 901h2v2h-2zM467 905h2v1h-2zM467 906h1v1h-1zM467 908h2v2h-2zM470 898h2v2h-2zM471 901h1v1h-1zM470 902h2v1h-2zM470 905h2v1h-2zM471 906h1v1h-1zM470 908h2v2h-2zM475 898h2v2h-2zM475 901h2v2h-2zM475 905h2v1h-2zM475 906h1v1h-1zM475 908h2v2h-2zM478 898h2v2h-2zM479 901h1v1h-1zM478 902h2v1h-2zM478 905h2v1h-2zM479 906h1v1h-1zM478 908h2v2h-2zM483 898h2v2h-2zM483 901h2v2h-2zM483 905h2v1h-2zM483 906h1v1h-1zM483 908h2v2h-2zM486 898h2v2h-2zM487 901h1v1h-1zM486 902h2v1h-2zM486 905h2v1h-2zM487 906h1v1h-1zM486 908h2v2h-2zM491 898h2v2h-2zM491 901h2v2h-2zM491 905h2v1h-2zM491 906h1v1h-1zM491 908h2v2h-2zM494 898h2v2h-2zM495 901h1v1h-1zM494 902h2v1h-2zM494 905h2v1h-2zM495 906h1v1h-1zM494 908h2v2h-2zM499 898h2v2h-2zM499 901h2v2h-2zM499 905h2v1h-2zM499 906h1v1h-1zM499 908h2v2h-2zM502 898h2v2h-2zM503 901h1v1h-1zM502 902h2v1h-2zM502 905h2v1h-2zM503 906h1v1h-1zM502 908h2v2h-2zM507 898h2v2h-2zM507 901h2v2h-2zM507 905h2v1h-2zM507 906h1v1h-1zM507 908h2v2h-2zM510 898h2v2h-2zM511 901h1v1h-1zM510 902h2v1h-2zM510 905h2v1h-2zM511 906h1v1h-1zM510 908h2v2h-2zM515 898h2v2h-2zM515 901h2v2h-2zM515 905h2v1h-2zM515 906h1v1h-1zM515 908h2v2h-2zM518 898h2v2h-2zM519 901h1v1h-1zM518 902h2v1h-2zM518 905h2v1h-2zM519 906h1v1h-1zM518 908h2v2h-2zM523 898h2v2h-2zM523 901h2v2h-2zM523 905h2v1h-2zM523 906h1v1h-1zM523 908h2v2h-2zM526 898h2v2h-2zM527 901h1v1h-1zM526 902h2v1h-2zM526 905h2v1h-2zM527 906h1v1h-1zM526 908h2v2h-2zM531 898h2v2h-2zM531 901h2v2h-2zM531 905h2v1h-2zM531 906h1v1h-1zM531 908h2v2h-2zM534 898h2v2h-2zM535 901h1v1h-1zM534 902h2v1h-2zM534 905h2v1h-2zM535 906h1v1h-1zM534 908h2v2h-2z"/>
<path fill="#a665a6" d="M203 914h2v2h-2zM203 917h2v2h-2zM203 921h2v1h-2zM203 922h1v1h-1zM203 924h2v2h-2zM206 914h2v2h-2zM207 917h1v1h-1zM206 918h2v1h-2zM206 921h2v1h-2zM207 922h1v1h-1zM206 924h2v2h-2zM211 914h2v2h-2zM211 917h2v2h-2zM211 921h2v1h-2zM211 922h1v1h-1zM211 924h2v2h-2zM214 914h2v2h-2zM215 917h1v1h-1zM214 918h2v1h-2zM214 921h2v1h-2zM215 922h1v1h-1zM219 914h2v2h-2zM222 914h2v2h-2zM223 917h1v1h-1zM222 918h2v1h-2zM222 921h2v1h-2zM223 922h1v1h-1zM222 924h2v2h-2zM227 914h2v2h-2zM230 914h2v2h-2zM231 917h1v1h-1zM230 918h2v1h-2zM230 921h2v1h-2zM231 922h1v1h-1zM230 924h2v2h-2zM235 914h2v2h-2zM238 914h2v2h-2zM239 917h1v1h-1zM238 918h2v1h-2zM238 921h2v1h-2zM239 922h1v1h-1zM238 924h2v2h-2zM243 914h2v2h-2zM243 917h2v2h-2zM246 914h2v2h-2zM251 914h2v2h-2zM254 914h2v2h-2zM255 917h1v1h-1zM254 918h2v1h-2zM254 921h2v1h-2zM255 922h1v1h-1zM254 924h2v2h-2zM259 914h2v2h-2zM262 914h2v2h-2zM267 914h2v2h-2zM270 914h2v2h-2zM271 917h1v1h-1zM270 918h2v1h-2zM275 914h2v2h-2zM275 917h2v2h-2zM278 914h2v2h-2zM279 917h1v1h-1zM278 918h2v1h-2zM283 914h2v2h-2zM286 914h2v2h-2zM287 917h1v1h-1zM286 918h2v1h-2zM286 921h2v1h-2zM287 922h1v1h-1zM286 924h2v2h-2zM291 914h2v2h-2zM291 917h2v2h-2zM291 921h2v1h-2zM291 922h1v1h-1zM291 924h2v2h-2zM294 914h2v2h-2zM299 914h2v2h-2zM302 914h2v2h-2zM303 917h1v1h-1zM302 918h2v1h-2zM302 921h2v1h-2zM303 922h1v1h-1zM302 924h2v2h-2zM307 914h2v2h-2zM307 917h2v2h-2zM307 921h2v1h-2zM307 922h1v1h-1zM307 924h2v2h-2zM310 914h2v2h-2zM311 917h1v1h-1zM310 918h2v1h-2zM310 921h2v1h-2zM311 922h1v1h-1zM310 924h2v2h-2zM315 914h2v2h-2zM315 917h2v2h-2zM318 914h2v2h-2zM319 917h1v1h-1zM318 918h2v1h-2zM318 921h2v1h-2zM319 922h1v1h-1zM318 924h2v2h-2zM323 914h2v2h-2zM323 917h2v2h-2zM326 914h2v2h-2zM327 917h1v1h-1zM326 918h2v1h-2zM331 914h2v2h-2zM331 917h2v2h-2zM334 914h2v2h-2zM335 917h1v1h-1zM334 918h2v1h-2zM339 914h2v2h-2zM339 917h2v2h-2zM339 921h2v1h-2zM339 922h1v1h-1zM339 924h2v2h-2zM342 914h2v2h-2zM343 917h1v1h-1zM342 918h2v1h-2zM342 921h2v1h-2zM343 922h1v1h-1zM342 924h2v2h-2zM347 914h2v2h-2zM347 917h2v2h-2zM347 921h2v1h-2zM347 922h1v1h-1zM347 924h2v2h-2zM350 914h2v2h-2zM351 917h1v1h-1zM350 918h2v1h-2zM350 921h2v1h-2zM351 922h1v1h-1zM350 924h2v2h-2zM355 914h2v2h-2zM355 917h2v2h-2zM358 914h2v2h-2zM359 917h1v1h-1zM358 918h2v1h-2zM358 921h2v1h-2zM359 922h1v1h-1zM358 924h2v2h-2zM363 914h2v2h-2zM363 917h2v2h-2zM363 921h2v1h-2zM363 922h1v1h-1zM363 924h2v2h-2zM366 914h2v2h-2zM367 917h1v1h-1zM366 918h2v1h-2zM366 921h2v1h-2zM367 922h1v1h-1zM371 914h2v2h-2zM371 917h2v2h-2zM371 921h2v1h-2zM371 922h1v1h-1zM374 914h2v2h-2zM375 917h1v1h-1zM374 918h2v1h-2zM374 921h2v1h-2zM375 922h1v1h-1zM379 914h2v2h-2zM379 917h2v2h-2zM379 921h2v1h-2zM379 922h1v1h-1zM382 914h2v2h-2zM383 917h1v1h-1zM382 918h2v1h-2zM387 914h2v2h-2zM390 914h2v2h-2zM391 917h1v1h-1zM390 918h2v1h-2zM390 921h2v1h-2zM391 922h1v1h-1zM390 924h2v2h-2zM395 914h2v2h-2zM395 917h2v2h-2zM395 921h2v1h-2zM395 922h1v1h-1zM395 924h2v2h-2zM398 914h2v2h-2zM399 917h1v1h-1zM398 918h2v1h-2zM398 921h2v1h-2zM399 922h1v1h-1zM398 924h2v2h-2zM403 914h2v2h-2zM403 917h2v2h-2zM403 921h2v1h-2zM403 922h1v1h-1zM406 914h2v2h-2zM411 914h2v2h-2zM414 914h2v2h-2zM415 917h1v1h-1zM414 918h2v1h-2zM414 921h2v1h-2zM415 922h1v1h-1zM419 914h2v2h-2zM419 917h2v2h-2zM422 914h2v2h-2zM423 917h1v1h-1zM422 918h2v1h-2zM427 914h2v2h-2zM427 917h2v2h-2zM430 914h2v2h-2zM431 917h1v1h-1zM430 918h2v1h-2zM430 921h2v1h-2zM431 922h1v1h-1zM435 914h2v2h-2zM435 917h2v2h-2zM438 914h2v2h-2zM439 917h1v1h-1zM438 918h2v1h-2zM438 921h2v1h-2zM439 922h1v1h-1zM438 924h2v2h-2zM443 914h2v2h-2zM443 917h2v2h-2zM443 921h2v1h-2zM443 922h1v1h-1zM443 924h2v2h-2zM446 914h2v2h-2zM447 917h1v1h-1zM446 918h2v1h-2zM451 914h2v2h-2zM451 917h2v2h-2zM454 914h2v2h-2zM455 917h1v1h-1zM454 918h2v1h-2zM454 921h2v1h-2zM455 922h1v1h-1zM454 924h2v2h-2zM459 914h2v2h-2zM459 917h2v2h-2zM459 921h2v1h-2zM459 922h1v1h-1zM462 914h2v2h-2zM463 917h1v1h-1zM462 918h2v1h-2zM467 914h2v2h-2zM467 917h2v2h-2zM467 921h2v1h-2zM467 922h1v1h-1zM467 924h2v2h-2zM470 914h2v2h-2zM471 917h1v1h-1zM470 918h2v1h-2zM470 921h2v1h-2zM471 922h1v1h-1zM470 924h2v2h-2zM475 914h2v2h-2zM475 917h2v2h-2zM475 921h2v1h-2zM475 922h1v1h-1zM475 924h2v2h-2zM478 914h2v2h-2zM479 917h1v1h-1zM478 918h2v1h-2zM478 921h2v1h-2zM479 922h1v1h-1zM478 924h2v2h-2zM483 914h2v2h-2zM483 917h2v2h-2zM483 921h2v1h-2zM483 922h1v1h-1zM483 924h2v2h-2zM486 914h2v2h-2zM487 917h1v1h-1zM486 918h2v1h-2zM486 921h2v1h-2zM487 922h1v1h-1zM491 914h2v2h-2zM491 917h2v2h-2zM491 921h2v1h-2zM491 922h1v1h-1zM494 914h2v2h-2zM499 914h2v2h-2zM499 917h2v2h-2zM499 921h2v1h-2zM499 922h1v1h-1zM499 924h2v2h-2zM502 914h2v2h-2zM503 917h1v1h-1zM502 918h2v1h-2zM502 921h2v1h-2zM503 922h1v1h-1zM507 914h2v2h-2zM507 917h2v2h-2zM510 914h2v2h-2zM511 917h1v1h-1zM510 918h2v1h-2zM510 921h2v1h-2zM511 922h1v1h-1zM510 924h2v2h-2zM515 914h2v2h-2zM515 917h2v2h-2zM515 921h2v1h-2zM515 922h1v1h-1zM515 924h2v2h-2zM518 914h2v2h-2zM519 917h1v1h-1zM518 918h2v1h-2zM518 921h2v1h-2zM519 922h1v1h-1zM518 924h2v2h-2zM523 914h2v2h-2zM523 917h2v2h-2zM523 921h2v1h-2zM523 922h1v1h-1zM523 924h2v2h-2zM526 914h2v2h-2zM527 917h1v1h-1zM526 918h2v1h-2zM526 921h2v1h-2zM527 922h1v1h-1zM526 924h2v2h-2zM531 914h2v2h-2zM531 917h2v2h-2zM534 914h2v2h-2zM535 917h1v1h-1zM534 918h2v1h-2z"/>
<path fill="#be85be" d="M203 930h2v2h-2zM203 933h2v2h-2zM203 937h2v1h-2zM203 938h1v1h-1zM203 940h2v2h-2zM206 930h2v2h-2zM207 933h1v1h-1zM206 934h2v1h-2zM206 937h2v1h-2zM207 938h1v1h-1zM206 940h2v2h-2zM211 930h2v2h-2zM211 933h2v2h-2zM211 937h2v1h-2zM211 938h1v1h-1zM211 940h2v2h-2zM230 930h2v2h-2zM231 933h1v1h-1zM230 934h2v1h-2zM230 937h2v1h-2zM231 938h1v1h-1zM230 940h2v2h-2zM238 930h2v2h-2zM239 933h1v1h-1zM238 934h2v1h-2zM238 937h2v1h-2zM239 938h1v1h-1zM238 940h2v2h-2zM254 930h2v2h-2zM255 933h1v1h-1zM254 934h2v1h-2zM254 937h2v1h-2zM255 938h1v1h-1zM254 940h2v2h-2zM291 930h2v2h-2zM302 930h2v2h-2zM303 933h1v1h-1zM302 934h2v1h-2zM302 937h2v1h-2zM303 938h1v1h-1zM302 940h2v2h-2zM307 930h2v2h-2zM307 933h2v2h-2zM307 937h2v1h-2zM307 938h1v1h-1zM307 940h2v2h-2zM310 930h2v2h-2zM311 933h1v1h-1zM310 934h2v1h-2zM310 937h2v1h-2zM311 938h1v1h-1zM339 930h2v2h-2zM342 930h2v2h-2zM347 930h2v2h-2zM347 933h2v2h-2zM347 937h2v1h-2zM347 938h1v1h-1zM350 930h2v2h-2zM351 933h1v1h-1zM350 934h2v1h-2zM438 930h2v2h-2zM454 930h2v2h-2zM467 930h2v2h-2zM467 933h2v2h-2zM470 930h2v2h-2zM471 933h1v1h-1zM470 934h2v1h-2zM475 930h2v2h-2zM475 933h2v2h-2zM475 937h2v1h-2zM475 938h1v1h-1zM475 940h2v2h-2zM478 930h2v2h-2zM479 933h1v1h-1zM478 934h2v1h-2zM478 937h2v1h-2zM479 938h1v1h-1zM499 930h2v2h-2zM523 930h2v2h-2zM523 933h2v2h-2zM526 930h2v2h-2zM527 933h1v1h-1zM526 934h2v1h-2z"/>
<path fill="#d6a2d6" d="M203 946h2v2h-2zM203 949h2v2h-2zM203 953h2v1h-2zM203 954h1v1h-1zM203 956h2v2h-2zM206 946h2v2h-2zM207 949h1v1h-1zM206 950h2v1h-2zM206 953h2v1h-2zM207 954h1v1h-1zM206 956h2v2h-2zM211 946h2v2h-2zM211 949h2v2h-2zM211 953h2v1h-2zM211 954h1v1h-1zM211 956h2v2h-2zM230 946h2v2h-2zM231 949h1v1h-1zM230 950h2v1h-2zM230 953h2v1h-2zM231 954h1v1h-1zM230 956h2v2h-2zM238 946h2v2h-2zM239 949h1v1h-1zM238 950h2v1h-2zM238 953h2v1h-2zM239 954h1v1h-1zM238 956h2v2h-2zM254 946h2v2h-2zM255 949h1v1h-1zM254 950h2v1h-2zM254 953h2v1h-2zM255 954h1v1h-1zM254 956h2v2h-2zM302 946h2v2h-2zM303 949h1v1h-1zM302 950h2v1h-2zM302 953h2v1h-2zM303 954h1v1h-1zM302 956h2v2h-2zM307 946h2v2h-2zM307 949h2v2h-2zM307 953h2v1h-2zM307 954h1v1h-1zM307 956h2v2h-2z"/>
<path fill="#e8bce8" d="M203 962h2v2h-2zM203 965h2v2h-2zM206 962h2v2h-2zM207 965h1v1h-1zM206 966h2v1h-2zM211 962h2v2h-2zM211 965h2v2h-2zM211 969h2v1h-2zM211 970h1v1h-1zM211 972h2v2h-2zM230 962h2v2h-2zM231 965h1v1h-1zM230 966h2v1h-2zM230 969h2v1h-2zM231 970h1v1h-1zM230 972h2v2h-2zM238 962h2v2h-2zM239 965h1v1h-1zM238 966h2v1h-2zM238 969h2v1h-2zM239 970h1v1h-1zM238 972h2v2h-2zM254 962h2v2h-2zM255 965h1v1h-1zM254 966h2v1h-2zM254 969h2v1h-2zM255 970h1v1h-1zM254 972h2v2h-2zM302 962h2v2h-2zM303 965h1v1h-1zM302 966h2v1h-2zM302 969h2v1h-2zM303 970h1v1h-1zM302 972h2v2h-2zM307 962h2v2h-2zM307 965h2v2h-2zM307 969h2v1h-2zM307 970h1v1h-1zM307 972h2v2h-2z"/>
<path fill="#f4d4f4" d="M211 978h2v2h-2zM211 981h2v2h-2zM211 985h2v1h-2zM211 986h1v1h-1zM211 988h2v2h-2zM230 978h2v2h-2zM231 981h1v1h-1zM230 982h2v1h-2zM230 985h2v1h-2zM231 986h1v1h-1zM230 988h2v2h-2zM238 978h2v2h-2zM239 981h1v1h-1zM238 982h2v1h-2zM238 985h2v1h-2zM239 986h1v1h-1zM238 988h2v2h-2zM254 978h2v2h-2zM255 981h1v1h-1zM254 982h2v1h-2zM254 985h2v1h-2zM255 986h1v1h-1zM254 988h2v2h-2zM302 978h2v2h-2zM303 981h1v1h-1zM302 982h2v1h-2zM302 985h2v1h-2zM303 986h1v1h-1zM302 988h2v2h-2zM307 978h2v2h-2zM307 981h2v2h-2zM307 985h2v1h-2zM307 986h1v1h-1zM307 988h2v2h-2z"/>
<path fill="#805252" d="M766 360h1v6h-1zM767 359h2v1h-2zM769 358h2v1h-2zM769 359h8v1h-8zM777 359h4v1h-4zM780 360h1v7h-1zM828 359h5v1h-5zM828 360h1v7h-1zM833 359h4v1h-4zM836 360h1v7h-1zM940 359h5v1h-5zM940 360h1v7h-1zM945 359h400v1h-400zM1345 359h4v1h-4zM1348 360h1v7h-1zM1420 359h5v1h-5zM1420 360h1v7h-1zM1425 359h4v1h-4zM1428 360h1v7h-1zM1492 359h5v1h-5zM1492 360h1v7h-1zM1497 359h4v1h-4zM1500 360h1v7h-1zM1540 359h5v1h-5zM1540 360h1v7h-1zM1545 359h4v1h-4zM1548 360h1v7h-1zM1652 359h5v1h-5zM1652 360h1v7h-1zM1657 359h8v1h-8zM1665 358h2v1h-2zM1667 359h2v1h-2zM1669 360h1v6h-1zM764 367h1v624h-1zM1668 367h1v624h-1zM766 991h1v6h-1zM767 997h1v1h-1zM768 998h3v1h-3zM772 991h1v8h-1zM769 999h4v1h-4zM860 991h1v8h-1zM860 999h5v1h-5zM868 991h1v8h-1zM865 999h4v1h-4zM924 991h1v8h-1zM924 999h5v1h-5zM932 991h1v8h-1zM929 999h4v1h-4zM1012 991h1v8h-1zM1012 999h5v1h-5zM1020 991h1v8h-1zM1017 999h4v1h-4zM1060 991h1v8h-1zM1060 999h5v1h-5zM1068 991h1v8h-1zM1065 999h4v1h-4zM1132 991h1v8h-1zM1132 999h5v1h-5zM1137 999h480v1h-480zM1620 991h1v8h-1zM1617 999h4v1h-4zM1660 991h1v8h-1zM1660 999h5v1h-5zM1669 991h1v6h-1zM1668 997h1v1h-1zM1665 998h3v1h-3z"/>
<path fill="#c04444" d="M785 355h7v1h-7zM785 362h7v1h-7zM785 356h1v6h-1zM791 356h1v6h-1zM929 355h7v1h-7zM929 362h7v1h-7zM929 356h1v6h-1zM935 356h1v6h-1z"/>
<path fill="#ffffff" d="M913 351h8v16h-8z"/>
<path fill="#484848" d="M913 995h7v1h-7zM913 1002h7v1h-7zM913 996h1v6h-1zM919 996h1v6h-1z"/>
<path fill="#404040" d="M1571 396h2v2h-2zM1574 396h2v2h-2zM1579 396h2v2h-2zM1582 396h2v2h-2zM1587 396h2v2h-2zM1590 396h2v2h-2zM1595 396h2v2h-2zM1598 396h2v2h-2zM1603 396h2v2h-2zM1606 396h2v2h-2zM1571 412h2v2h-2zM1574 412h2v2h-2zM1579 412h2v2h-2zM1582 412h2v2h-2zM1587 412h2v2h-2zM1590 412h2v2h-2zM1595 412h2v2h-2zM1598 412h2v2h-2zM1603 412h2v2h-2zM1606 412h2v2h-2zM1571 428h2v2h-2zM1574 428h2v2h-2zM1579 428h2v2h-2zM1582 428h2v2h-2zM1587 428h2v2h-2zM1590 428h2v2h-2zM1595 428h2v2h-2zM1598 428h2v2h-2zM1603 428h2v2h-2zM1606 428h2v2h-2zM1571 444h2v2h-2zM1574 444h2v2h-2zM1579 444h2v2h-2zM1582 444h2v2h-2zM1587 444h2v2h-2zM1590 444h2v2h-2zM1595 444h2v2h-2zM1598 444h2v2h-2zM1603 444h2v2h-2zM1606 444h2v2h-2zM1571 460h2v2h-2zM1574 460h2v2h-2zM1579 460h2v2h-2zM1582 460h2v2h-2zM1587 460h2v2h-2zM1590 460h2v2h-2zM1595 460h2v2h-2zM1598 460h2v2h-2zM1603 460h2v2h-2zM1606 460h2v2h-2zM1571 476h2v2h-2zM1574 476h2v2h-2zM1579 476h2v2h-2zM1582 476h2v2h-2zM1587 476h2v2h-2zM1590 476h2v2h-2zM1595 476h2v2h-2zM1598 476h2v2h-2zM1603 476h2v2h-2zM1606 476h2v2h-2zM1571 492h2v2h-2zM1574 492h2v2h-2zM1579 492h2v2h-2zM1582 492h2v2h-2zM1587 492h2v2h-2zM1590 492h2v2h-2zM1595 492h2v2h-2zM1598 492h2v2h-2zM1603 492h2v2h-2zM1606 492h2v2h-2zM1571 508h2v2h-2zM1574 508h2v2h-2zM1579 508h2v2h-2zM1582 508h2v2h-2zM1587 508h2v2h-2zM1590 508h2v2h-2zM1595 508h2v2h-2zM1598 508h2v2h-2zM1603 508h2v2h-2zM1606 508h2v2h-2zM1571 524h2v2h-2zM1574 524h2v2h-2zM1579 524h2v2h-2zM1582 524h2v2h-2zM1587 524h2v2h-2zM1590 524h2v2h-2zM1595 524h2v2h-2zM1598 524h2v2h-2zM1603 524h2v2h-2zM1606 524h2v2h-2zM1571 540h2v2h-2zM1574 540h2v2h-2zM1579 540h2v2h-2zM1582 540h2v2h-2zM1587 540h2v2h-2zM1590 540h2v2h-2zM1595 540h2v2h-2zM1598 540h2v2h-2zM1603 540h2v2h-2zM1606 540h2v2h-2zM1571 556h2v2h-2zM1574 556h2v2h-2zM1579 556h2v2h-2zM1582 556h2v2h-2zM1587 556h2v2h-2zM1590 556h2v2h-2zM1595 556h2v2h-2zM1598 556h2v2h-2zM1603 556h2v2h-2zM1606 556h2v2h-2zM1571 572h2v2h-2zM1574 572h2v2h-2zM1579 572h2v2h-2zM1582 572h2v2h-2zM1587 572h2v2h-2zM1590 572h2v2h-2zM1595 572h2v2h-2zM1598 572h2v2h-2zM1603 572h2v2h-2zM1606 572h2v2h-2zM1571 588h2v2h-2zM1574 588h2v2h-2zM1579 588h2v2h-2zM1582 588h2v2h-2zM1587 588h2v2h-2zM1590 588h2v2h-2zM1595 588h2v2h-2zM1598 588h2v2h-2zM1603 588h2v2h-2zM1606 588h2v2h-2zM1571 604h2v2h-2zM1574 604h2v2h-2zM1579 604h2v2h-2zM1582 604h2v2h-2zM1587 604h2v2h-2zM1590 604h2v2h-2zM1595 604h2v2h-2zM1598 604h2v2h-2zM1603 604h2v2h-2zM1606 604h2v2h-2zM1571 620h2v2h-2zM1574 620h2v2h-2zM1579 620h2v2h-2zM1582 620h2v2h-2zM1587 620h2v2h-2zM1590 620h2v2h-2zM1595 620h2v2h-2zM1598 620h2v2h-2zM1603 620h2v2h-2zM1606 620h2v2h-2zM1571 636h2v2h-2zM1574 636h2v2h-2zM1579 636h2v2h-2zM1582 636h2v2h-2zM1587 636h2v2h-2zM1590 636h2v2h-2zM1595 636h2v2h-2zM1598 636h2v2h-2zM1603 636h2v2h-2zM1606 636h2v2h-2zM1571 652h2v2h-2zM1574 652h2v2h-2zM1579 652h2v2h-2zM1582 652h2v2h-2zM1587 652h2v2h-2zM1590 652h2v2h-2zM1595 652h2v2h-2zM1598 652h2v2h-2zM1603 652h2v2h-2zM1606 652h2v2h-2zM1571 668h2v2h-2zM1574 668h2v2h-2zM1579 668h2v2h-2zM1582 668h2v2h-2zM1587 668h2v2h-2zM1590 668h2v2h-2zM1595 668h2v2h-2zM1598 668h2v2h-2zM1603 668h2v2h-2zM1606 668h2v2h-2zM1571 684h2v2h-2zM1574 684h2v2h-2zM1579 684h2v2h-2zM1582 684h2v2h-2zM1587 684h2v2h-2zM1590 684h2v2h-2zM1595 684h2v2h-2zM1598 684h2v2h-2zM1603 684h2v2h-2zM1606 684h2v2h-2zM1571 700h2v2h-2zM1574 700h2v2h-2zM1579 700h2v2h-2zM1582 700h2v2h-2zM1587 700h2v2h-2zM1590 700h2v2h-2zM1595 700h2v2h-2zM1598 700h2v2h-2zM1603 700h2v2h-2zM1606 700h2v2h-2zM1571 716h2v2h-2zM1574 716h2v2h-2zM1579 716h2v2h-2zM1582 716h2v2h-2zM1587 716h2v2h-2zM1590 716h2v2h-2zM1595 716h2v2h-2zM1598 716h2v2h-2zM1603 716h2v2h-2zM1606 716h2v2h-2zM1571 732h2v2h-2zM1574 732h2v2h-2zM1579 732h2v2h-2zM1582 732h2v2h-2zM1587 732h2v2h-2zM1590 732h2v2h-2zM1595 732h2v2h-2zM1598 732h2v2h-2zM1603 732h2v2h-2zM1606 732h2v2h-2zM1571 748h2v2h-2zM1574 748h2v2h-2zM1579 748h2v2h-2zM1582 748h2v2h-2zM1587 748h2v2h-2zM1590 748h2v2h-2zM1595 748h2v2h-2zM1598 748h2v2h-2zM1603 748h2v2h-2zM1606 748h2v2h-2zM1571 764h2v2h-2zM1574 764h2v2h-2zM1579 764h2v2h-2zM1582 764h2v2h-2zM1587 764h2v2h-2zM1590 764h2v2h-2zM1595 764h2v2h-2zM1598 764h2v2h-2zM1603 764h2v2h-2zM1606 764h2v2h-2zM1571 780h2v2h-2zM1574 780h2v2h-2zM1579 780h2v2h-2zM1582 780h2v2h-2zM1587 780h2v2h-2zM1590 780h2v2h-2zM1595 780h2v2h-2zM1598 780h2v2h-2zM1603 780h2v2h-2zM1606 780h2v2h-2zM1571 796h2v2h-2zM1574 796h2v2h-2zM1579 796h2v2h-2zM1582 796h2v2h-2zM1587 796h2v2h-2zM1590 796h2v2h-2zM1595 796h2v2h-2zM1598 796h2v2h-2zM1603 796h2v2h-2zM1606 796h2v2h-2zM1571 812h2v2h-2zM1574 812h2v2h-2zM1579 812h2v2h-2zM1582 812h2v2h-2zM1587 812h2v2h-2zM1590 812h2v2h-2zM1595 812h2v2h-2zM1598 812h2v2h-2zM1603 812h2v2h-2zM1606 812h2v2h-2zM1571 828h2v2h-2zM1574 828h2v2h-2zM1579 828h2v2h-2zM1582 828h2v2h-2zM1587 828h2v2h-2zM1590 828h2v2h-2zM1595 828h2v2h-2zM1598 828h2v2h-2zM1603 828h2v2h-2zM1606 828h2v2h-2zM1571 844h2v2h-2zM1574 844h2v2h-2zM1579 844h2v2h-2zM1582 844h2v2h-2zM1587 844h2v2h-2zM1590 844h2v2h-2zM1595 844h2v2h-2zM1598 844h2v2h-2zM1603 844h2v2h-2zM1606 844h2v2h-2zM1571 860h2v2h-2zM1574 860h2v2h-2zM1579 860h2v2h-2zM1582 860h2v2h-2zM1587 860h2v2h-2zM1590 860h2v2h-2zM1595 860h2v2h-2zM1598 860h2v2h-2zM1603 860h2v2h-2zM1606 860h2v2h-2zM1571 876h2v2h-2zM1574 876h2v2h-2zM1579 876h2v2h-2zM1582 876h2v2h-2zM1587 876h2v2h-2zM1590 876h2v2h-2zM1595 876h2v2h-2zM1598 876h2v2h-2zM1603 876h2v2h-2zM1606 876h2v2h-2zM1571 892h2v2h-2zM1574 892h2v2h-2zM1579 892h2v2h-2zM1582 892h2v2h-2zM1587 892h2v2h-2zM1590 892h2v2h-2zM1595 892h2v2h-2zM1598 892h2v2h-2zM1603 892h2v2h-2zM1606 892h2v2h-2zM1571 908h2v2h-2zM1574 908h2v2h-2zM1579 908h2v2h-2zM1582 908h2v2h-2zM1587 908h2v2h-2zM1590 908h2v2h-2zM1595 908h2v2h-2zM1598 908h2v2h-2zM1603 908h2v2h-2zM1606 908h2v2h-2zM1571 924h2v2h-2zM1574 924h2v2h-2zM1579 924h2v2h-2zM1582 924h2v2h-2zM1587 924h2v2h-2zM1590 924h2v2h-2zM1595 924h2v2h-2zM1598 924h2v2h-2zM1603 924h2v2h-2zM1606 924h2v2h-2zM1571 940h2v2h-2zM1574 940h2v2h-2zM1579 940h2v2h-2zM1582 940h2v2h-2zM1587 940h2v2h-2zM1590 940h2v2h-2zM1595 940h2v2h-2zM1598 940h2v2h-2zM1603 940h2v2h-2zM1606 940h2v2h-2z"/>
</svg>
<div class="r" style="top:31px"><span class="c69 b" style="left:33px">¹</span><span class="c77 b" style="left:41px">cpu</span><span class="c69 b" style="left:97px">m</span><span class="c77 b" style="left:105px">enu</span><span class="c69 b" style="left:145px">p</span><span class="c77 b" style="left:153px">reset *</span><span class="c77 b" style="left:817px">19:47:17</span><span class="c69" style="left:1569px">-</span><span class="c77" style="left:1585px">2000ms</span><span class="c69" style="left:1641px">+</span></div>
<div class="r" style="top:127px"><span class="c77 b" style="left:1521px">E5-2680</span><span class="c77 b" style="left:1593px">2.8 GHz</span></div>
<div class="r" style="top:143px"><span class="c75" style="left:1505px">CPU</span><span class="c45" style="left:1641px">0</span><span class="c75" style="left:1649px">%</span></div>
<div class="r" style="top:159px"><span class="c75" style="left:1505px">C0</span><span class="c45" style="left:1641px">0</span><span class="c75" style="left:1649px">%</span></div>
<div class="r" style="top:175px"><span class="c75" style="left:1505px">C1</span><span class="c45" style="left:1641px">0</span><span class="c75" style="left:1649px">%</span></div>
<div class="r" style="top:191px"><span class="c75" style="left:1505px">C2</span><span class="c45" style="left:1641px">1</span><span class="c75" style="left:1649px">%</span></div>
<div class="r" style="top:207px"><span class="c75" style="left:1505px">LAV:</span><span class="c75" style="left:1545px">0.04 0.08 0.03</span></div>
<div class="r" style="top:319px"><span class="c27" style="left:25px">up 14:57:42</span></div>
<div class="r" style="top:351px"><span class="c69 b" style="left:33px">²</span><span class="c77 b" style="left:41px">mem</span><span class="c69 b" style="left:401px">d</span><span class="c77 b" style="left:409px">isks</span><span class="c69 b" style="left:721px">i</span><span class="c77 b" style="left:729px">o</span><span class="c77 b" style="left:793px">proc</span><span class="c69 b" style="left:841px">f</span><span class="c77 b" style="left:857px">php-fpm</span><span class="c77 b" style="left:1353px">per-</span><span class="c69 b" style="left:1385px">c</span><span class="c77 b" style="left:1393px">ore</span><span class="c69 b" style="left:1433px">r</span><span class="c77 b" style="left:1441px">everse</span><span class="c77 b" style="left:1505px">tre</span><span class="c69 b" style="left:1529px">e</span><span class="c69 b" style="left:1553px">&lt;</span><span class="c77 b" style="left:1569px">cpu lazy</span><span class="c69 b" style="left:1641px">&gt;</span></div>
<div class="r" style="top:367px"><span class="c77 b" style="left:25px">Total:</span><span class="c75" style="left:305px">3.83 GiB</span><span class="c77 b" style="left:393px">root</span><span class="c75" style="left:681px">19.5 GiB</span><span class="c77 b" style="left:801px">Pid:</span><span class="c77 b" style="left:841px">Program:</span><span class="c77 b" style="left:977px">Command:</span><span class="c77 b" style="left:1361px">Threads:</span><span class="c77 b" style="left:1433px">User:</span><span class="c77 b" style="left:1529px">MemB</span><span class="c77 b" style="left:1617px">Cpu%</span></div>
<div class="r" style="top:383px"><span class="c77 b" style="left:25px">Used:</span><span class="c75" style="left:305px">1.03 GiB</span><span class="c75" style="left:393px">IO%</span><span class="c76" style="left:785px">256145</span><span class="c50" style="left:841px">php-fpm</span><span class="c76" style="left:977px">php-fpm: master process (/etc/php82w/php-fpm.sasha.</span><span class="c50" style="left:1417px">1</span><span class="c76" style="left:1433px">root</span><span class="c50" style="left:1537px">86M</span><span class="c50" style="left:1625px">0.0</span></div>
<div class="r" style="top:399px"><span class="c75" style="left:33px">27%</span><span class="c75" style="left:393px">Used:</span><span class="c75" style="left:441px">88%</span><span class="c75" style="left:681px">17.2 GiB</span><span class="c74" style="left:785px">133367</span><span class="c49" style="left:841px">php-fpm</span><span class="c74" style="left:977px">php-fpm: pool brainy.conf</span><span class="c49" style="left:1417px">1</span><span class="c74" style="left:1433px">root</span><span class="c49" style="left:1537px">47M</span><span class="c49" style="left:1625px">0.0</span></div>
<div class="r" style="top:415px"><span class="c75" style="left:393px">Free:</span><span class="c75" style="left:441px">12%</span><span class="c75" style="left:681px">2.38 GiB</span><span class="c72" style="left:785px">133369</span><span class="c48" style="left:841px">php-fpm</span><span class="c72" style="left:977px">php-fpm: pool brainy.conf</span><span class="c48" style="left:1417px">1</span><span class="c72" style="left:1433px">root</span><span class="c48" style="left:1537px">46M</span><span class="c48" style="left:1625px">0.0</span></div>
<div class="r" style="top:431px"><span class="c71" style="left:785px">133370</span><span class="c46" style="left:841px">php-fpm</span><span class="c71" style="left:977px">php-fpm: pool brainy.conf</span><span class="c46" style="left:1417px">1</span><span class="c71" style="left:1433px">root</span><span class="c46" style="left:1537px">49M</span><span class="c46" style="left:1625px">0.0</span></div>
<div class="r" style="top:447px"><span class="c77 b" style="left:393px">swap</span><span class="c75" style="left:681px">1.99 GiB</span><span class="c70" style="left:785px">256093</span><span class="c44" style="left:841px">php-fpm</span><span class="c70" style="left:977px">php-fpm: master process (/etc/php74w/php-fpm.sasha.</span><span class="c44" style="left:1417px">1</span><span class="c70" style="left:1433px">root</span><span class="c44" style="left:1537px">81M</span><span class="c44" style="left:1625px">0.0</span></div>
<div class="r" style="top:463px"><span class="c77 b" style="left:25px">Available:</span><span class="c75" style="left:305px">2.79 GiB</span><span class="c75" style="left:393px">Used:</span><span class="c75" style="left:449px">4%</span><span class="c75" style="left:681px">73.5 MiB</span><span class="c68" style="left:785px">133368</span><span class="c41" style="left:841px">php-fpm</span><span class="c68" style="left:977px">php-fpm: pool brainy.conf</span><span class="c41" style="left:1417px">1</span><span class="c68" style="left:1433px">root</span><span class="c41" style="left:1537px">46M</span><span class="c41" style="left:1625px">0.0</span></div>
<div class="r" style="top:479px"><span class="c75" style="left:33px">73%</span><span class="c75" style="left:393px">Free:</span><span class="c75" style="left:441px">96%</span><span class="c75" style="left:681px">1.92 GiB</span><span class="c67" style="left:785px">133366</span><span class="c40" style="left:841px">php-fpm</span><span class="c67" style="left:977px">php-fpm: pool brainy.conf</span><span class="c40" style="left:1417px">1</span><span class="c67" style="left:1433px">root</span><span class="c40" style="left:1537px">49M</span><span class="c40" style="left:1625px">0.0</span></div>
<div class="r" style="top:495px"><span class="c66" style="left:785px">143688</span><span class="c38" style="left:841px">php-fpm</span><span class="c66" style="left:977px">php-fpm: pool brainy.conf</span><span class="c38" style="left:1417px">1</span><span class="c66" style="left:1433px">root</span><span class="c38" style="left:1537px">27M</span><span class="c38" style="left:1625px">0.0</span></div>
<div class="r" style="top:511px"><span class="c65" style="left:785px">146627</span><span class="c37" style="left:841px">php-fpm</span><span class="c65" style="left:977px">php-fpm: pool brainy.conf</span><span class="c37" style="left:1417px">1</span><span class="c65" style="left:1433px">root</span><span class="c37" style="left:1537px">27M</span><span class="c37" style="left:1625px">0.0</span></div>
<div class="r" style="top:527px"><span class="c64" style="left:785px">256316</span><span class="c36" style="left:841px">php-fpm</span><span class="c64" style="left:977px">php-fpm: master process (/etc/php84w/php-fpm.sasha.</span><span class="c36" style="left:1417px">1</span><span class="c64" style="left:1433px">root</span><span class="c36" style="left:1537px">79M</span><span class="c36" style="left:1625px">0.0</span></div>
<div class="r" style="top:543px"><span class="c77 b" style="left:25px">Cached:</span><span class="c75" style="left:305px">2.38 GiB</span><span class="c63" style="left:785px">200810</span><span class="c34" style="left:841px">php-fpm</span><span class="c63" style="left:977px">php-fpm: pool brainy.conf</span><span class="c34" style="left:1417px">1</span><span class="c63" style="left:1433px">root</span><span class="c34" style="left:1537px">52M</span><span class="c34" style="left:1625px">0.0</span></div>
<div class="r" style="top:559px"><span class="c75" style="left:33px">62%</span><span class="c62" style="left:785px">200523</span><span class="c33" style="left:841px">php-fpm</span><span class="c62" style="left:977px">php-fpm: pool brainy.conf</span><span class="c33" style="left:1417px">1</span><span class="c62" style="left:1433px">root</span><span class="c33" style="left:1537px">31M</span><span class="c33" style="left:1625px">0.0</span></div>
<div class="r" style="top:575px"><span class="c61" style="left:785px">200809</span><span class="c31" style="left:841px">php-fpm</span><span class="c61" style="left:977px">php-fpm: pool brainy.conf</span><span class="c31" style="left:1417px">1</span><span class="c61" style="left:1433px">root</span><span class="c31" style="left:1537px">29M</span><span class="c31" style="left:1625px">0.0</span></div>
<div class="r" style="top:591px"><span class="c60" style="left:785px">133364</span><span class="c30" style="left:841px">php-fpm</span><span class="c60" style="left:977px">php-fpm: master process (/usr/local/brainycp/src/co</span><span class="c30" style="left:1417px">1</span><span class="c60" style="left:1433px">root</span><span class="c30" style="left:1537px">24M</span><span class="c30" style="left:1625px">0.0</span></div>
<div class="r" style="top:607px"><span class="c59" style="left:809px">739</span><span class="c28" style="left:841px">php-fpm</span><span class="c59" style="left:977px">php-fpm: master process (/usr/local/brainycp/src/co</span><span class="c28" style="left:1417px">1</span><span class="c59" style="left:1433px">root</span><span class="c28" style="left:1537px">26M</span><span class="c28" style="left:1625px">0.0</span></div>
<div class="r" style="top:623px"><span class="c77 b" style="left:25px">Free:</span><span class="c75" style="left:313px">484 MiB</span><span class="c58" style="left:809px">974</span><span class="c26" style="left:841px">php-fpm</span><span class="c58" style="left:977px">php-fpm: pool brainy.conf</span><span class="c26" style="left:1417px">1</span><span class="c58" style="left:1433px">root</span><span class="c26" style="left:1529px">5.6M</span><span class="c26" style="left:1625px">0.0</span></div>
<div class="r" style="top:639px"><span class="c75" style="left:33px">12%</span><span class="c57" style="left:809px">975</span><span class="c25" style="left:841px">php-fpm</span><span class="c57" style="left:977px">php-fpm: pool brainy.conf</span><span class="c25" style="left:1417px">1</span><span class="c57" style="left:1433px">root</span><span class="c25" style="left:1529px">5.7M</span><span class="c25" style="left:1625px">0.0</span></div>
<div class="r" style="top:655px"><span class="c56" style="left:809px">976</span><span class="c23" style="left:841px">php-fpm</span><span class="c56" style="left:977px">php-fpm: pool brainy.conf</span><span class="c23" style="left:1417px">1</span><span class="c56" style="left:1433px">root</span><span class="c23" style="left:1529px">5.7M</span><span class="c23" style="left:1625px">0.0</span></div>
<div class="r" style="top:671px"><span class="c55" style="left:809px">977</span><span class="c21" style="left:841px">php-fpm</span><span class="c55" style="left:977px">php-fpm: pool brainy.conf</span><span class="c21" style="left:1417px">1</span><span class="c55" style="left:1433px">root</span><span class="c21" style="left:1529px">5.6M</span><span class="c21" style="left:1625px">0.0</span></div>
<div class="r" style="top:687px"><span class="c54" style="left:809px">978</span><span class="c20" style="left:841px">php-fpm</span><span class="c54" style="left:977px">php-fpm: pool brainyservice.conf</span><span class="c20" style="left:1417px">1</span><span class="c54" style="left:1433px">brainyser+</span><span class="c20" style="left:1529px">8.4M</span><span class="c20" style="left:1625px">0.0</span></div>
<div class="r" style="top:703px"><span class="c53" style="left:809px">979</span><span class="c19" style="left:841px">php-fpm</span><span class="c53" style="left:977px">php-fpm: pool brainyservice.conf</span><span class="c19" style="left:1417px">1</span><span class="c53" style="left:1433px">brainyser+</span><span class="c19" style="left:1529px">8.4M</span><span class="c19" style="left:1625px">0.0</span></div>
<div class="r" style="top:719px"><span class="c69 b" style="left:33px">³</span><span class="c77 b" style="left:41px">net</span><span class="c77 b" style="left:81px">&#x27;</span><span class="c77 b" style="left:521px">s</span><span class="c69 b" style="left:529px">y</span><span class="c77 b" style="left:537px">nc</span><span class="c69 b" style="left:569px">a</span><span class="c77 b" style="left:577px">uto</span><span class="c69 b" style="left:609px">z</span><span class="c77 b" style="left:617px">ero</span><span class="c69 b" style="left:657px">&lt;b</span><span class="c77 b" style="left:681px">eth0</span><span class="c69 b" style="left:721px">n&gt;</span><span class="c52" style="left:785px">133371</span><span class="c17" style="left:841px">php-fpm</span><span class="c52" style="left:977px">php-fpm: pool brainyservice.conf</span><span class="c17" style="left:1417px">1</span><span class="c52" style="left:1433px">brainyser+</span><span class="c17" style="left:1529px">6.4M</span><span class="c17" style="left:1625px">0.0</span></div>
<div class="r" style="top:735px"><span class="c27" style="left:17px">37K</span><span class="c51" style="left:785px">133372</span><span class="c16" style="left:841px">php-fpm</span><span class="c51" style="left:977px">php-fpm: pool brainyservice.conf</span><span class="c16" style="left:1417px">1</span><span class="c51" style="left:1433px">brainyser+</span><span class="c16" style="left:1529px">6.4M</span><span class="c16" style="left:1625px">0.0</span></div>
<div class="r" style="top:751px"><span class="c47" style="left:785px">256095</span><span class="c14" style="left:841px">php-fpm</span><span class="c47" style="left:977px">php-fpm: pool sasha-php74w.conf</span><span class="c14" style="left:1417px">1</span><span class="c14" style="left:1537px">24M</span><span class="c14" style="left:1625px">0.0</span></div>
<div class="r" style="top:767px"><span class="c42" style="left:785px">256096</span><span class="c13" style="left:841px">php-fpm</span><span class="c42" style="left:977px">php-fpm: pool sasha-php74w.conf</span><span class="c13" style="left:1417px">1</span><span class="c13" style="left:1537px">24M</span><span class="c13" style="left:1625px">0.0</span></div>
<div class="r" style="top:783px"><span class="c39" style="left:785px">256097</span><span class="c11" style="left:841px">php-fpm</span><span class="c39" style="left:977px">php-fpm: pool sasha-php74w.conf</span><span class="c11" style="left:1417px">1</span><span class="c11" style="left:1537px">24M</span><span class="c11" style="left:1625px">0.0</span></div>
<div class="r" style="top:799px"><span class="c77 b" style="left:561px">download</span><span class="c35" style="left:785px">256098</span><span class="c10" style="left:841px">php-fpm</span><span class="c35" style="left:977px">php-fpm: pool sasha-php74w.conf</span><span class="c10" style="left:1417px">1</span><span class="c10" style="left:1537px">24M</span><span class="c10" style="left:1625px">0.0</span></div>
<div class="r" style="top:815px"><span class="c73" style="left:545px">▼</span><span class="c75" style="left:561px">5.13 KiB/s</span><span class="c75" style="left:649px">(41.0 Kibps)</span><span class="c32" style="left:785px">256146</span><span class="c8" style="left:841px">php-fpm</span><span class="c32" style="left:977px">php-fpm: pool sasha-php82w.conf</span><span class="c8" style="left:1417px">1</span><span class="c8" style="left:1537px">25M</span><span class="c8" style="left:1625px">0.0</span></div>
<div class="r" style="top:831px"><span class="c73" style="left:545px">▼</span><span class="c75" style="left:561px">Top:</span><span class="c75" style="left:657px">(889 Kibps)</span><span class="c29" style="left:785px">256147</span><span class="c7" style="left:841px">php-fpm</span><span class="c29" style="left:977px">php-fpm: pool sasha-php82w.conf</span><span class="c7" style="left:1417px">1</span><span class="c7" style="left:1537px">25M</span><span class="c7" style="left:1625px">0.0</span></div>
<div class="r" style="top:847px"><span class="c73" style="left:545px">▼</span><span class="c75" style="left:561px">Total:</span><span class="c75" style="left:681px">1019 MiB</span><span class="c24" style="left:785px">256148</span><span class="c6" style="left:841px">php-fpm</span><span class="c24" style="left:977px">php-fpm: pool sasha-php82w.conf</span><span class="c6" style="left:1417px">1</span><span class="c6" style="left:1537px">25M</span><span class="c6" style="left:1625px">0.0</span></div>
<div class="r" style="top:863px"><span class="c22" style="left:785px">256149</span><span class="c5" style="left:841px">php-fpm</span><span class="c22" style="left:977px">php-fpm: pool sasha-php82w.conf</span><span class="c5" style="left:1417px">1</span><span class="c5" style="left:1537px">25M</span><span class="c5" style="left:1625px">0.0</span></div>
<div class="r" style="top:879px"><span class="c73" style="left:545px">▲</span><span class="c75" style="left:561px">15.2 KiB/s</span><span class="c75" style="left:657px">(122 Kibps)</span><span class="c18" style="left:785px">256467</span><span class="c4" style="left:841px">php-fpm</span><span class="c18" style="left:977px">php-fpm: pool sasha-php84w.conf</span><span class="c4" style="left:1417px">1</span><span class="c4" style="left:1537px">26M</span><span class="c4" style="left:1625px">0.0</span></div>
<div class="r" style="top:895px"><span class="c73" style="left:545px">▲</span><span class="c75" style="left:561px">Top:</span><span class="c75" style="left:657px">(413 Kibps)</span><span class="c15" style="left:785px">256468</span><span class="c3" style="left:841px">php-fpm</span><span class="c15" style="left:977px">php-fpm: pool sasha-php84w.conf</span><span class="c3" style="left:1417px">1</span><span class="c3" style="left:1537px">26M</span><span class="c3" style="left:1625px">0.0</span></div>
<div class="r" style="top:911px"><span class="c73" style="left:545px">▲</span><span class="c75" style="left:561px">Total:</span><span class="c75" style="left:681px">83.3 MiB</span><span class="c12" style="left:785px">256469</span><span class="c2" style="left:841px">php-fpm</span><span class="c12" style="left:977px">php-fpm: pool sasha-php84w.conf</span><span class="c2" style="left:1417px">1</span><span class="c2" style="left:1537px">26M</span><span class="c2" style="left:1625px">0.0</span></div>
<div class="r" style="top:927px"><span class="c77 b" style="left:561px">upload</span><span class="c9" style="left:785px">256470</span><span class="c0" style="left:841px">php-fpm</span><span class="c9" style="left:977px">php-fpm: pool sasha-php84w.conf</span><span class="c0" style="left:1417px">1</span><span class="c0" style="left:1537px">26M</span><span class="c0" style="left:1625px">0.0</span></div>
<div class="r" style="top:975px"><span class="c27" style="left:17px">35K</span></div>
<div class="r" style="top:991px"><span class="c43 b" style="left:777px">↑</span><span class="c77 b" style="left:793px">select</span><span class="c69 b" style="left:849px">↓</span><span class="c1" style="left:873px">info</span><span class="c1" style="left:937px">terminate</span><span class="c1" style="left:1025px">kill</span><span class="c1" style="left:1073px">signals</span><span class="c77 b" style="left:1625px">0/35</span></div>
</div>
</body></html>
